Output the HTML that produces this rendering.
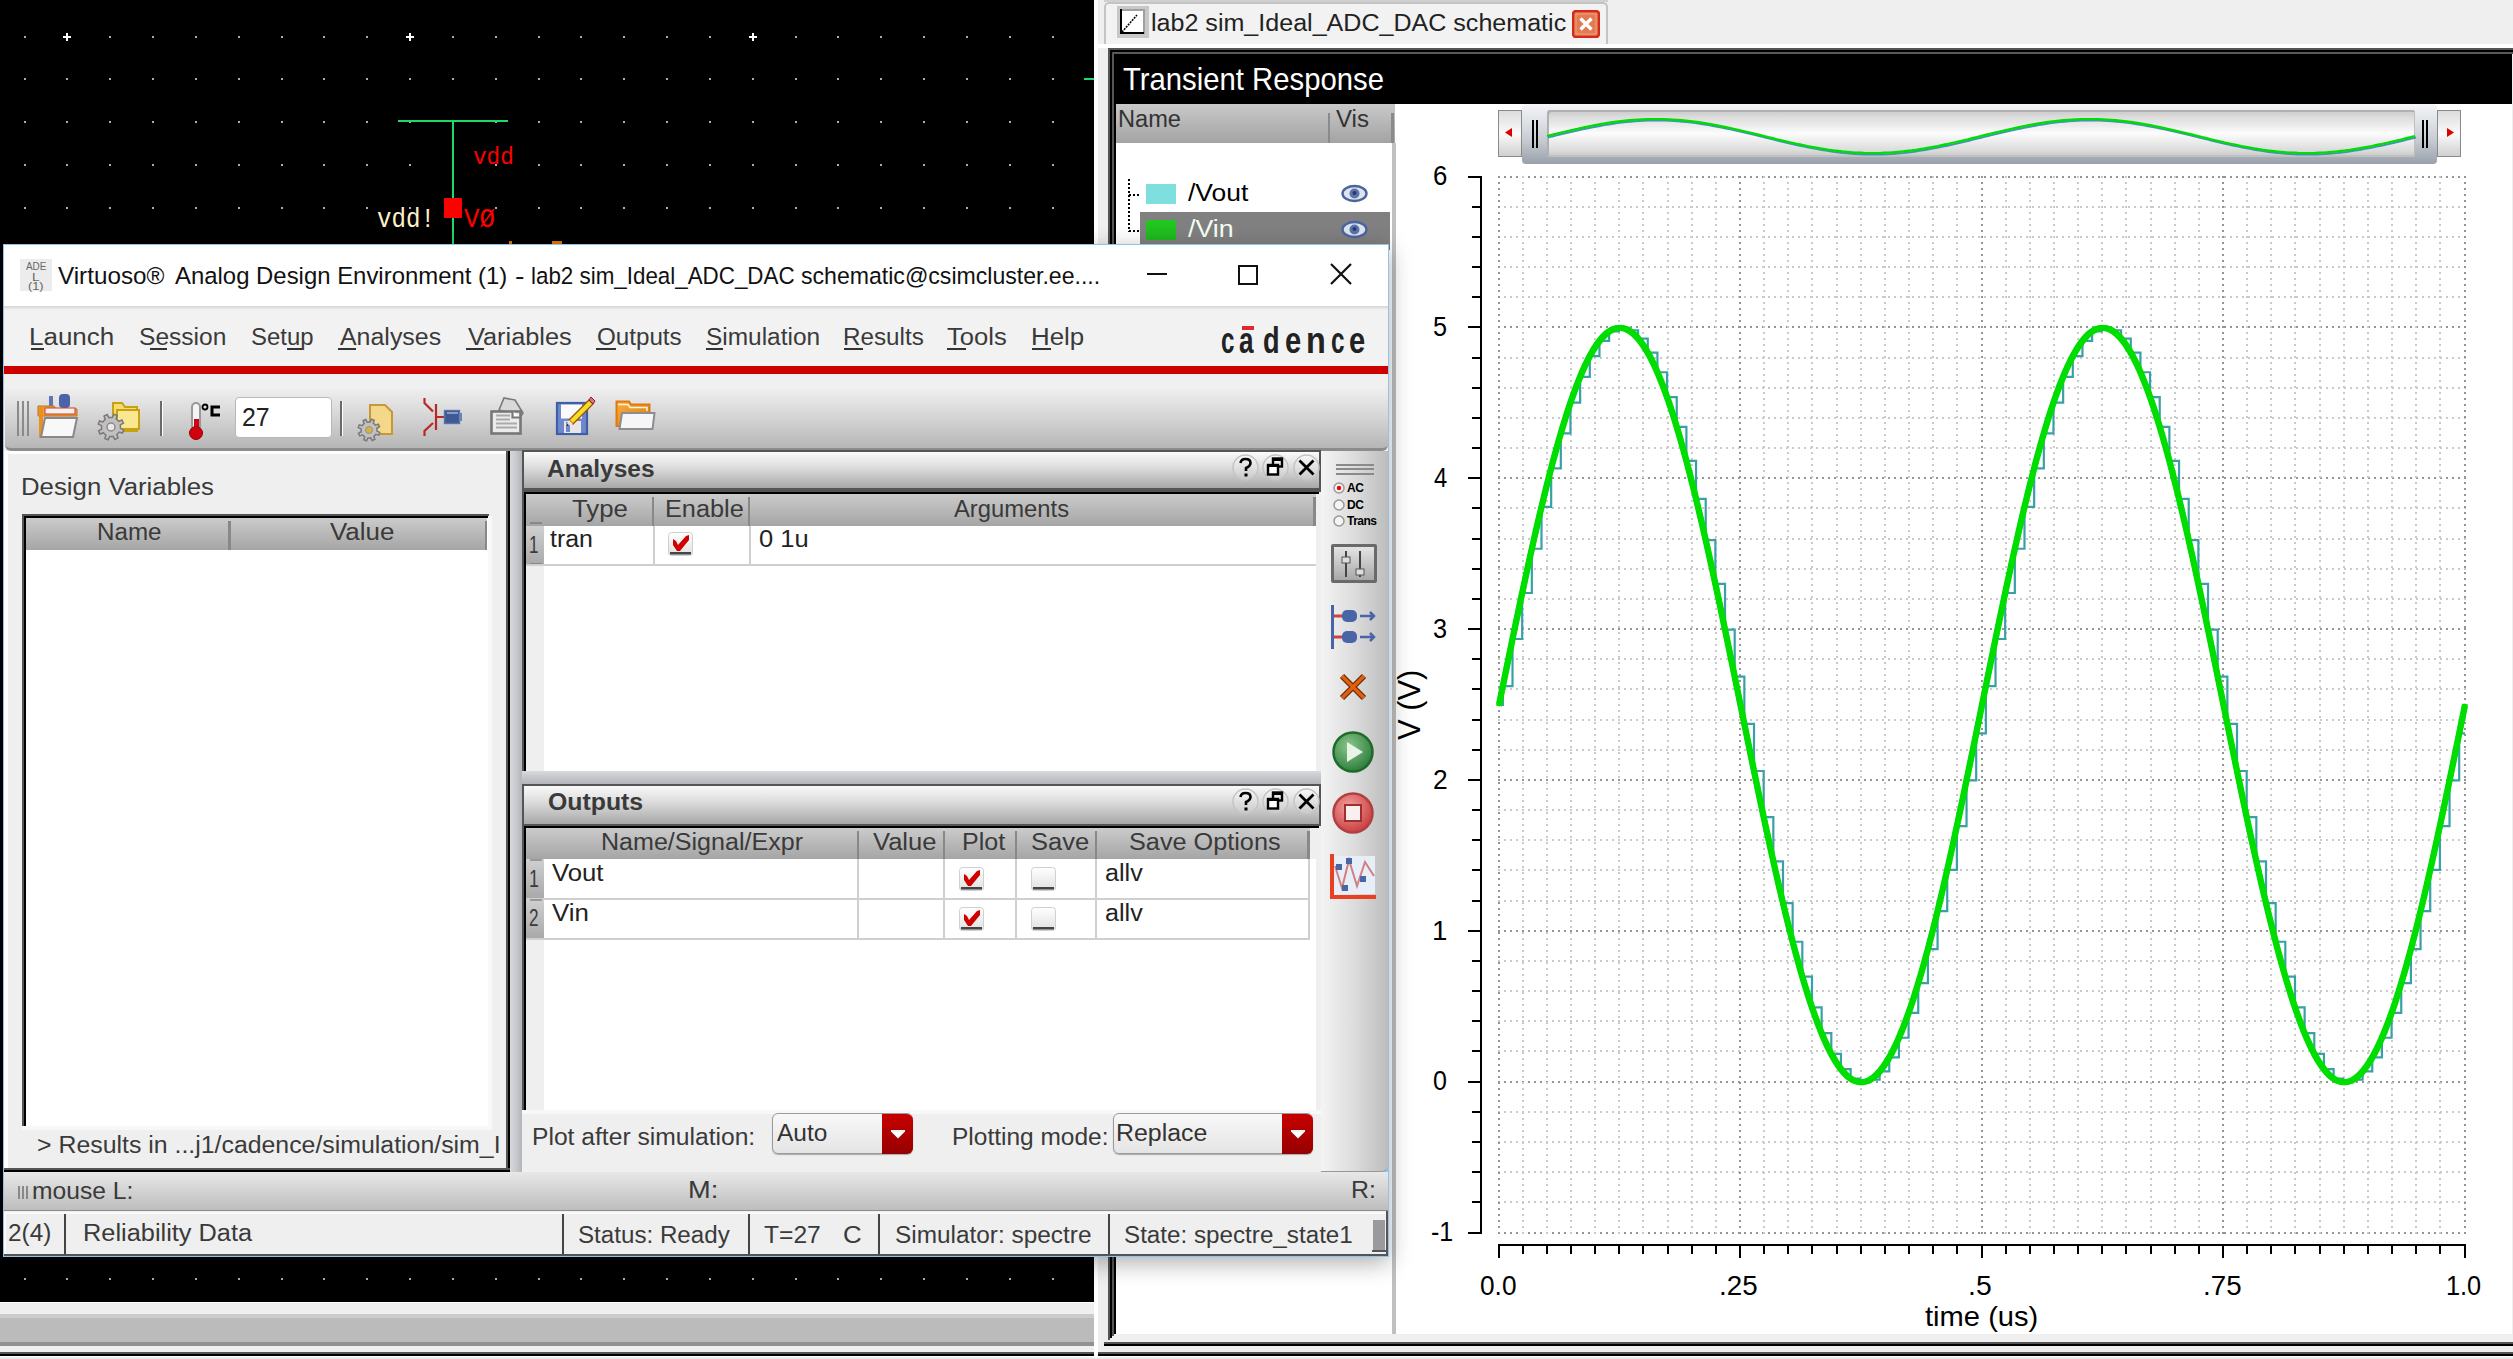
<!DOCTYPE html><html><head><meta charset="utf-8"><style>html,body{margin:0;padding:0;width:2513px;height:1359px;overflow:hidden;background:#efefef;}body{position:relative;font-family:"Liberation Sans",sans-serif;}</style></head><body>
<div style="position:absolute;left:0px;top:0px;width:1094px;height:1302px;background:#000;"></div>
<svg style="position:absolute;left:0;top:0" width="1094" height="1302"><g fill="#a9a9c9"><rect x="24" y="36" width="2" height="2"/><rect x="66" y="36" width="2" height="2"/><rect x="109" y="36" width="2" height="2"/><rect x="152" y="36" width="2" height="2"/><rect x="195" y="36" width="2" height="2"/><rect x="238" y="36" width="2" height="2"/><rect x="281" y="36" width="2" height="2"/><rect x="323" y="36" width="2" height="2"/><rect x="366" y="36" width="2" height="2"/><rect x="409" y="36" width="2" height="2"/><rect x="452" y="36" width="2" height="2"/><rect x="495" y="36" width="2" height="2"/><rect x="538" y="36" width="2" height="2"/><rect x="580" y="36" width="2" height="2"/><rect x="623" y="36" width="2" height="2"/><rect x="666" y="36" width="2" height="2"/><rect x="709" y="36" width="2" height="2"/><rect x="752" y="36" width="2" height="2"/><rect x="795" y="36" width="2" height="2"/><rect x="837" y="36" width="2" height="2"/><rect x="880" y="36" width="2" height="2"/><rect x="923" y="36" width="2" height="2"/><rect x="966" y="36" width="2" height="2"/><rect x="1009" y="36" width="2" height="2"/><rect x="1052" y="36" width="2" height="2"/><rect x="24" y="78" width="2" height="2"/><rect x="66" y="78" width="2" height="2"/><rect x="109" y="78" width="2" height="2"/><rect x="152" y="78" width="2" height="2"/><rect x="195" y="78" width="2" height="2"/><rect x="238" y="78" width="2" height="2"/><rect x="281" y="78" width="2" height="2"/><rect x="323" y="78" width="2" height="2"/><rect x="366" y="78" width="2" height="2"/><rect x="409" y="78" width="2" height="2"/><rect x="452" y="78" width="2" height="2"/><rect x="495" y="78" width="2" height="2"/><rect x="538" y="78" width="2" height="2"/><rect x="580" y="78" width="2" height="2"/><rect x="623" y="78" width="2" height="2"/><rect x="666" y="78" width="2" height="2"/><rect x="709" y="78" width="2" height="2"/><rect x="752" y="78" width="2" height="2"/><rect x="795" y="78" width="2" height="2"/><rect x="837" y="78" width="2" height="2"/><rect x="880" y="78" width="2" height="2"/><rect x="923" y="78" width="2" height="2"/><rect x="966" y="78" width="2" height="2"/><rect x="1009" y="78" width="2" height="2"/><rect x="1052" y="78" width="2" height="2"/><rect x="24" y="121" width="2" height="2"/><rect x="66" y="121" width="2" height="2"/><rect x="109" y="121" width="2" height="2"/><rect x="152" y="121" width="2" height="2"/><rect x="195" y="121" width="2" height="2"/><rect x="238" y="121" width="2" height="2"/><rect x="281" y="121" width="2" height="2"/><rect x="323" y="121" width="2" height="2"/><rect x="366" y="121" width="2" height="2"/><rect x="409" y="121" width="2" height="2"/><rect x="452" y="121" width="2" height="2"/><rect x="495" y="121" width="2" height="2"/><rect x="538" y="121" width="2" height="2"/><rect x="580" y="121" width="2" height="2"/><rect x="623" y="121" width="2" height="2"/><rect x="666" y="121" width="2" height="2"/><rect x="709" y="121" width="2" height="2"/><rect x="752" y="121" width="2" height="2"/><rect x="795" y="121" width="2" height="2"/><rect x="837" y="121" width="2" height="2"/><rect x="880" y="121" width="2" height="2"/><rect x="923" y="121" width="2" height="2"/><rect x="966" y="121" width="2" height="2"/><rect x="1009" y="121" width="2" height="2"/><rect x="1052" y="121" width="2" height="2"/><rect x="24" y="164" width="2" height="2"/><rect x="66" y="164" width="2" height="2"/><rect x="109" y="164" width="2" height="2"/><rect x="152" y="164" width="2" height="2"/><rect x="195" y="164" width="2" height="2"/><rect x="238" y="164" width="2" height="2"/><rect x="281" y="164" width="2" height="2"/><rect x="323" y="164" width="2" height="2"/><rect x="366" y="164" width="2" height="2"/><rect x="409" y="164" width="2" height="2"/><rect x="452" y="164" width="2" height="2"/><rect x="495" y="164" width="2" height="2"/><rect x="538" y="164" width="2" height="2"/><rect x="580" y="164" width="2" height="2"/><rect x="623" y="164" width="2" height="2"/><rect x="666" y="164" width="2" height="2"/><rect x="709" y="164" width="2" height="2"/><rect x="752" y="164" width="2" height="2"/><rect x="795" y="164" width="2" height="2"/><rect x="837" y="164" width="2" height="2"/><rect x="880" y="164" width="2" height="2"/><rect x="923" y="164" width="2" height="2"/><rect x="966" y="164" width="2" height="2"/><rect x="1009" y="164" width="2" height="2"/><rect x="1052" y="164" width="2" height="2"/><rect x="24" y="207" width="2" height="2"/><rect x="66" y="207" width="2" height="2"/><rect x="109" y="207" width="2" height="2"/><rect x="152" y="207" width="2" height="2"/><rect x="195" y="207" width="2" height="2"/><rect x="238" y="207" width="2" height="2"/><rect x="281" y="207" width="2" height="2"/><rect x="323" y="207" width="2" height="2"/><rect x="366" y="207" width="2" height="2"/><rect x="409" y="207" width="2" height="2"/><rect x="452" y="207" width="2" height="2"/><rect x="495" y="207" width="2" height="2"/><rect x="538" y="207" width="2" height="2"/><rect x="580" y="207" width="2" height="2"/><rect x="623" y="207" width="2" height="2"/><rect x="666" y="207" width="2" height="2"/><rect x="709" y="207" width="2" height="2"/><rect x="752" y="207" width="2" height="2"/><rect x="795" y="207" width="2" height="2"/><rect x="837" y="207" width="2" height="2"/><rect x="880" y="207" width="2" height="2"/><rect x="923" y="207" width="2" height="2"/><rect x="966" y="207" width="2" height="2"/><rect x="1009" y="207" width="2" height="2"/><rect x="1052" y="207" width="2" height="2"/><rect x="24" y="250" width="2" height="2"/><rect x="66" y="250" width="2" height="2"/><rect x="109" y="250" width="2" height="2"/><rect x="152" y="250" width="2" height="2"/><rect x="195" y="250" width="2" height="2"/><rect x="238" y="250" width="2" height="2"/><rect x="281" y="250" width="2" height="2"/><rect x="323" y="250" width="2" height="2"/><rect x="366" y="250" width="2" height="2"/><rect x="409" y="250" width="2" height="2"/><rect x="452" y="250" width="2" height="2"/><rect x="495" y="250" width="2" height="2"/><rect x="538" y="250" width="2" height="2"/><rect x="580" y="250" width="2" height="2"/><rect x="623" y="250" width="2" height="2"/><rect x="666" y="250" width="2" height="2"/><rect x="709" y="250" width="2" height="2"/><rect x="752" y="250" width="2" height="2"/><rect x="795" y="250" width="2" height="2"/><rect x="837" y="250" width="2" height="2"/><rect x="880" y="250" width="2" height="2"/><rect x="923" y="250" width="2" height="2"/><rect x="966" y="250" width="2" height="2"/><rect x="1009" y="250" width="2" height="2"/><rect x="1052" y="250" width="2" height="2"/><rect x="24" y="293" width="2" height="2"/><rect x="66" y="293" width="2" height="2"/><rect x="109" y="293" width="2" height="2"/><rect x="152" y="293" width="2" height="2"/><rect x="195" y="293" width="2" height="2"/><rect x="238" y="293" width="2" height="2"/><rect x="281" y="293" width="2" height="2"/><rect x="323" y="293" width="2" height="2"/><rect x="366" y="293" width="2" height="2"/><rect x="409" y="293" width="2" height="2"/><rect x="452" y="293" width="2" height="2"/><rect x="495" y="293" width="2" height="2"/><rect x="538" y="293" width="2" height="2"/><rect x="580" y="293" width="2" height="2"/><rect x="623" y="293" width="2" height="2"/><rect x="666" y="293" width="2" height="2"/><rect x="709" y="293" width="2" height="2"/><rect x="752" y="293" width="2" height="2"/><rect x="795" y="293" width="2" height="2"/><rect x="837" y="293" width="2" height="2"/><rect x="880" y="293" width="2" height="2"/><rect x="923" y="293" width="2" height="2"/><rect x="966" y="293" width="2" height="2"/><rect x="1009" y="293" width="2" height="2"/><rect x="1052" y="293" width="2" height="2"/><rect x="24" y="335" width="2" height="2"/><rect x="66" y="335" width="2" height="2"/><rect x="109" y="335" width="2" height="2"/><rect x="152" y="335" width="2" height="2"/><rect x="195" y="335" width="2" height="2"/><rect x="238" y="335" width="2" height="2"/><rect x="281" y="335" width="2" height="2"/><rect x="323" y="335" width="2" height="2"/><rect x="366" y="335" width="2" height="2"/><rect x="409" y="335" width="2" height="2"/><rect x="452" y="335" width="2" height="2"/><rect x="495" y="335" width="2" height="2"/><rect x="538" y="335" width="2" height="2"/><rect x="580" y="335" width="2" height="2"/><rect x="623" y="335" width="2" height="2"/><rect x="666" y="335" width="2" height="2"/><rect x="709" y="335" width="2" height="2"/><rect x="752" y="335" width="2" height="2"/><rect x="795" y="335" width="2" height="2"/><rect x="837" y="335" width="2" height="2"/><rect x="880" y="335" width="2" height="2"/><rect x="923" y="335" width="2" height="2"/><rect x="966" y="335" width="2" height="2"/><rect x="1009" y="335" width="2" height="2"/><rect x="1052" y="335" width="2" height="2"/><rect x="24" y="378" width="2" height="2"/><rect x="66" y="378" width="2" height="2"/><rect x="109" y="378" width="2" height="2"/><rect x="152" y="378" width="2" height="2"/><rect x="195" y="378" width="2" height="2"/><rect x="238" y="378" width="2" height="2"/><rect x="281" y="378" width="2" height="2"/><rect x="323" y="378" width="2" height="2"/><rect x="366" y="378" width="2" height="2"/><rect x="409" y="378" width="2" height="2"/><rect x="452" y="378" width="2" height="2"/><rect x="495" y="378" width="2" height="2"/><rect x="538" y="378" width="2" height="2"/><rect x="580" y="378" width="2" height="2"/><rect x="623" y="378" width="2" height="2"/><rect x="666" y="378" width="2" height="2"/><rect x="709" y="378" width="2" height="2"/><rect x="752" y="378" width="2" height="2"/><rect x="795" y="378" width="2" height="2"/><rect x="837" y="378" width="2" height="2"/><rect x="880" y="378" width="2" height="2"/><rect x="923" y="378" width="2" height="2"/><rect x="966" y="378" width="2" height="2"/><rect x="1009" y="378" width="2" height="2"/><rect x="1052" y="378" width="2" height="2"/><rect x="24" y="421" width="2" height="2"/><rect x="66" y="421" width="2" height="2"/><rect x="109" y="421" width="2" height="2"/><rect x="152" y="421" width="2" height="2"/><rect x="195" y="421" width="2" height="2"/><rect x="238" y="421" width="2" height="2"/><rect x="281" y="421" width="2" height="2"/><rect x="323" y="421" width="2" height="2"/><rect x="366" y="421" width="2" height="2"/><rect x="409" y="421" width="2" height="2"/><rect x="452" y="421" width="2" height="2"/><rect x="495" y="421" width="2" height="2"/><rect x="538" y="421" width="2" height="2"/><rect x="580" y="421" width="2" height="2"/><rect x="623" y="421" width="2" height="2"/><rect x="666" y="421" width="2" height="2"/><rect x="709" y="421" width="2" height="2"/><rect x="752" y="421" width="2" height="2"/><rect x="795" y="421" width="2" height="2"/><rect x="837" y="421" width="2" height="2"/><rect x="880" y="421" width="2" height="2"/><rect x="923" y="421" width="2" height="2"/><rect x="966" y="421" width="2" height="2"/><rect x="1009" y="421" width="2" height="2"/><rect x="1052" y="421" width="2" height="2"/><rect x="24" y="464" width="2" height="2"/><rect x="66" y="464" width="2" height="2"/><rect x="109" y="464" width="2" height="2"/><rect x="152" y="464" width="2" height="2"/><rect x="195" y="464" width="2" height="2"/><rect x="238" y="464" width="2" height="2"/><rect x="281" y="464" width="2" height="2"/><rect x="323" y="464" width="2" height="2"/><rect x="366" y="464" width="2" height="2"/><rect x="409" y="464" width="2" height="2"/><rect x="452" y="464" width="2" height="2"/><rect x="495" y="464" width="2" height="2"/><rect x="538" y="464" width="2" height="2"/><rect x="580" y="464" width="2" height="2"/><rect x="623" y="464" width="2" height="2"/><rect x="666" y="464" width="2" height="2"/><rect x="709" y="464" width="2" height="2"/><rect x="752" y="464" width="2" height="2"/><rect x="795" y="464" width="2" height="2"/><rect x="837" y="464" width="2" height="2"/><rect x="880" y="464" width="2" height="2"/><rect x="923" y="464" width="2" height="2"/><rect x="966" y="464" width="2" height="2"/><rect x="1009" y="464" width="2" height="2"/><rect x="1052" y="464" width="2" height="2"/><rect x="24" y="507" width="2" height="2"/><rect x="66" y="507" width="2" height="2"/><rect x="109" y="507" width="2" height="2"/><rect x="152" y="507" width="2" height="2"/><rect x="195" y="507" width="2" height="2"/><rect x="238" y="507" width="2" height="2"/><rect x="281" y="507" width="2" height="2"/><rect x="323" y="507" width="2" height="2"/><rect x="366" y="507" width="2" height="2"/><rect x="409" y="507" width="2" height="2"/><rect x="452" y="507" width="2" height="2"/><rect x="495" y="507" width="2" height="2"/><rect x="538" y="507" width="2" height="2"/><rect x="580" y="507" width="2" height="2"/><rect x="623" y="507" width="2" height="2"/><rect x="666" y="507" width="2" height="2"/><rect x="709" y="507" width="2" height="2"/><rect x="752" y="507" width="2" height="2"/><rect x="795" y="507" width="2" height="2"/><rect x="837" y="507" width="2" height="2"/><rect x="880" y="507" width="2" height="2"/><rect x="923" y="507" width="2" height="2"/><rect x="966" y="507" width="2" height="2"/><rect x="1009" y="507" width="2" height="2"/><rect x="1052" y="507" width="2" height="2"/><rect x="24" y="550" width="2" height="2"/><rect x="66" y="550" width="2" height="2"/><rect x="109" y="550" width="2" height="2"/><rect x="152" y="550" width="2" height="2"/><rect x="195" y="550" width="2" height="2"/><rect x="238" y="550" width="2" height="2"/><rect x="281" y="550" width="2" height="2"/><rect x="323" y="550" width="2" height="2"/><rect x="366" y="550" width="2" height="2"/><rect x="409" y="550" width="2" height="2"/><rect x="452" y="550" width="2" height="2"/><rect x="495" y="550" width="2" height="2"/><rect x="538" y="550" width="2" height="2"/><rect x="580" y="550" width="2" height="2"/><rect x="623" y="550" width="2" height="2"/><rect x="666" y="550" width="2" height="2"/><rect x="709" y="550" width="2" height="2"/><rect x="752" y="550" width="2" height="2"/><rect x="795" y="550" width="2" height="2"/><rect x="837" y="550" width="2" height="2"/><rect x="880" y="550" width="2" height="2"/><rect x="923" y="550" width="2" height="2"/><rect x="966" y="550" width="2" height="2"/><rect x="1009" y="550" width="2" height="2"/><rect x="1052" y="550" width="2" height="2"/><rect x="24" y="592" width="2" height="2"/><rect x="66" y="592" width="2" height="2"/><rect x="109" y="592" width="2" height="2"/><rect x="152" y="592" width="2" height="2"/><rect x="195" y="592" width="2" height="2"/><rect x="238" y="592" width="2" height="2"/><rect x="281" y="592" width="2" height="2"/><rect x="323" y="592" width="2" height="2"/><rect x="366" y="592" width="2" height="2"/><rect x="409" y="592" width="2" height="2"/><rect x="452" y="592" width="2" height="2"/><rect x="495" y="592" width="2" height="2"/><rect x="538" y="592" width="2" height="2"/><rect x="580" y="592" width="2" height="2"/><rect x="623" y="592" width="2" height="2"/><rect x="666" y="592" width="2" height="2"/><rect x="709" y="592" width="2" height="2"/><rect x="752" y="592" width="2" height="2"/><rect x="795" y="592" width="2" height="2"/><rect x="837" y="592" width="2" height="2"/><rect x="880" y="592" width="2" height="2"/><rect x="923" y="592" width="2" height="2"/><rect x="966" y="592" width="2" height="2"/><rect x="1009" y="592" width="2" height="2"/><rect x="1052" y="592" width="2" height="2"/><rect x="24" y="635" width="2" height="2"/><rect x="66" y="635" width="2" height="2"/><rect x="109" y="635" width="2" height="2"/><rect x="152" y="635" width="2" height="2"/><rect x="195" y="635" width="2" height="2"/><rect x="238" y="635" width="2" height="2"/><rect x="281" y="635" width="2" height="2"/><rect x="323" y="635" width="2" height="2"/><rect x="366" y="635" width="2" height="2"/><rect x="409" y="635" width="2" height="2"/><rect x="452" y="635" width="2" height="2"/><rect x="495" y="635" width="2" height="2"/><rect x="538" y="635" width="2" height="2"/><rect x="580" y="635" width="2" height="2"/><rect x="623" y="635" width="2" height="2"/><rect x="666" y="635" width="2" height="2"/><rect x="709" y="635" width="2" height="2"/><rect x="752" y="635" width="2" height="2"/><rect x="795" y="635" width="2" height="2"/><rect x="837" y="635" width="2" height="2"/><rect x="880" y="635" width="2" height="2"/><rect x="923" y="635" width="2" height="2"/><rect x="966" y="635" width="2" height="2"/><rect x="1009" y="635" width="2" height="2"/><rect x="1052" y="635" width="2" height="2"/><rect x="24" y="678" width="2" height="2"/><rect x="66" y="678" width="2" height="2"/><rect x="109" y="678" width="2" height="2"/><rect x="152" y="678" width="2" height="2"/><rect x="195" y="678" width="2" height="2"/><rect x="238" y="678" width="2" height="2"/><rect x="281" y="678" width="2" height="2"/><rect x="323" y="678" width="2" height="2"/><rect x="366" y="678" width="2" height="2"/><rect x="409" y="678" width="2" height="2"/><rect x="452" y="678" width="2" height="2"/><rect x="495" y="678" width="2" height="2"/><rect x="538" y="678" width="2" height="2"/><rect x="580" y="678" width="2" height="2"/><rect x="623" y="678" width="2" height="2"/><rect x="666" y="678" width="2" height="2"/><rect x="709" y="678" width="2" height="2"/><rect x="752" y="678" width="2" height="2"/><rect x="795" y="678" width="2" height="2"/><rect x="837" y="678" width="2" height="2"/><rect x="880" y="678" width="2" height="2"/><rect x="923" y="678" width="2" height="2"/><rect x="966" y="678" width="2" height="2"/><rect x="1009" y="678" width="2" height="2"/><rect x="1052" y="678" width="2" height="2"/><rect x="24" y="721" width="2" height="2"/><rect x="66" y="721" width="2" height="2"/><rect x="109" y="721" width="2" height="2"/><rect x="152" y="721" width="2" height="2"/><rect x="195" y="721" width="2" height="2"/><rect x="238" y="721" width="2" height="2"/><rect x="281" y="721" width="2" height="2"/><rect x="323" y="721" width="2" height="2"/><rect x="366" y="721" width="2" height="2"/><rect x="409" y="721" width="2" height="2"/><rect x="452" y="721" width="2" height="2"/><rect x="495" y="721" width="2" height="2"/><rect x="538" y="721" width="2" height="2"/><rect x="580" y="721" width="2" height="2"/><rect x="623" y="721" width="2" height="2"/><rect x="666" y="721" width="2" height="2"/><rect x="709" y="721" width="2" height="2"/><rect x="752" y="721" width="2" height="2"/><rect x="795" y="721" width="2" height="2"/><rect x="837" y="721" width="2" height="2"/><rect x="880" y="721" width="2" height="2"/><rect x="923" y="721" width="2" height="2"/><rect x="966" y="721" width="2" height="2"/><rect x="1009" y="721" width="2" height="2"/><rect x="1052" y="721" width="2" height="2"/><rect x="24" y="764" width="2" height="2"/><rect x="66" y="764" width="2" height="2"/><rect x="109" y="764" width="2" height="2"/><rect x="152" y="764" width="2" height="2"/><rect x="195" y="764" width="2" height="2"/><rect x="238" y="764" width="2" height="2"/><rect x="281" y="764" width="2" height="2"/><rect x="323" y="764" width="2" height="2"/><rect x="366" y="764" width="2" height="2"/><rect x="409" y="764" width="2" height="2"/><rect x="452" y="764" width="2" height="2"/><rect x="495" y="764" width="2" height="2"/><rect x="538" y="764" width="2" height="2"/><rect x="580" y="764" width="2" height="2"/><rect x="623" y="764" width="2" height="2"/><rect x="666" y="764" width="2" height="2"/><rect x="709" y="764" width="2" height="2"/><rect x="752" y="764" width="2" height="2"/><rect x="795" y="764" width="2" height="2"/><rect x="837" y="764" width="2" height="2"/><rect x="880" y="764" width="2" height="2"/><rect x="923" y="764" width="2" height="2"/><rect x="966" y="764" width="2" height="2"/><rect x="1009" y="764" width="2" height="2"/><rect x="1052" y="764" width="2" height="2"/><rect x="24" y="807" width="2" height="2"/><rect x="66" y="807" width="2" height="2"/><rect x="109" y="807" width="2" height="2"/><rect x="152" y="807" width="2" height="2"/><rect x="195" y="807" width="2" height="2"/><rect x="238" y="807" width="2" height="2"/><rect x="281" y="807" width="2" height="2"/><rect x="323" y="807" width="2" height="2"/><rect x="366" y="807" width="2" height="2"/><rect x="409" y="807" width="2" height="2"/><rect x="452" y="807" width="2" height="2"/><rect x="495" y="807" width="2" height="2"/><rect x="538" y="807" width="2" height="2"/><rect x="580" y="807" width="2" height="2"/><rect x="623" y="807" width="2" height="2"/><rect x="666" y="807" width="2" height="2"/><rect x="709" y="807" width="2" height="2"/><rect x="752" y="807" width="2" height="2"/><rect x="795" y="807" width="2" height="2"/><rect x="837" y="807" width="2" height="2"/><rect x="880" y="807" width="2" height="2"/><rect x="923" y="807" width="2" height="2"/><rect x="966" y="807" width="2" height="2"/><rect x="1009" y="807" width="2" height="2"/><rect x="1052" y="807" width="2" height="2"/><rect x="24" y="849" width="2" height="2"/><rect x="66" y="849" width="2" height="2"/><rect x="109" y="849" width="2" height="2"/><rect x="152" y="849" width="2" height="2"/><rect x="195" y="849" width="2" height="2"/><rect x="238" y="849" width="2" height="2"/><rect x="281" y="849" width="2" height="2"/><rect x="323" y="849" width="2" height="2"/><rect x="366" y="849" width="2" height="2"/><rect x="409" y="849" width="2" height="2"/><rect x="452" y="849" width="2" height="2"/><rect x="495" y="849" width="2" height="2"/><rect x="538" y="849" width="2" height="2"/><rect x="580" y="849" width="2" height="2"/><rect x="623" y="849" width="2" height="2"/><rect x="666" y="849" width="2" height="2"/><rect x="709" y="849" width="2" height="2"/><rect x="752" y="849" width="2" height="2"/><rect x="795" y="849" width="2" height="2"/><rect x="837" y="849" width="2" height="2"/><rect x="880" y="849" width="2" height="2"/><rect x="923" y="849" width="2" height="2"/><rect x="966" y="849" width="2" height="2"/><rect x="1009" y="849" width="2" height="2"/><rect x="1052" y="849" width="2" height="2"/><rect x="24" y="892" width="2" height="2"/><rect x="66" y="892" width="2" height="2"/><rect x="109" y="892" width="2" height="2"/><rect x="152" y="892" width="2" height="2"/><rect x="195" y="892" width="2" height="2"/><rect x="238" y="892" width="2" height="2"/><rect x="281" y="892" width="2" height="2"/><rect x="323" y="892" width="2" height="2"/><rect x="366" y="892" width="2" height="2"/><rect x="409" y="892" width="2" height="2"/><rect x="452" y="892" width="2" height="2"/><rect x="495" y="892" width="2" height="2"/><rect x="538" y="892" width="2" height="2"/><rect x="580" y="892" width="2" height="2"/><rect x="623" y="892" width="2" height="2"/><rect x="666" y="892" width="2" height="2"/><rect x="709" y="892" width="2" height="2"/><rect x="752" y="892" width="2" height="2"/><rect x="795" y="892" width="2" height="2"/><rect x="837" y="892" width="2" height="2"/><rect x="880" y="892" width="2" height="2"/><rect x="923" y="892" width="2" height="2"/><rect x="966" y="892" width="2" height="2"/><rect x="1009" y="892" width="2" height="2"/><rect x="1052" y="892" width="2" height="2"/><rect x="24" y="935" width="2" height="2"/><rect x="66" y="935" width="2" height="2"/><rect x="109" y="935" width="2" height="2"/><rect x="152" y="935" width="2" height="2"/><rect x="195" y="935" width="2" height="2"/><rect x="238" y="935" width="2" height="2"/><rect x="281" y="935" width="2" height="2"/><rect x="323" y="935" width="2" height="2"/><rect x="366" y="935" width="2" height="2"/><rect x="409" y="935" width="2" height="2"/><rect x="452" y="935" width="2" height="2"/><rect x="495" y="935" width="2" height="2"/><rect x="538" y="935" width="2" height="2"/><rect x="580" y="935" width="2" height="2"/><rect x="623" y="935" width="2" height="2"/><rect x="666" y="935" width="2" height="2"/><rect x="709" y="935" width="2" height="2"/><rect x="752" y="935" width="2" height="2"/><rect x="795" y="935" width="2" height="2"/><rect x="837" y="935" width="2" height="2"/><rect x="880" y="935" width="2" height="2"/><rect x="923" y="935" width="2" height="2"/><rect x="966" y="935" width="2" height="2"/><rect x="1009" y="935" width="2" height="2"/><rect x="1052" y="935" width="2" height="2"/><rect x="24" y="978" width="2" height="2"/><rect x="66" y="978" width="2" height="2"/><rect x="109" y="978" width="2" height="2"/><rect x="152" y="978" width="2" height="2"/><rect x="195" y="978" width="2" height="2"/><rect x="238" y="978" width="2" height="2"/><rect x="281" y="978" width="2" height="2"/><rect x="323" y="978" width="2" height="2"/><rect x="366" y="978" width="2" height="2"/><rect x="409" y="978" width="2" height="2"/><rect x="452" y="978" width="2" height="2"/><rect x="495" y="978" width="2" height="2"/><rect x="538" y="978" width="2" height="2"/><rect x="580" y="978" width="2" height="2"/><rect x="623" y="978" width="2" height="2"/><rect x="666" y="978" width="2" height="2"/><rect x="709" y="978" width="2" height="2"/><rect x="752" y="978" width="2" height="2"/><rect x="795" y="978" width="2" height="2"/><rect x="837" y="978" width="2" height="2"/><rect x="880" y="978" width="2" height="2"/><rect x="923" y="978" width="2" height="2"/><rect x="966" y="978" width="2" height="2"/><rect x="1009" y="978" width="2" height="2"/><rect x="1052" y="978" width="2" height="2"/><rect x="24" y="1021" width="2" height="2"/><rect x="66" y="1021" width="2" height="2"/><rect x="109" y="1021" width="2" height="2"/><rect x="152" y="1021" width="2" height="2"/><rect x="195" y="1021" width="2" height="2"/><rect x="238" y="1021" width="2" height="2"/><rect x="281" y="1021" width="2" height="2"/><rect x="323" y="1021" width="2" height="2"/><rect x="366" y="1021" width="2" height="2"/><rect x="409" y="1021" width="2" height="2"/><rect x="452" y="1021" width="2" height="2"/><rect x="495" y="1021" width="2" height="2"/><rect x="538" y="1021" width="2" height="2"/><rect x="580" y="1021" width="2" height="2"/><rect x="623" y="1021" width="2" height="2"/><rect x="666" y="1021" width="2" height="2"/><rect x="709" y="1021" width="2" height="2"/><rect x="752" y="1021" width="2" height="2"/><rect x="795" y="1021" width="2" height="2"/><rect x="837" y="1021" width="2" height="2"/><rect x="880" y="1021" width="2" height="2"/><rect x="923" y="1021" width="2" height="2"/><rect x="966" y="1021" width="2" height="2"/><rect x="1009" y="1021" width="2" height="2"/><rect x="1052" y="1021" width="2" height="2"/><rect x="24" y="1064" width="2" height="2"/><rect x="66" y="1064" width="2" height="2"/><rect x="109" y="1064" width="2" height="2"/><rect x="152" y="1064" width="2" height="2"/><rect x="195" y="1064" width="2" height="2"/><rect x="238" y="1064" width="2" height="2"/><rect x="281" y="1064" width="2" height="2"/><rect x="323" y="1064" width="2" height="2"/><rect x="366" y="1064" width="2" height="2"/><rect x="409" y="1064" width="2" height="2"/><rect x="452" y="1064" width="2" height="2"/><rect x="495" y="1064" width="2" height="2"/><rect x="538" y="1064" width="2" height="2"/><rect x="580" y="1064" width="2" height="2"/><rect x="623" y="1064" width="2" height="2"/><rect x="666" y="1064" width="2" height="2"/><rect x="709" y="1064" width="2" height="2"/><rect x="752" y="1064" width="2" height="2"/><rect x="795" y="1064" width="2" height="2"/><rect x="837" y="1064" width="2" height="2"/><rect x="880" y="1064" width="2" height="2"/><rect x="923" y="1064" width="2" height="2"/><rect x="966" y="1064" width="2" height="2"/><rect x="1009" y="1064" width="2" height="2"/><rect x="1052" y="1064" width="2" height="2"/><rect x="24" y="1106" width="2" height="2"/><rect x="66" y="1106" width="2" height="2"/><rect x="109" y="1106" width="2" height="2"/><rect x="152" y="1106" width="2" height="2"/><rect x="195" y="1106" width="2" height="2"/><rect x="238" y="1106" width="2" height="2"/><rect x="281" y="1106" width="2" height="2"/><rect x="323" y="1106" width="2" height="2"/><rect x="366" y="1106" width="2" height="2"/><rect x="409" y="1106" width="2" height="2"/><rect x="452" y="1106" width="2" height="2"/><rect x="495" y="1106" width="2" height="2"/><rect x="538" y="1106" width="2" height="2"/><rect x="580" y="1106" width="2" height="2"/><rect x="623" y="1106" width="2" height="2"/><rect x="666" y="1106" width="2" height="2"/><rect x="709" y="1106" width="2" height="2"/><rect x="752" y="1106" width="2" height="2"/><rect x="795" y="1106" width="2" height="2"/><rect x="837" y="1106" width="2" height="2"/><rect x="880" y="1106" width="2" height="2"/><rect x="923" y="1106" width="2" height="2"/><rect x="966" y="1106" width="2" height="2"/><rect x="1009" y="1106" width="2" height="2"/><rect x="1052" y="1106" width="2" height="2"/><rect x="24" y="1149" width="2" height="2"/><rect x="66" y="1149" width="2" height="2"/><rect x="109" y="1149" width="2" height="2"/><rect x="152" y="1149" width="2" height="2"/><rect x="195" y="1149" width="2" height="2"/><rect x="238" y="1149" width="2" height="2"/><rect x="281" y="1149" width="2" height="2"/><rect x="323" y="1149" width="2" height="2"/><rect x="366" y="1149" width="2" height="2"/><rect x="409" y="1149" width="2" height="2"/><rect x="452" y="1149" width="2" height="2"/><rect x="495" y="1149" width="2" height="2"/><rect x="538" y="1149" width="2" height="2"/><rect x="580" y="1149" width="2" height="2"/><rect x="623" y="1149" width="2" height="2"/><rect x="666" y="1149" width="2" height="2"/><rect x="709" y="1149" width="2" height="2"/><rect x="752" y="1149" width="2" height="2"/><rect x="795" y="1149" width="2" height="2"/><rect x="837" y="1149" width="2" height="2"/><rect x="880" y="1149" width="2" height="2"/><rect x="923" y="1149" width="2" height="2"/><rect x="966" y="1149" width="2" height="2"/><rect x="1009" y="1149" width="2" height="2"/><rect x="1052" y="1149" width="2" height="2"/><rect x="24" y="1192" width="2" height="2"/><rect x="66" y="1192" width="2" height="2"/><rect x="109" y="1192" width="2" height="2"/><rect x="152" y="1192" width="2" height="2"/><rect x="195" y="1192" width="2" height="2"/><rect x="238" y="1192" width="2" height="2"/><rect x="281" y="1192" width="2" height="2"/><rect x="323" y="1192" width="2" height="2"/><rect x="366" y="1192" width="2" height="2"/><rect x="409" y="1192" width="2" height="2"/><rect x="452" y="1192" width="2" height="2"/><rect x="495" y="1192" width="2" height="2"/><rect x="538" y="1192" width="2" height="2"/><rect x="580" y="1192" width="2" height="2"/><rect x="623" y="1192" width="2" height="2"/><rect x="666" y="1192" width="2" height="2"/><rect x="709" y="1192" width="2" height="2"/><rect x="752" y="1192" width="2" height="2"/><rect x="795" y="1192" width="2" height="2"/><rect x="837" y="1192" width="2" height="2"/><rect x="880" y="1192" width="2" height="2"/><rect x="923" y="1192" width="2" height="2"/><rect x="966" y="1192" width="2" height="2"/><rect x="1009" y="1192" width="2" height="2"/><rect x="1052" y="1192" width="2" height="2"/><rect x="24" y="1235" width="2" height="2"/><rect x="66" y="1235" width="2" height="2"/><rect x="109" y="1235" width="2" height="2"/><rect x="152" y="1235" width="2" height="2"/><rect x="195" y="1235" width="2" height="2"/><rect x="238" y="1235" width="2" height="2"/><rect x="281" y="1235" width="2" height="2"/><rect x="323" y="1235" width="2" height="2"/><rect x="366" y="1235" width="2" height="2"/><rect x="409" y="1235" width="2" height="2"/><rect x="452" y="1235" width="2" height="2"/><rect x="495" y="1235" width="2" height="2"/><rect x="538" y="1235" width="2" height="2"/><rect x="580" y="1235" width="2" height="2"/><rect x="623" y="1235" width="2" height="2"/><rect x="666" y="1235" width="2" height="2"/><rect x="709" y="1235" width="2" height="2"/><rect x="752" y="1235" width="2" height="2"/><rect x="795" y="1235" width="2" height="2"/><rect x="837" y="1235" width="2" height="2"/><rect x="880" y="1235" width="2" height="2"/><rect x="923" y="1235" width="2" height="2"/><rect x="966" y="1235" width="2" height="2"/><rect x="1009" y="1235" width="2" height="2"/><rect x="1052" y="1235" width="2" height="2"/><rect x="24" y="1278" width="2" height="2"/><rect x="66" y="1278" width="2" height="2"/><rect x="109" y="1278" width="2" height="2"/><rect x="152" y="1278" width="2" height="2"/><rect x="195" y="1278" width="2" height="2"/><rect x="238" y="1278" width="2" height="2"/><rect x="281" y="1278" width="2" height="2"/><rect x="323" y="1278" width="2" height="2"/><rect x="366" y="1278" width="2" height="2"/><rect x="409" y="1278" width="2" height="2"/><rect x="452" y="1278" width="2" height="2"/><rect x="495" y="1278" width="2" height="2"/><rect x="538" y="1278" width="2" height="2"/><rect x="580" y="1278" width="2" height="2"/><rect x="623" y="1278" width="2" height="2"/><rect x="666" y="1278" width="2" height="2"/><rect x="709" y="1278" width="2" height="2"/><rect x="752" y="1278" width="2" height="2"/><rect x="795" y="1278" width="2" height="2"/><rect x="837" y="1278" width="2" height="2"/><rect x="880" y="1278" width="2" height="2"/><rect x="923" y="1278" width="2" height="2"/><rect x="966" y="1278" width="2" height="2"/><rect x="1009" y="1278" width="2" height="2"/><rect x="1052" y="1278" width="2" height="2"/></g><g fill="#fff"><rect x="63" y="36" width="8" height="2"/><rect x="66" y="33" width="2" height="8"/><rect x="406" y="36" width="8" height="2"/><rect x="409" y="33" width="2" height="8"/><rect x="749" y="36" width="8" height="2"/><rect x="752" y="33" width="2" height="8"/></g><g fill="#1bd96a"><rect x="398" y="120" width="110" height="2"/><rect x="452" y="121" width="2" height="130"/><rect x="1084" y="78" width="10" height="2"/></g><rect x="444" y="198" width="18" height="20" fill="#ff0000"/><rect x="509" y="241" width="3" height="3" fill="#e07800"/><rect x="552" y="241" width="10" height="3" fill="#e07800"/></svg>
<div style="position:absolute;left:473.21px;top:146.03px;font:400 23.5px/1 'Liberation Mono',monospace;color:#ff0000;white-space:pre;transform-origin:0 0;transform:scaleX(0.9654);">vdd</div>
<div style="position:absolute;left:377.16px;top:207.05px;font:400 27px/1 'Liberation Mono',monospace;color:#fff0c8;white-space:pre;transform-origin:0 0;transform:scaleX(0.8931);">vdd!</div>
<div style="position:absolute;left:463.87px;top:207.05px;font:400 27px/1 'Liberation Mono',monospace;color:#ff0000;white-space:pre;transform-origin:0 0;transform:scaleX(0.9537);">VØ</div>
<div style="position:absolute;left:1094px;top:0px;width:4px;height:1357px;background:#ffffff;"></div>
<div style="position:absolute;left:0px;top:1302px;width:1094px;height:1px;background:#fff;"></div>
<div style="position:absolute;left:0px;top:1303px;width:1094px;height:11px;background:#efefef;"></div>
<div style="position:absolute;left:0px;top:1314px;width:1094px;height:4px;background:#cccccc;"></div>
<div style="position:absolute;left:0px;top:1318px;width:1094px;height:24px;background:#bbbbbb;"></div>
<div style="position:absolute;left:0px;top:1342px;width:1094px;height:4px;background:#919191;"></div>
<div style="position:absolute;left:0px;top:1346px;width:1094px;height:6px;background:#efefef;"></div>
<div style="position:absolute;left:0px;top:1352px;width:1094px;height:2px;background:#555;"></div>
<div style="position:absolute;left:0px;top:1354px;width:1094px;height:2px;background:#000;"></div>
<div style="position:absolute;left:0px;top:1356px;width:1094px;height:1px;background:#fff;"></div>
<div style="position:absolute;left:0px;top:1357px;width:1094px;height:2px;background:#eaeaea;"></div>
<div style="position:absolute;left:1098px;top:0px;width:1415px;height:1359px;background:#efefef;"></div>
<div style="position:absolute;left:1104px;top:2px;width:500px;height:42px;background:#f2f2f2;border:2px solid #c4c4c4;border-bottom:none;border-radius:5px 5px 0 0"></div>
<div style="position:absolute;left:1104px;top:0px;width:504px;height:2px;background:#d0d0d0;"></div>
<div style="position:absolute;left:1098px;top:44px;width:1415px;height:4px;background:#ffffff;"></div>
<svg style="position:absolute;left:1117px;top:6px" width="32" height="32"><rect x="0" y="0" width="32" height="32" fill="#c8c8c8"/><rect x="4" y="4" width="23" height="23" fill="#fff" stroke="#a0a0a0" stroke-width="2"/><path d="M4 3 V27 H27" stroke="#000" stroke-width="2" fill="none"/><path d="M5 26 L20 9" stroke="#000" stroke-width="1.6" stroke-dasharray="2 1"/></svg>
<div style="position:absolute;left:1151.37px;top:12.03px;font:400 23.5px/1 'Liberation Sans',sans-serif;color:#222;white-space:pre;transform-origin:0 0;transform:scaleX(1.0667);">lab2 sim_Ideal_ADC_DAC schematic</div>
<svg style="position:absolute;left:1572px;top:10px" width="28" height="28"><rect x="1" y="1" width="26" height="26" rx="3" fill="#e27a52" stroke="#d42818" stroke-width="2.4"/><rect x="4" y="4" width="20" height="20" fill="none" stroke="#eca27e" stroke-width="1"/><path d="M8.5 8.5 L19.5 19.5 M19.5 8.5 L8.5 19.5" stroke="#fff" stroke-width="3.4"/></svg>
<div style="position:absolute;left:1108px;top:48px;width:1405px;height:2px;background:#555;"></div>
<div style="position:absolute;left:1110px;top:50px;width:1403px;height:2px;background:#000;"></div>
<div style="position:absolute;left:1112px;top:52px;width:1401px;height:2px;background:#5a5a5a;"></div>
<div style="position:absolute;left:1108px;top:48px;width:2px;height:1292px;background:#555;"></div>
<div style="position:absolute;left:1110px;top:50px;width:2px;height:1288px;background:#000;"></div>
<div style="position:absolute;left:1112px;top:52px;width:2px;height:1284px;background:#555;"></div>
<div style="position:absolute;left:1114px;top:54px;width:2px;height:1280px;background:#000;"></div>
<div style="position:absolute;left:1104px;top:1342px;width:1409px;height:2px;background:#555;"></div>
<div style="position:absolute;left:1104px;top:1344px;width:1409px;height:2px;background:#000;"></div>
<div style="position:absolute;left:1098px;top:1352px;width:1415px;height:2px;background:#555;"></div>
<div style="position:absolute;left:1098px;top:1354px;width:1415px;height:2px;background:#000;"></div>
<div style="position:absolute;left:1098px;top:1356px;width:1415px;height:1px;background:#fff;"></div>
<div style="position:absolute;left:1098px;top:1357px;width:1415px;height:2px;background:#eaeaea;"></div>
<div style="position:absolute;left:1116px;top:54px;width:1396px;height:50px;background:#000;"></div>
<div style="position:absolute;left:1123.41px;top:62.80px;font:400 32px/1 'Liberation Sans',sans-serif;color:#fff;white-space:pre;transform-origin:0 0;transform:scaleX(0.9151);">Transient Response</div>
<div style="position:absolute;left:1116px;top:104px;width:1396px;height:1230px;background:#fff;"></div>
<div style="position:absolute;left:1116px;top:104px;width:279px;height:39px;background:linear-gradient(#c9c9c9,#a3a3a3);"></div>
<div style="position:absolute;left:1328px;top:113px;width:2px;height:30px;background:#8a8a8a;"></div>
<div style="position:absolute;left:1391px;top:113px;width:3px;height:30px;background:#8a8a8a;"></div>
<div style="position:absolute;left:1118.11px;top:107.53px;font:400 23.5px/1 'Liberation Sans',sans-serif;color:#333;white-space:pre;transform-origin:0 0;transform:scaleX(1.0052);">Name</div>
<div style="position:absolute;left:1335.88px;top:107.53px;font:400 23.5px/1 'Liberation Sans',sans-serif;color:#333;white-space:pre;transform-origin:0 0;transform:scaleX(1.0238);">Vis</div>
<div style="position:absolute;left:1392px;top:143px;width:4px;height:1191px;background:#c0c0c0;"></div>
<svg style="position:absolute;left:1126px;top:176px" width="16" height="60"><path d="M3 3 V56 M3 19 H13 M3 55 H13" stroke="#000" stroke-width="2" stroke-dasharray="2 2"/></svg>
<div style="position:absolute;left:1146px;top:184px;width:30px;height:20px;background:#7fdede;"></div>
<div style="position:absolute;left:1188.00px;top:181.53px;font:400 23.5px/1 'Liberation Sans',sans-serif;color:#000;white-space:pre;transform-origin:0 0;transform:scaleX(1.1248);">/Vout</div>
<div style="position:absolute;left:1140px;top:212px;width:250px;height:38px;background:#808080;"></div>
<div style="position:absolute;left:1146px;top:220px;width:30px;height:20px;background:linear-gradient(#22c822,#1eb81e);"></div>
<div style="position:absolute;left:1188.00px;top:217.53px;font:400 23.5px/1 'Liberation Sans',sans-serif;color:#f4fff4;white-space:pre;transform-origin:0 0;transform:scaleX(1.1417);">/Vin</div>
<svg style="position:absolute;left:1341px;top:184px" width="28" height="20"><ellipse cx="13.5" cy="9.5" rx="12" ry="7.5" fill="#dde4f0" stroke="#4a64a0" stroke-width="2.4"/><circle cx="13.5" cy="9.5" r="5" fill="#5a74a8"/><circle cx="13.5" cy="9" r="2" fill="#2a3a70"/></svg>
<svg style="position:absolute;left:1341px;top:220px" width="28" height="20"><ellipse cx="13.5" cy="9.5" rx="12" ry="7.5" fill="#dde4f0" stroke="#4a64a0" stroke-width="2.4"/><circle cx="13.5" cy="9.5" r="5" fill="#5a74a8"/><circle cx="13.5" cy="9" r="2" fill="#2a3a70"/></svg>
<div style="position:absolute;left:1498px;top:110px;width:22px;height:45px;border:1px solid #8a8a8a;background:linear-gradient(#dcdcdc,#fafafa 50%,#d0d0d0)"></div>
<div style="position:absolute;left:2437px;top:110px;width:22px;height:45px;border:1px solid #8a8a8a;background:linear-gradient(#dcdcdc,#fafafa 50%,#d0d0d0)"></div>
<svg style="position:absolute;left:1498px;top:110px" width="964" height="48"><path d="M7 22.5 L14 18 L14 27 Z" fill="#dd0000"/><path d="M956 22.5 L949 18 L949 27 Z" fill="#dd0000"/></svg>
<div style="position:absolute;left:1522px;top:104px;width:915px;height:60px;border-radius:4px;background:linear-gradient(#f4f6f8,#c8ccd2 60%,#98a0aa)"></div>
<div style="position:absolute;left:1547px;top:110px;width:868px;height:47px;border-radius:3px;background:linear-gradient(#c8c8c8,#dcdcdc 15%,#fcfcfc 50%,#dcdcdc 85%,#c8c8c8);box-shadow:inset 2px 2px 0 #b0b0b0, inset -1px -2px 0 #c0c0c0"></div>
<div style="position:absolute;left:1532px;top:120px;width:2px;height:28px;background:#000;"></div>
<div style="position:absolute;left:1536px;top:120px;width:2px;height:28px;background:#000;"></div>
<div style="position:absolute;left:2422px;top:120px;width:2px;height:28px;background:#000;"></div>
<div style="position:absolute;left:2426px;top:120px;width:2px;height:28px;background:#000;"></div>
<svg style="position:absolute;left:0;top:0" width="2513" height="200"><polyline points="1548.0,137.5 1552.3,136.4 1556.7,135.4 1561.0,134.3 1565.4,133.3 1569.7,132.2 1574.0,131.2 1578.4,130.3 1582.7,129.3 1587.1,128.4 1591.4,127.5 1595.7,126.7 1600.1,125.9 1604.4,125.1 1608.8,124.4 1613.1,123.7 1617.4,123.1 1621.8,122.6 1626.1,122.1 1630.5,121.7 1634.8,121.3 1639.1,121.0 1643.5,120.8 1647.8,120.6 1652.2,120.5 1656.5,120.5 1660.8,120.5 1665.2,120.6 1669.5,120.8 1673.9,121.0 1678.2,121.3 1682.5,121.7 1686.9,122.1 1691.2,122.6 1695.6,123.1 1699.9,123.7 1704.2,124.4 1708.6,125.1 1712.9,125.9 1717.3,126.7 1721.6,127.5 1725.9,128.4 1730.3,129.3 1734.6,130.3 1739.0,131.2 1743.3,132.2 1747.6,133.3 1752.0,134.3 1756.3,135.4 1760.7,136.4 1765.0,137.5 1769.3,138.6 1773.7,139.6 1778.0,140.7 1782.4,141.7 1786.7,142.8 1791.0,143.8 1795.4,144.7 1799.7,145.7 1804.1,146.6 1808.4,147.5 1812.7,148.3 1817.1,149.1 1821.4,149.9 1825.8,150.6 1830.1,151.3 1834.4,151.9 1838.8,152.4 1843.1,152.9 1847.5,153.3 1851.8,153.7 1856.1,154.0 1860.5,154.2 1864.8,154.4 1869.2,154.5 1873.5,154.5 1877.8,154.5 1882.2,154.4 1886.5,154.2 1890.9,154.0 1895.2,153.7 1899.5,153.3 1903.9,152.9 1908.2,152.4 1912.6,151.9 1916.9,151.3 1921.2,150.6 1925.6,149.9 1929.9,149.1 1934.3,148.3 1938.6,147.5 1942.9,146.6 1947.3,145.7 1951.6,144.7 1956.0,143.8 1960.3,142.8 1964.6,141.7 1969.0,140.7 1973.3,139.6 1977.7,138.6 1982.0,137.5 1986.3,136.4 1990.7,135.4 1995.0,134.3 1999.4,133.3 2003.7,132.2 2008.0,131.2 2012.4,130.3 2016.7,129.3 2021.1,128.4 2025.4,127.5 2029.7,126.7 2034.1,125.9 2038.4,125.1 2042.8,124.4 2047.1,123.7 2051.4,123.1 2055.8,122.6 2060.1,122.1 2064.5,121.7 2068.8,121.3 2073.1,121.0 2077.5,120.8 2081.8,120.6 2086.2,120.5 2090.5,120.5 2094.8,120.5 2099.2,120.6 2103.5,120.8 2107.9,121.0 2112.2,121.3 2116.5,121.7 2120.9,122.1 2125.2,122.6 2129.6,123.1 2133.9,123.7 2138.2,124.4 2142.6,125.1 2146.9,125.9 2151.3,126.7 2155.6,127.5 2159.9,128.4 2164.3,129.3 2168.6,130.3 2173.0,131.2 2177.3,132.2 2181.6,133.3 2186.0,134.3 2190.3,135.4 2194.7,136.4 2199.0,137.5 2203.3,138.6 2207.7,139.6 2212.0,140.7 2216.4,141.7 2220.7,142.8 2225.0,143.8 2229.4,144.7 2233.7,145.7 2238.1,146.6 2242.4,147.5 2246.7,148.3 2251.1,149.1 2255.4,149.9 2259.8,150.6 2264.1,151.3 2268.4,151.9 2272.8,152.4 2277.1,152.9 2281.5,153.3 2285.8,153.7 2290.1,154.0 2294.5,154.2 2298.8,154.4 2303.2,154.5 2307.5,154.5 2311.8,154.5 2316.2,154.4 2320.5,154.2 2324.9,154.0 2329.2,153.7 2333.5,153.3 2337.9,152.9 2342.2,152.4 2346.6,151.9 2350.9,151.3 2355.2,150.6 2359.6,149.9 2363.9,149.1 2368.3,148.3 2372.6,147.5 2376.9,146.6 2381.3,145.7 2385.6,144.7 2390.0,143.8 2394.3,142.8 2398.6,141.7 2403.0,140.7 2407.3,139.6 2411.7,138.6 2416.0,137.5" fill="none" stroke="#3a9aa8" stroke-width="2"/><polyline points="1547.0,136.0 1551.3,134.9 1555.7,133.9 1560.0,132.8 1564.4,131.8 1568.7,130.7 1573.0,129.7 1577.4,128.8 1581.7,127.8 1586.1,126.9 1590.4,126.0 1594.7,125.2 1599.1,124.4 1603.4,123.6 1607.8,122.9 1612.1,122.2 1616.4,121.6 1620.8,121.1 1625.1,120.6 1629.5,120.2 1633.8,119.8 1638.1,119.5 1642.5,119.3 1646.8,119.1 1651.2,119.0 1655.5,119.0 1659.8,119.0 1664.2,119.1 1668.5,119.3 1672.9,119.5 1677.2,119.8 1681.5,120.2 1685.9,120.6 1690.2,121.1 1694.6,121.6 1698.9,122.2 1703.2,122.9 1707.6,123.6 1711.9,124.4 1716.3,125.2 1720.6,126.0 1724.9,126.9 1729.3,127.8 1733.6,128.8 1738.0,129.7 1742.3,130.7 1746.6,131.8 1751.0,132.8 1755.3,133.9 1759.7,134.9 1764.0,136.0 1768.3,137.1 1772.7,138.1 1777.0,139.2 1781.4,140.2 1785.7,141.3 1790.0,142.3 1794.4,143.2 1798.7,144.2 1803.1,145.1 1807.4,146.0 1811.7,146.8 1816.1,147.6 1820.4,148.4 1824.8,149.1 1829.1,149.8 1833.4,150.4 1837.8,150.9 1842.1,151.4 1846.5,151.8 1850.8,152.2 1855.1,152.5 1859.5,152.7 1863.8,152.9 1868.2,153.0 1872.5,153.0 1876.8,153.0 1881.2,152.9 1885.5,152.7 1889.9,152.5 1894.2,152.2 1898.5,151.8 1902.9,151.4 1907.2,150.9 1911.6,150.4 1915.9,149.8 1920.2,149.1 1924.6,148.4 1928.9,147.6 1933.3,146.8 1937.6,146.0 1941.9,145.1 1946.3,144.2 1950.6,143.2 1955.0,142.3 1959.3,141.3 1963.6,140.2 1968.0,139.2 1972.3,138.1 1976.7,137.1 1981.0,136.0 1985.3,134.9 1989.7,133.9 1994.0,132.8 1998.4,131.8 2002.7,130.7 2007.0,129.7 2011.4,128.8 2015.7,127.8 2020.1,126.9 2024.4,126.0 2028.7,125.2 2033.1,124.4 2037.4,123.6 2041.8,122.9 2046.1,122.2 2050.4,121.6 2054.8,121.1 2059.1,120.6 2063.5,120.2 2067.8,119.8 2072.1,119.5 2076.5,119.3 2080.8,119.1 2085.2,119.0 2089.5,119.0 2093.8,119.0 2098.2,119.1 2102.5,119.3 2106.9,119.5 2111.2,119.8 2115.5,120.2 2119.9,120.6 2124.2,121.1 2128.6,121.6 2132.9,122.2 2137.2,122.9 2141.6,123.6 2145.9,124.4 2150.3,125.2 2154.6,126.0 2158.9,126.9 2163.3,127.8 2167.6,128.8 2172.0,129.7 2176.3,130.7 2180.6,131.8 2185.0,132.8 2189.3,133.9 2193.7,134.9 2198.0,136.0 2202.3,137.1 2206.7,138.1 2211.0,139.2 2215.4,140.2 2219.7,141.3 2224.0,142.3 2228.4,143.2 2232.7,144.2 2237.1,145.1 2241.4,146.0 2245.7,146.8 2250.1,147.6 2254.4,148.4 2258.8,149.1 2263.1,149.8 2267.4,150.4 2271.8,150.9 2276.1,151.4 2280.5,151.8 2284.8,152.2 2289.1,152.5 2293.5,152.7 2297.8,152.9 2302.2,153.0 2306.5,153.0 2310.8,153.0 2315.2,152.9 2319.5,152.7 2323.9,152.5 2328.2,152.2 2332.5,151.8 2336.9,151.4 2341.2,150.9 2345.6,150.4 2349.9,149.8 2354.2,149.1 2358.6,148.4 2362.9,147.6 2367.3,146.8 2371.6,146.0 2375.9,145.1 2380.3,144.2 2384.6,143.2 2389.0,142.3 2393.3,141.3 2397.6,140.2 2402.0,139.2 2406.3,138.1 2410.7,137.1 2415.0,136.0" fill="none" stroke="#00dd00" stroke-width="2.2"/></svg>
<svg style="position:absolute;left:0;top:0" width="2513" height="1359"><line x1="1498" y1="177" x2="2466" y2="177" stroke="#959595" stroke-width="2" stroke-dasharray="2 4"/><line x1="1498" y1="207" x2="2466" y2="207" stroke="#cacaca" stroke-width="2" stroke-dasharray="2 4"/><line x1="1498" y1="237" x2="2466" y2="237" stroke="#cacaca" stroke-width="2" stroke-dasharray="2 4"/><line x1="1498" y1="267" x2="2466" y2="267" stroke="#cacaca" stroke-width="2" stroke-dasharray="2 4"/><line x1="1498" y1="297" x2="2466" y2="297" stroke="#cacaca" stroke-width="2" stroke-dasharray="2 4"/><line x1="1498" y1="327" x2="2466" y2="327" stroke="#959595" stroke-width="2" stroke-dasharray="2 4"/><line x1="1498" y1="358" x2="2466" y2="358" stroke="#cacaca" stroke-width="2" stroke-dasharray="2 4"/><line x1="1498" y1="388" x2="2466" y2="388" stroke="#cacaca" stroke-width="2" stroke-dasharray="2 4"/><line x1="1498" y1="418" x2="2466" y2="418" stroke="#cacaca" stroke-width="2" stroke-dasharray="2 4"/><line x1="1498" y1="448" x2="2466" y2="448" stroke="#cacaca" stroke-width="2" stroke-dasharray="2 4"/><line x1="1498" y1="478" x2="2466" y2="478" stroke="#959595" stroke-width="2" stroke-dasharray="2 4"/><line x1="1498" y1="508" x2="2466" y2="508" stroke="#cacaca" stroke-width="2" stroke-dasharray="2 4"/><line x1="1498" y1="539" x2="2466" y2="539" stroke="#cacaca" stroke-width="2" stroke-dasharray="2 4"/><line x1="1498" y1="569" x2="2466" y2="569" stroke="#cacaca" stroke-width="2" stroke-dasharray="2 4"/><line x1="1498" y1="599" x2="2466" y2="599" stroke="#cacaca" stroke-width="2" stroke-dasharray="2 4"/><line x1="1498" y1="629" x2="2466" y2="629" stroke="#959595" stroke-width="2" stroke-dasharray="2 4"/><line x1="1498" y1="659" x2="2466" y2="659" stroke="#cacaca" stroke-width="2" stroke-dasharray="2 4"/><line x1="1498" y1="689" x2="2466" y2="689" stroke="#cacaca" stroke-width="2" stroke-dasharray="2 4"/><line x1="1498" y1="720" x2="2466" y2="720" stroke="#cacaca" stroke-width="2" stroke-dasharray="2 4"/><line x1="1498" y1="750" x2="2466" y2="750" stroke="#cacaca" stroke-width="2" stroke-dasharray="2 4"/><line x1="1498" y1="780" x2="2466" y2="780" stroke="#959595" stroke-width="2" stroke-dasharray="2 4"/><line x1="1498" y1="810" x2="2466" y2="810" stroke="#cacaca" stroke-width="2" stroke-dasharray="2 4"/><line x1="1498" y1="840" x2="2466" y2="840" stroke="#cacaca" stroke-width="2" stroke-dasharray="2 4"/><line x1="1498" y1="870" x2="2466" y2="870" stroke="#cacaca" stroke-width="2" stroke-dasharray="2 4"/><line x1="1498" y1="901" x2="2466" y2="901" stroke="#cacaca" stroke-width="2" stroke-dasharray="2 4"/><line x1="1498" y1="931" x2="2466" y2="931" stroke="#959595" stroke-width="2" stroke-dasharray="2 4"/><line x1="1498" y1="961" x2="2466" y2="961" stroke="#cacaca" stroke-width="2" stroke-dasharray="2 4"/><line x1="1498" y1="991" x2="2466" y2="991" stroke="#cacaca" stroke-width="2" stroke-dasharray="2 4"/><line x1="1498" y1="1021" x2="2466" y2="1021" stroke="#cacaca" stroke-width="2" stroke-dasharray="2 4"/><line x1="1498" y1="1051" x2="2466" y2="1051" stroke="#cacaca" stroke-width="2" stroke-dasharray="2 4"/><line x1="1498" y1="1082" x2="2466" y2="1082" stroke="#959595" stroke-width="2" stroke-dasharray="2 4"/><line x1="1498" y1="1112" x2="2466" y2="1112" stroke="#cacaca" stroke-width="2" stroke-dasharray="2 4"/><line x1="1498" y1="1142" x2="2466" y2="1142" stroke="#cacaca" stroke-width="2" stroke-dasharray="2 4"/><line x1="1498" y1="1172" x2="2466" y2="1172" stroke="#cacaca" stroke-width="2" stroke-dasharray="2 4"/><line x1="1498" y1="1202" x2="2466" y2="1202" stroke="#cacaca" stroke-width="2" stroke-dasharray="2 4"/><line x1="1498" y1="1233" x2="2466" y2="1233" stroke="#959595" stroke-width="2" stroke-dasharray="2 4"/><line x1="1499" y1="176" x2="1499" y2="1234.02" stroke="#959595" stroke-width="2" stroke-dasharray="2 4"/><line x1="1523" y1="176" x2="1523" y2="1234.02" stroke="#cacaca" stroke-width="2" stroke-dasharray="2 4"/><line x1="1547" y1="176" x2="1547" y2="1234.02" stroke="#cacaca" stroke-width="2" stroke-dasharray="2 4"/><line x1="1571" y1="176" x2="1571" y2="1234.02" stroke="#cacaca" stroke-width="2" stroke-dasharray="2 4"/><line x1="1595" y1="176" x2="1595" y2="1234.02" stroke="#cacaca" stroke-width="2" stroke-dasharray="2 4"/><line x1="1619" y1="176" x2="1619" y2="1234.02" stroke="#cacaca" stroke-width="2" stroke-dasharray="2 4"/><line x1="1643" y1="176" x2="1643" y2="1234.02" stroke="#cacaca" stroke-width="2" stroke-dasharray="2 4"/><line x1="1668" y1="176" x2="1668" y2="1234.02" stroke="#cacaca" stroke-width="2" stroke-dasharray="2 4"/><line x1="1692" y1="176" x2="1692" y2="1234.02" stroke="#cacaca" stroke-width="2" stroke-dasharray="2 4"/><line x1="1716" y1="176" x2="1716" y2="1234.02" stroke="#cacaca" stroke-width="2" stroke-dasharray="2 4"/><line x1="1740" y1="176" x2="1740" y2="1234.02" stroke="#959595" stroke-width="2" stroke-dasharray="2 4"/><line x1="1764" y1="176" x2="1764" y2="1234.02" stroke="#cacaca" stroke-width="2" stroke-dasharray="2 4"/><line x1="1788" y1="176" x2="1788" y2="1234.02" stroke="#cacaca" stroke-width="2" stroke-dasharray="2 4"/><line x1="1812" y1="176" x2="1812" y2="1234.02" stroke="#cacaca" stroke-width="2" stroke-dasharray="2 4"/><line x1="1837" y1="176" x2="1837" y2="1234.02" stroke="#cacaca" stroke-width="2" stroke-dasharray="2 4"/><line x1="1861" y1="176" x2="1861" y2="1234.02" stroke="#cacaca" stroke-width="2" stroke-dasharray="2 4"/><line x1="1885" y1="176" x2="1885" y2="1234.02" stroke="#cacaca" stroke-width="2" stroke-dasharray="2 4"/><line x1="1909" y1="176" x2="1909" y2="1234.02" stroke="#cacaca" stroke-width="2" stroke-dasharray="2 4"/><line x1="1933" y1="176" x2="1933" y2="1234.02" stroke="#cacaca" stroke-width="2" stroke-dasharray="2 4"/><line x1="1957" y1="176" x2="1957" y2="1234.02" stroke="#cacaca" stroke-width="2" stroke-dasharray="2 4"/><line x1="1982" y1="176" x2="1982" y2="1234.02" stroke="#959595" stroke-width="2" stroke-dasharray="2 4"/><line x1="2006" y1="176" x2="2006" y2="1234.02" stroke="#cacaca" stroke-width="2" stroke-dasharray="2 4"/><line x1="2030" y1="176" x2="2030" y2="1234.02" stroke="#cacaca" stroke-width="2" stroke-dasharray="2 4"/><line x1="2054" y1="176" x2="2054" y2="1234.02" stroke="#cacaca" stroke-width="2" stroke-dasharray="2 4"/><line x1="2078" y1="176" x2="2078" y2="1234.02" stroke="#cacaca" stroke-width="2" stroke-dasharray="2 4"/><line x1="2102" y1="176" x2="2102" y2="1234.02" stroke="#cacaca" stroke-width="2" stroke-dasharray="2 4"/><line x1="2126" y1="176" x2="2126" y2="1234.02" stroke="#cacaca" stroke-width="2" stroke-dasharray="2 4"/><line x1="2151" y1="176" x2="2151" y2="1234.02" stroke="#cacaca" stroke-width="2" stroke-dasharray="2 4"/><line x1="2175" y1="176" x2="2175" y2="1234.02" stroke="#cacaca" stroke-width="2" stroke-dasharray="2 4"/><line x1="2199" y1="176" x2="2199" y2="1234.02" stroke="#cacaca" stroke-width="2" stroke-dasharray="2 4"/><line x1="2223" y1="176" x2="2223" y2="1234.02" stroke="#959595" stroke-width="2" stroke-dasharray="2 4"/><line x1="2247" y1="176" x2="2247" y2="1234.02" stroke="#cacaca" stroke-width="2" stroke-dasharray="2 4"/><line x1="2271" y1="176" x2="2271" y2="1234.02" stroke="#cacaca" stroke-width="2" stroke-dasharray="2 4"/><line x1="2295" y1="176" x2="2295" y2="1234.02" stroke="#cacaca" stroke-width="2" stroke-dasharray="2 4"/><line x1="2320" y1="176" x2="2320" y2="1234.02" stroke="#cacaca" stroke-width="2" stroke-dasharray="2 4"/><line x1="2344" y1="176" x2="2344" y2="1234.02" stroke="#cacaca" stroke-width="2" stroke-dasharray="2 4"/><line x1="2368" y1="176" x2="2368" y2="1234.02" stroke="#cacaca" stroke-width="2" stroke-dasharray="2 4"/><line x1="2392" y1="176" x2="2392" y2="1234.02" stroke="#cacaca" stroke-width="2" stroke-dasharray="2 4"/><line x1="2416" y1="176" x2="2416" y2="1234.02" stroke="#cacaca" stroke-width="2" stroke-dasharray="2 4"/><line x1="2440" y1="176" x2="2440" y2="1234.02" stroke="#cacaca" stroke-width="2" stroke-dasharray="2 4"/><line x1="2465" y1="176" x2="2465" y2="1234.02" stroke="#959595" stroke-width="2" stroke-dasharray="2 4"/><rect x="1480" y="176" width="2" height="1058" fill="#000"/><rect x="1468" y="176" width="14" height="2" fill="#000"/><rect x="1472" y="206" width="10" height="2" fill="#000"/><rect x="1472" y="236" width="10" height="2" fill="#000"/><rect x="1472" y="266" width="10" height="2" fill="#000"/><rect x="1472" y="296" width="10" height="2" fill="#000"/><rect x="1468" y="326" width="14" height="2" fill="#000"/><rect x="1472" y="357" width="10" height="2" fill="#000"/><rect x="1472" y="387" width="10" height="2" fill="#000"/><rect x="1472" y="417" width="10" height="2" fill="#000"/><rect x="1472" y="447" width="10" height="2" fill="#000"/><rect x="1468" y="477" width="14" height="2" fill="#000"/><rect x="1472" y="507" width="10" height="2" fill="#000"/><rect x="1472" y="538" width="10" height="2" fill="#000"/><rect x="1472" y="568" width="10" height="2" fill="#000"/><rect x="1472" y="598" width="10" height="2" fill="#000"/><rect x="1468" y="628" width="14" height="2" fill="#000"/><rect x="1472" y="658" width="10" height="2" fill="#000"/><rect x="1472" y="688" width="10" height="2" fill="#000"/><rect x="1472" y="719" width="10" height="2" fill="#000"/><rect x="1472" y="749" width="10" height="2" fill="#000"/><rect x="1468" y="779" width="14" height="2" fill="#000"/><rect x="1472" y="809" width="10" height="2" fill="#000"/><rect x="1472" y="839" width="10" height="2" fill="#000"/><rect x="1472" y="869" width="10" height="2" fill="#000"/><rect x="1472" y="900" width="10" height="2" fill="#000"/><rect x="1468" y="930" width="14" height="2" fill="#000"/><rect x="1472" y="960" width="10" height="2" fill="#000"/><rect x="1472" y="990" width="10" height="2" fill="#000"/><rect x="1472" y="1020" width="10" height="2" fill="#000"/><rect x="1472" y="1050" width="10" height="2" fill="#000"/><rect x="1468" y="1081" width="14" height="2" fill="#000"/><rect x="1472" y="1111" width="10" height="2" fill="#000"/><rect x="1472" y="1141" width="10" height="2" fill="#000"/><rect x="1472" y="1171" width="10" height="2" fill="#000"/><rect x="1472" y="1201" width="10" height="2" fill="#000"/><rect x="1468" y="1232" width="14" height="2" fill="#000"/><rect x="1498" y="1244" width="968" height="2" fill="#000"/><rect x="1498" y="1244" width="2" height="14" fill="#000"/><rect x="1522" y="1244" width="2" height="10" fill="#000"/><rect x="1546" y="1244" width="2" height="10" fill="#000"/><rect x="1570" y="1244" width="2" height="10" fill="#000"/><rect x="1594" y="1244" width="2" height="10" fill="#000"/><rect x="1618" y="1244" width="2" height="10" fill="#000"/><rect x="1642" y="1244" width="2" height="10" fill="#000"/><rect x="1667" y="1244" width="2" height="10" fill="#000"/><rect x="1691" y="1244" width="2" height="10" fill="#000"/><rect x="1715" y="1244" width="2" height="10" fill="#000"/><rect x="1739" y="1244" width="2" height="14" fill="#000"/><rect x="1763" y="1244" width="2" height="10" fill="#000"/><rect x="1787" y="1244" width="2" height="10" fill="#000"/><rect x="1811" y="1244" width="2" height="10" fill="#000"/><rect x="1836" y="1244" width="2" height="10" fill="#000"/><rect x="1860" y="1244" width="2" height="10" fill="#000"/><rect x="1884" y="1244" width="2" height="10" fill="#000"/><rect x="1908" y="1244" width="2" height="10" fill="#000"/><rect x="1932" y="1244" width="2" height="10" fill="#000"/><rect x="1956" y="1244" width="2" height="10" fill="#000"/><rect x="1981" y="1244" width="2" height="14" fill="#000"/><rect x="2005" y="1244" width="2" height="10" fill="#000"/><rect x="2029" y="1244" width="2" height="10" fill="#000"/><rect x="2053" y="1244" width="2" height="10" fill="#000"/><rect x="2077" y="1244" width="2" height="10" fill="#000"/><rect x="2101" y="1244" width="2" height="10" fill="#000"/><rect x="2125" y="1244" width="2" height="10" fill="#000"/><rect x="2150" y="1244" width="2" height="10" fill="#000"/><rect x="2174" y="1244" width="2" height="10" fill="#000"/><rect x="2198" y="1244" width="2" height="10" fill="#000"/><rect x="2222" y="1244" width="2" height="14" fill="#000"/><rect x="2246" y="1244" width="2" height="10" fill="#000"/><rect x="2270" y="1244" width="2" height="10" fill="#000"/><rect x="2294" y="1244" width="2" height="10" fill="#000"/><rect x="2319" y="1244" width="2" height="10" fill="#000"/><rect x="2343" y="1244" width="2" height="10" fill="#000"/><rect x="2367" y="1244" width="2" height="10" fill="#000"/><rect x="2391" y="1244" width="2" height="10" fill="#000"/><rect x="2415" y="1244" width="2" height="10" fill="#000"/><rect x="2439" y="1244" width="2" height="10" fill="#000"/><rect x="2464" y="1244" width="2" height="14" fill="#000"/><polyline points="1499.00,705.01 1502.86,705.01 1502.86,686.06 1512.52,686.06 1512.52,639.00 1522.18,639.00 1522.18,592.98 1531.84,592.98 1531.84,548.73 1541.50,548.73 1541.50,506.94 1551.16,506.94 1551.16,468.28 1560.82,468.28 1560.82,433.35 1570.48,433.35 1570.48,402.70 1580.14,402.70 1580.14,376.82 1589.80,376.82 1589.80,356.12 1599.46,356.12 1599.46,340.92 1609.12,340.92 1609.12,331.46 1618.78,331.46 1618.78,327.89 1628.44,327.89 1628.44,330.27 1638.10,330.27 1638.10,338.56 1647.76,338.56 1647.76,352.63 1657.42,352.63 1657.42,372.25 1667.08,372.25 1667.08,397.13 1676.74,397.13 1676.74,426.86 1686.40,426.86 1686.40,460.97 1696.06,460.97 1696.06,498.94 1705.72,498.94 1705.72,540.15 1715.38,540.15 1715.38,583.97 1725.04,583.97 1725.04,629.69 1734.70,629.69 1734.70,676.60 1744.36,676.60 1744.36,723.96 1754.02,723.96 1754.02,771.02 1763.68,771.02 1763.68,817.04 1773.34,817.04 1773.34,861.29 1783.00,861.29 1783.00,903.08 1792.66,903.08 1792.66,941.74 1802.32,941.74 1802.32,976.67 1811.98,976.67 1811.98,1007.32 1821.64,1007.32 1821.64,1033.20 1831.30,1033.20 1831.30,1053.90 1840.96,1053.90 1840.96,1069.10 1850.62,1069.10 1850.62,1078.56 1860.28,1078.56 1860.28,1082.13 1869.94,1082.13 1869.94,1079.75 1879.60,1079.75 1879.60,1071.46 1889.26,1071.46 1889.26,1057.39 1898.92,1057.39 1898.92,1037.77 1908.58,1037.77 1908.58,1012.89 1918.24,1012.89 1918.24,983.16 1927.90,983.16 1927.90,949.05 1937.56,949.05 1937.56,911.08 1947.22,911.08 1947.22,869.87 1956.88,869.87 1956.88,826.05 1966.54,826.05 1966.54,780.33 1976.20,780.33 1976.20,733.42 1985.86,733.42 1985.86,686.06 1995.52,686.06 1995.52,639.00 2005.18,639.00 2005.18,592.98 2014.84,592.98 2014.84,548.73 2024.50,548.73 2024.50,506.94 2034.16,506.94 2034.16,468.28 2043.82,468.28 2043.82,433.35 2053.48,433.35 2053.48,402.70 2063.14,402.70 2063.14,376.82 2072.80,376.82 2072.80,356.12 2082.46,356.12 2082.46,340.92 2092.12,340.92 2092.12,331.46 2101.78,331.46 2101.78,327.89 2111.44,327.89 2111.44,330.27 2121.10,330.27 2121.10,338.56 2130.76,338.56 2130.76,352.63 2140.42,352.63 2140.42,372.25 2150.08,372.25 2150.08,397.13 2159.74,397.13 2159.74,426.86 2169.40,426.86 2169.40,460.97 2179.06,460.97 2179.06,498.94 2188.72,498.94 2188.72,540.15 2198.38,540.15 2198.38,583.97 2208.04,583.97 2208.04,629.69 2217.70,629.69 2217.70,676.60 2227.36,676.60 2227.36,723.96 2237.02,723.96 2237.02,771.02 2246.68,771.02 2246.68,817.04 2256.34,817.04 2256.34,861.29 2266.00,861.29 2266.00,903.08 2275.66,903.08 2275.66,941.74 2285.32,941.74 2285.32,976.67 2294.98,976.67 2294.98,1007.32 2304.64,1007.32 2304.64,1033.20 2314.30,1033.20 2314.30,1053.90 2323.96,1053.90 2323.96,1069.10 2333.62,1069.10 2333.62,1078.56 2343.28,1078.56 2343.28,1082.13 2352.94,1082.13 2352.94,1079.75 2362.60,1079.75 2362.60,1071.46 2372.26,1071.46 2372.26,1057.39 2381.92,1057.39 2381.92,1037.77 2391.58,1037.77 2391.58,1012.89 2401.24,1012.89 2401.24,983.16 2410.90,983.16 2410.90,949.05 2420.56,949.05 2420.56,911.08 2430.22,911.08 2430.22,869.87 2439.88,869.87 2439.88,826.05 2449.54,826.05 2449.54,780.33 2459.20,780.33 2459.20,733.42 2465.00,733.42" fill="none" stroke="#3aa0a8" stroke-width="2.2"/><polyline transform="translate(-1,-1)" points="1499.00,705.01 1499.81,701.06 1500.61,697.11 1501.41,693.16 1502.22,689.22 1503.03,685.27 1503.83,681.33 1504.63,677.39 1505.44,673.45 1506.24,669.52 1507.05,665.59 1507.86,661.66 1508.66,657.74 1509.46,653.82 1510.27,649.91 1511.08,646.01 1511.88,642.11 1512.68,638.22 1513.49,634.34 1514.30,630.46 1515.10,626.60 1515.90,622.74 1516.71,618.89 1517.52,615.05 1518.32,611.22 1519.12,607.40 1519.93,603.59 1520.73,599.79 1521.54,596.00 1522.35,592.23 1523.15,588.46 1523.95,584.71 1524.76,580.98 1525.57,577.25 1526.37,573.55 1527.17,569.85 1527.98,566.17 1528.79,562.51 1529.59,558.86 1530.39,555.23 1531.20,551.61 1532.01,548.01 1532.81,544.43 1533.62,540.86 1534.42,537.32 1535.22,533.79 1536.03,530.28 1536.84,526.79 1537.64,523.32 1538.44,519.87 1539.25,516.44 1540.06,513.03 1540.86,509.64 1541.66,506.27 1542.47,502.92 1543.28,499.60 1544.08,496.30 1544.88,493.02 1545.69,489.77 1546.49,486.53 1547.30,483.33 1548.11,480.14 1548.91,476.99 1549.71,473.85 1550.52,470.74 1551.33,467.66 1552.13,464.61 1552.93,461.58 1553.74,458.57 1554.55,455.60 1555.35,452.65 1556.15,449.73 1556.96,446.83 1557.77,443.97 1558.57,441.13 1559.38,438.32 1560.18,435.55 1560.98,432.80 1561.79,430.08 1562.60,427.39 1563.40,424.73 1564.20,422.11 1565.01,419.51 1565.82,416.94 1566.62,414.41 1567.42,411.91 1568.23,409.44 1569.04,407.00 1569.84,404.60 1570.64,402.23 1571.45,399.89 1572.26,397.58 1573.06,395.31 1573.87,393.08 1574.67,390.87 1575.47,388.71 1576.28,386.57 1577.09,384.47 1577.89,382.41 1578.69,380.38 1579.50,378.39 1580.31,376.43 1581.11,374.51 1581.91,372.63 1582.72,370.78 1583.53,368.97 1584.33,367.19 1585.13,365.45 1585.94,363.75 1586.74,362.09 1587.55,360.47 1588.36,358.88 1589.16,357.33 1589.96,355.82 1590.77,354.34 1591.58,352.91 1592.38,351.51 1593.18,350.16 1593.99,348.84 1594.80,347.56 1595.60,346.32 1596.40,345.12 1597.21,343.96 1598.02,342.84 1598.82,341.75 1599.62,340.71 1600.43,339.71 1601.23,338.75 1602.04,337.82 1602.85,336.94 1603.65,336.10 1604.45,335.30 1605.26,334.54 1606.07,333.82 1606.87,333.14 1607.67,332.50 1608.48,331.91 1609.29,331.35 1610.09,330.83 1610.89,330.36 1611.70,329.93 1612.51,329.53 1613.31,329.18 1614.12,328.87 1614.92,328.60 1615.72,328.38 1616.53,328.19 1617.34,328.05 1618.14,327.94 1618.94,327.88 1619.75,327.86 1620.56,327.88 1621.36,327.94 1622.16,328.05 1622.97,328.19 1623.78,328.38 1624.58,328.60 1625.38,328.87 1626.19,329.18 1626.99,329.53 1627.80,329.93 1628.61,330.36 1629.41,330.83 1630.21,331.35 1631.02,331.91 1631.83,332.50 1632.63,333.14 1633.43,333.82 1634.24,334.54 1635.05,335.30 1635.85,336.10 1636.65,336.94 1637.46,337.82 1638.26,338.75 1639.07,339.71 1639.88,340.71 1640.68,341.75 1641.48,342.84 1642.29,343.96 1643.10,345.12 1643.90,346.32 1644.70,347.56 1645.51,348.84 1646.32,350.16 1647.12,351.51 1647.92,352.91 1648.73,354.34 1649.54,355.82 1650.34,357.33 1651.14,358.88 1651.95,360.47 1652.76,362.09 1653.56,363.75 1654.37,365.45 1655.17,367.19 1655.97,368.97 1656.78,370.78 1657.59,372.63 1658.39,374.51 1659.19,376.43 1660.00,378.39 1660.81,380.38 1661.61,382.41 1662.41,384.47 1663.22,386.57 1664.03,388.71 1664.83,390.87 1665.63,393.08 1666.44,395.31 1667.24,397.58 1668.05,399.89 1668.86,402.23 1669.66,404.60 1670.46,407.00 1671.27,409.44 1672.08,411.91 1672.88,414.41 1673.68,416.94 1674.49,419.51 1675.30,422.11 1676.10,424.73 1676.90,427.39 1677.71,430.08 1678.51,432.80 1679.32,435.55 1680.12,438.32 1680.93,441.13 1681.74,443.97 1682.54,446.83 1683.35,449.73 1684.15,452.65 1684.95,455.60 1685.76,458.57 1686.57,461.58 1687.37,464.61 1688.17,467.66 1688.98,470.74 1689.79,473.85 1690.59,476.99 1691.39,480.14 1692.20,483.33 1693.01,486.53 1693.81,489.77 1694.62,493.02 1695.42,496.30 1696.22,499.60 1697.03,502.92 1697.84,506.27 1698.64,509.64 1699.44,513.03 1700.25,516.44 1701.06,519.87 1701.86,523.32 1702.66,526.79 1703.47,530.28 1704.28,533.79 1705.08,537.32 1705.88,540.86 1706.69,544.43 1707.49,548.01 1708.30,551.61 1709.11,555.23 1709.91,558.86 1710.71,562.51 1711.52,566.17 1712.33,569.85 1713.13,573.55 1713.93,577.25 1714.74,580.98 1715.55,584.71 1716.35,588.46 1717.15,592.23 1717.96,596.00 1718.77,599.79 1719.57,603.59 1720.38,607.40 1721.18,611.22 1721.99,615.05 1722.79,618.89 1723.60,622.74 1724.40,626.60 1725.20,630.46 1726.01,634.34 1726.82,638.22 1727.62,642.11 1728.42,646.01 1729.23,649.91 1730.04,653.82 1730.84,657.74 1731.64,661.66 1732.45,665.59 1733.26,669.52 1734.06,673.45 1734.87,677.39 1735.67,681.33 1736.47,685.27 1737.28,689.22 1738.09,693.16 1738.89,697.11 1739.69,701.06 1740.50,705.01 1741.31,708.96 1742.11,712.91 1742.91,716.86 1743.72,720.80 1744.53,724.75 1745.33,728.69 1746.13,732.63 1746.94,736.57 1747.74,740.50 1748.55,744.43 1749.36,748.36 1750.16,752.28 1750.96,756.20 1751.77,760.11 1752.58,764.01 1753.38,767.91 1754.18,771.80 1754.99,775.68 1755.80,779.56 1756.60,783.42 1757.40,787.28 1758.21,791.13 1759.01,794.97 1759.82,798.80 1760.62,802.62 1761.43,806.43 1762.24,810.23 1763.04,814.02 1763.85,817.79 1764.65,821.56 1765.45,825.31 1766.26,829.04 1767.07,832.77 1767.87,836.47 1768.67,840.17 1769.48,843.85 1770.28,847.51 1771.09,851.16 1771.89,854.79 1772.70,858.41 1773.51,862.01 1774.31,865.59 1775.12,869.16 1775.92,872.70 1776.72,876.23 1777.53,879.74 1778.34,883.23 1779.14,886.70 1779.94,890.15 1780.75,893.59 1781.56,896.99 1782.36,900.38 1783.16,903.75 1783.97,907.10 1784.78,910.42 1785.58,913.72 1786.38,917.00 1787.19,920.25 1787.99,923.49 1788.80,926.69 1789.61,929.88 1790.41,933.03 1791.21,936.17 1792.02,939.28 1792.83,942.36 1793.63,945.41 1794.43,948.44 1795.24,951.45 1796.05,954.42 1796.85,957.37 1797.65,960.29 1798.46,963.19 1799.27,966.05 1800.07,968.89 1800.88,971.70 1801.68,974.47 1802.48,977.22 1803.29,979.94 1804.10,982.63 1804.90,985.29 1805.70,987.91 1806.51,990.51 1807.32,993.08 1808.12,995.61 1808.92,998.11 1809.73,1000.58 1810.54,1003.02 1811.34,1005.42 1812.14,1007.79 1812.95,1010.13 1813.76,1012.44 1814.56,1014.71 1815.37,1016.94 1816.17,1019.15 1816.97,1021.31 1817.78,1023.45 1818.59,1025.55 1819.39,1027.61 1820.19,1029.64 1821.00,1031.63 1821.81,1033.59 1822.61,1035.51 1823.41,1037.39 1824.22,1039.24 1825.03,1041.05 1825.83,1042.83 1826.63,1044.57 1827.44,1046.27 1828.24,1047.93 1829.05,1049.55 1829.86,1051.14 1830.66,1052.69 1831.47,1054.20 1832.27,1055.68 1833.08,1057.11 1833.88,1058.51 1834.68,1059.86 1835.49,1061.18 1836.30,1062.46 1837.10,1063.70 1837.90,1064.90 1838.71,1066.06 1839.51,1067.18 1840.32,1068.27 1841.12,1069.31 1841.93,1070.31 1842.74,1071.27 1843.54,1072.20 1844.35,1073.08 1845.15,1073.92 1845.95,1074.72 1846.76,1075.48 1847.57,1076.20 1848.37,1076.88 1849.17,1077.52 1849.98,1078.11 1850.79,1078.67 1851.59,1079.19 1852.39,1079.66 1853.20,1080.09 1854.01,1080.49 1854.81,1080.84 1855.62,1081.15 1856.42,1081.42 1857.22,1081.64 1858.03,1081.83 1858.84,1081.97 1859.64,1082.08 1860.44,1082.14 1861.25,1082.16 1862.06,1082.14 1862.86,1082.08 1863.66,1081.97 1864.47,1081.83 1865.28,1081.64 1866.08,1081.42 1866.88,1081.15 1867.69,1080.84 1868.49,1080.49 1869.30,1080.09 1870.11,1079.66 1870.91,1079.19 1871.71,1078.67 1872.52,1078.11 1873.33,1077.52 1874.13,1076.88 1874.93,1076.20 1875.74,1075.48 1876.55,1074.72 1877.35,1073.92 1878.15,1073.08 1878.96,1072.20 1879.76,1071.27 1880.57,1070.31 1881.38,1069.31 1882.18,1068.27 1882.99,1067.18 1883.79,1066.06 1884.60,1064.90 1885.40,1063.70 1886.20,1062.46 1887.01,1061.18 1887.82,1059.86 1888.62,1058.51 1889.42,1057.11 1890.23,1055.68 1891.03,1054.20 1891.84,1052.69 1892.64,1051.14 1893.45,1049.55 1894.26,1047.93 1895.06,1046.27 1895.87,1044.57 1896.67,1042.83 1897.47,1041.05 1898.28,1039.24 1899.09,1037.39 1899.89,1035.51 1900.69,1033.59 1901.50,1031.63 1902.31,1029.64 1903.11,1027.61 1903.91,1025.55 1904.72,1023.45 1905.53,1021.31 1906.33,1019.15 1907.13,1016.94 1907.94,1014.71 1908.74,1012.44 1909.55,1010.13 1910.36,1007.79 1911.16,1005.42 1911.96,1003.02 1912.77,1000.58 1913.58,998.11 1914.38,995.61 1915.18,993.08 1915.99,990.51 1916.80,987.91 1917.60,985.29 1918.40,982.63 1919.21,979.94 1920.02,977.22 1920.82,974.47 1921.62,971.70 1922.43,968.89 1923.23,966.05 1924.04,963.19 1924.85,960.29 1925.65,957.37 1926.45,954.42 1927.26,951.45 1928.07,948.44 1928.87,945.41 1929.67,942.36 1930.48,939.28 1931.29,936.17 1932.09,933.03 1932.89,929.88 1933.70,926.69 1934.51,923.49 1935.31,920.25 1936.12,917.00 1936.92,913.72 1937.72,910.42 1938.53,907.10 1939.34,903.75 1940.14,900.38 1940.94,896.99 1941.75,893.59 1942.56,890.15 1943.36,886.70 1944.16,883.23 1944.97,879.74 1945.78,876.23 1946.58,872.70 1947.38,869.16 1948.19,865.59 1948.99,862.01 1949.80,858.41 1950.61,854.79 1951.41,851.16 1952.22,847.51 1953.02,843.85 1953.83,840.17 1954.63,836.47 1955.43,832.77 1956.24,829.04 1957.05,825.31 1957.85,821.56 1958.65,817.79 1959.46,814.02 1960.26,810.23 1961.07,806.43 1961.88,802.62 1962.68,798.80 1963.49,794.97 1964.29,791.13 1965.10,787.28 1965.90,783.42 1966.70,779.56 1967.51,775.68 1968.32,771.80 1969.12,767.91 1969.92,764.01 1970.73,760.11 1971.54,756.20 1972.34,752.28 1973.14,748.36 1973.95,744.43 1974.76,740.50 1975.56,736.57 1976.37,732.63 1977.17,728.69 1977.97,724.75 1978.78,720.80 1979.59,716.86 1980.39,712.91 1981.19,708.96 1982.00,705.01 1982.81,701.06 1983.61,697.11 1984.41,693.16 1985.22,689.22 1986.03,685.27 1986.83,681.33 1987.63,677.39 1988.44,673.45 1989.24,669.52 1990.05,665.59 1990.86,661.66 1991.66,657.74 1992.47,653.82 1993.27,649.91 1994.07,646.01 1994.88,642.11 1995.68,638.22 1996.49,634.34 1997.30,630.46 1998.10,626.60 1998.90,622.74 1999.71,618.89 2000.51,615.05 2001.32,611.22 2002.12,607.40 2002.93,603.59 2003.73,599.79 2004.54,596.00 2005.35,592.23 2006.15,588.46 2006.95,584.71 2007.76,580.98 2008.57,577.25 2009.37,573.55 2010.17,569.85 2010.98,566.17 2011.79,562.51 2012.59,558.86 2013.39,555.23 2014.20,551.61 2015.01,548.01 2015.81,544.43 2016.62,540.86 2017.42,537.32 2018.22,533.79 2019.03,530.28 2019.84,526.79 2020.64,523.32 2021.45,519.87 2022.25,516.44 2023.05,513.03 2023.86,509.64 2024.66,506.27 2025.47,502.92 2026.28,499.60 2027.08,496.30 2027.88,493.02 2028.69,489.77 2029.49,486.53 2030.30,483.33 2031.11,480.14 2031.91,476.99 2032.72,473.85 2033.52,470.74 2034.33,467.66 2035.13,464.61 2035.93,461.58 2036.74,458.57 2037.55,455.60 2038.35,452.65 2039.16,449.73 2039.96,446.83 2040.76,443.97 2041.57,441.13 2042.38,438.32 2043.18,435.55 2043.99,432.80 2044.79,430.08 2045.59,427.39 2046.40,424.73 2047.20,422.11 2048.01,419.51 2048.82,416.94 2049.62,414.41 2050.43,411.91 2051.23,409.44 2052.03,407.00 2052.84,404.60 2053.64,402.23 2054.45,399.89 2055.26,397.58 2056.06,395.31 2056.86,393.08 2057.67,390.87 2058.47,388.71 2059.28,386.57 2060.09,384.47 2060.89,382.41 2061.70,380.38 2062.50,378.39 2063.30,376.43 2064.11,374.51 2064.91,372.63 2065.72,370.78 2066.53,368.97 2067.33,367.19 2068.14,365.45 2068.94,363.75 2069.74,362.09 2070.55,360.47 2071.36,358.88 2072.16,357.33 2072.97,355.82 2073.77,354.34 2074.57,352.91 2075.38,351.51 2076.18,350.16 2076.99,348.84 2077.80,347.56 2078.60,346.32 2079.40,345.12 2080.21,343.96 2081.01,342.84 2081.82,341.75 2082.62,340.71 2083.43,339.71 2084.24,338.75 2085.04,337.82 2085.85,336.94 2086.65,336.10 2087.45,335.30 2088.26,334.54 2089.07,333.82 2089.87,333.14 2090.68,332.50 2091.48,331.91 2092.28,331.35 2093.09,330.83 2093.89,330.36 2094.70,329.93 2095.51,329.53 2096.31,329.18 2097.11,328.87 2097.92,328.60 2098.72,328.38 2099.53,328.19 2100.34,328.05 2101.14,327.94 2101.94,327.88 2102.75,327.86 2103.56,327.88 2104.36,327.94 2105.16,328.05 2105.97,328.19 2106.78,328.38 2107.58,328.60 2108.39,328.87 2109.19,329.18 2109.99,329.53 2110.80,329.93 2111.61,330.36 2112.41,330.83 2113.22,331.35 2114.02,331.91 2114.82,332.50 2115.63,333.14 2116.43,333.82 2117.24,334.54 2118.05,335.30 2118.85,336.10 2119.65,336.94 2120.46,337.82 2121.26,338.75 2122.07,339.71 2122.88,340.71 2123.68,341.75 2124.49,342.84 2125.29,343.96 2126.10,345.12 2126.90,346.32 2127.70,347.56 2128.51,348.84 2129.32,350.16 2130.12,351.51 2130.93,352.91 2131.73,354.34 2132.53,355.82 2133.34,357.33 2134.14,358.88 2134.95,360.47 2135.76,362.09 2136.56,363.75 2137.36,365.45 2138.17,367.19 2138.97,368.97 2139.78,370.78 2140.59,372.63 2141.39,374.51 2142.20,376.43 2143.00,378.39 2143.80,380.38 2144.61,382.41 2145.41,384.47 2146.22,386.57 2147.03,388.71 2147.83,390.87 2148.64,393.08 2149.44,395.31 2150.24,397.58 2151.05,399.89 2151.86,402.23 2152.66,404.60 2153.47,407.00 2154.27,409.44 2155.07,411.91 2155.88,414.41 2156.68,416.94 2157.49,419.51 2158.30,422.11 2159.10,424.73 2159.91,427.39 2160.71,430.08 2161.51,432.80 2162.32,435.55 2163.12,438.32 2163.93,441.13 2164.74,443.97 2165.54,446.83 2166.34,449.73 2167.15,452.65 2167.95,455.60 2168.76,458.57 2169.57,461.58 2170.37,464.61 2171.18,467.66 2171.98,470.74 2172.78,473.85 2173.59,476.99 2174.39,480.14 2175.20,483.33 2176.01,486.53 2176.81,489.77 2177.61,493.02 2178.42,496.30 2179.22,499.60 2180.03,502.92 2180.84,506.27 2181.64,509.64 2182.45,513.03 2183.25,516.44 2184.05,519.87 2184.86,523.32 2185.66,526.79 2186.47,530.28 2187.28,533.79 2188.08,537.32 2188.89,540.86 2189.69,544.43 2190.49,548.01 2191.30,551.61 2192.11,555.23 2192.91,558.86 2193.72,562.51 2194.52,566.17 2195.32,569.85 2196.13,573.55 2196.93,577.25 2197.74,580.98 2198.55,584.71 2199.35,588.46 2200.15,592.23 2200.96,596.00 2201.76,599.79 2202.57,603.59 2203.38,607.40 2204.18,611.22 2204.99,615.05 2205.79,618.89 2206.60,622.74 2207.40,626.60 2208.20,630.46 2209.01,634.34 2209.82,638.22 2210.62,642.11 2211.43,646.01 2212.23,649.91 2213.03,653.82 2213.84,657.74 2214.64,661.66 2215.45,665.59 2216.26,669.52 2217.06,673.45 2217.86,677.39 2218.67,681.33 2219.47,685.27 2220.28,689.22 2221.09,693.16 2221.89,697.11 2222.69,701.06 2223.50,705.01 2224.31,708.96 2225.11,712.91 2225.91,716.86 2226.72,720.80 2227.53,724.75 2228.33,728.69 2229.14,732.63 2229.94,736.57 2230.74,740.50 2231.55,744.43 2232.36,748.36 2233.16,752.28 2233.97,756.20 2234.77,760.11 2235.57,764.01 2236.38,767.91 2237.18,771.80 2237.99,775.68 2238.80,779.56 2239.60,783.42 2240.40,787.28 2241.21,791.13 2242.01,794.97 2242.82,798.80 2243.62,802.62 2244.43,806.43 2245.24,810.23 2246.04,814.02 2246.85,817.79 2247.65,821.56 2248.45,825.31 2249.26,829.04 2250.07,832.77 2250.87,836.47 2251.68,840.17 2252.48,843.85 2253.28,847.51 2254.09,851.16 2254.89,854.79 2255.70,858.41 2256.51,862.01 2257.31,865.59 2258.11,869.16 2258.92,872.70 2259.72,876.23 2260.53,879.74 2261.34,883.23 2262.14,886.70 2262.95,890.15 2263.75,893.58 2264.55,896.99 2265.36,900.38 2266.16,903.75 2266.97,907.10 2267.78,910.42 2268.58,913.72 2269.39,917.00 2270.19,920.25 2270.99,923.49 2271.80,926.69 2272.61,929.88 2273.41,933.03 2274.22,936.17 2275.02,939.28 2275.82,942.36 2276.63,945.41 2277.43,948.44 2278.24,951.45 2279.05,954.42 2279.85,957.37 2280.66,960.29 2281.46,963.19 2282.26,966.05 2283.07,968.89 2283.88,971.70 2284.68,974.47 2285.49,977.22 2286.29,979.94 2287.09,982.63 2287.90,985.29 2288.70,987.91 2289.51,990.51 2290.32,993.08 2291.12,995.61 2291.93,998.11 2292.73,1000.58 2293.53,1003.02 2294.34,1005.42 2295.14,1007.79 2295.95,1010.13 2296.76,1012.44 2297.56,1014.71 2298.36,1016.94 2299.17,1019.15 2299.97,1021.31 2300.78,1023.45 2301.59,1025.55 2302.39,1027.61 2303.20,1029.64 2304.00,1031.63 2304.80,1033.59 2305.61,1035.51 2306.41,1037.39 2307.22,1039.24 2308.03,1041.05 2308.83,1042.83 2309.64,1044.57 2310.44,1046.27 2311.24,1047.93 2312.05,1049.55 2312.86,1051.14 2313.66,1052.69 2314.47,1054.20 2315.27,1055.68 2316.07,1057.11 2316.88,1058.51 2317.68,1059.86 2318.49,1061.18 2319.30,1062.46 2320.10,1063.70 2320.90,1064.90 2321.71,1066.06 2322.51,1067.18 2323.32,1068.27 2324.12,1069.31 2324.93,1070.31 2325.74,1071.27 2326.54,1072.20 2327.35,1073.08 2328.15,1073.92 2328.95,1074.72 2329.76,1075.48 2330.57,1076.20 2331.37,1076.88 2332.18,1077.52 2332.98,1078.11 2333.78,1078.67 2334.59,1079.19 2335.39,1079.66 2336.20,1080.09 2337.01,1080.49 2337.81,1080.84 2338.61,1081.15 2339.42,1081.42 2340.22,1081.64 2341.03,1081.83 2341.84,1081.97 2342.64,1082.08 2343.44,1082.14 2344.25,1082.16 2345.06,1082.14 2345.86,1082.08 2346.66,1081.97 2347.47,1081.83 2348.28,1081.64 2349.08,1081.42 2349.89,1081.15 2350.69,1080.84 2351.49,1080.49 2352.30,1080.09 2353.11,1079.66 2353.91,1079.19 2354.72,1078.67 2355.52,1078.11 2356.32,1077.52 2357.13,1076.88 2357.93,1076.20 2358.74,1075.48 2359.55,1074.72 2360.35,1073.92 2361.15,1073.08 2361.96,1072.20 2362.76,1071.27 2363.57,1070.31 2364.38,1069.31 2365.18,1068.27 2365.99,1067.18 2366.79,1066.06 2367.60,1064.90 2368.40,1063.70 2369.20,1062.46 2370.01,1061.18 2370.82,1059.86 2371.62,1058.51 2372.43,1057.11 2373.23,1055.68 2374.03,1054.20 2374.84,1052.69 2375.64,1051.14 2376.45,1049.55 2377.26,1047.93 2378.06,1046.27 2378.86,1044.57 2379.67,1042.83 2380.47,1041.05 2381.28,1039.24 2382.09,1037.39 2382.89,1035.51 2383.70,1033.59 2384.50,1031.63 2385.30,1029.64 2386.11,1027.61 2386.91,1025.55 2387.72,1023.45 2388.53,1021.31 2389.33,1019.15 2390.14,1016.94 2390.94,1014.71 2391.74,1012.44 2392.55,1010.13 2393.36,1007.79 2394.16,1005.42 2394.97,1003.02 2395.77,1000.58 2396.57,998.11 2397.38,995.61 2398.18,993.08 2398.99,990.51 2399.80,987.91 2400.60,985.29 2401.41,982.63 2402.21,979.94 2403.01,977.22 2403.82,974.47 2404.62,971.70 2405.43,968.89 2406.24,966.05 2407.04,963.19 2407.84,960.29 2408.65,957.37 2409.45,954.42 2410.26,951.45 2411.07,948.44 2411.87,945.41 2412.68,942.36 2413.48,939.28 2414.28,936.17 2415.09,933.03 2415.89,929.88 2416.70,926.69 2417.51,923.49 2418.31,920.25 2419.11,917.00 2419.92,913.72 2420.72,910.42 2421.53,907.10 2422.34,903.75 2423.14,900.38 2423.95,896.99 2424.75,893.59 2425.55,890.15 2426.36,886.70 2427.16,883.23 2427.97,879.74 2428.78,876.23 2429.58,872.70 2430.39,869.16 2431.19,865.59 2431.99,862.01 2432.80,858.41 2433.61,854.79 2434.41,851.16 2435.22,847.51 2436.02,843.85 2436.82,840.17 2437.63,836.47 2438.43,832.77 2439.24,829.04 2440.05,825.31 2440.85,821.56 2441.65,817.79 2442.46,814.02 2443.26,810.23 2444.07,806.43 2444.88,802.62 2445.68,798.80 2446.49,794.97 2447.29,791.13 2448.10,787.28 2448.90,783.42 2449.70,779.56 2450.51,775.68 2451.32,771.80 2452.12,767.91 2452.93,764.01 2453.73,760.11 2454.53,756.20 2455.34,752.28 2456.14,748.36 2456.95,744.43 2457.76,740.50 2458.56,736.57 2459.36,732.63 2460.17,728.69 2460.97,724.75 2461.78,720.80 2462.59,716.86 2463.39,712.91 2464.19,708.96 2465.00,705.01" fill="none" stroke="#00dd00" stroke-width="4" stroke-linejoin="round"/><polyline transform="translate(1,1)" points="1499.00,705.01 1499.81,701.06 1500.61,697.11 1501.41,693.16 1502.22,689.22 1503.03,685.27 1503.83,681.33 1504.63,677.39 1505.44,673.45 1506.24,669.52 1507.05,665.59 1507.86,661.66 1508.66,657.74 1509.46,653.82 1510.27,649.91 1511.08,646.01 1511.88,642.11 1512.68,638.22 1513.49,634.34 1514.30,630.46 1515.10,626.60 1515.90,622.74 1516.71,618.89 1517.52,615.05 1518.32,611.22 1519.12,607.40 1519.93,603.59 1520.73,599.79 1521.54,596.00 1522.35,592.23 1523.15,588.46 1523.95,584.71 1524.76,580.98 1525.57,577.25 1526.37,573.55 1527.17,569.85 1527.98,566.17 1528.79,562.51 1529.59,558.86 1530.39,555.23 1531.20,551.61 1532.01,548.01 1532.81,544.43 1533.62,540.86 1534.42,537.32 1535.22,533.79 1536.03,530.28 1536.84,526.79 1537.64,523.32 1538.44,519.87 1539.25,516.44 1540.06,513.03 1540.86,509.64 1541.66,506.27 1542.47,502.92 1543.28,499.60 1544.08,496.30 1544.88,493.02 1545.69,489.77 1546.49,486.53 1547.30,483.33 1548.11,480.14 1548.91,476.99 1549.71,473.85 1550.52,470.74 1551.33,467.66 1552.13,464.61 1552.93,461.58 1553.74,458.57 1554.55,455.60 1555.35,452.65 1556.15,449.73 1556.96,446.83 1557.77,443.97 1558.57,441.13 1559.38,438.32 1560.18,435.55 1560.98,432.80 1561.79,430.08 1562.60,427.39 1563.40,424.73 1564.20,422.11 1565.01,419.51 1565.82,416.94 1566.62,414.41 1567.42,411.91 1568.23,409.44 1569.04,407.00 1569.84,404.60 1570.64,402.23 1571.45,399.89 1572.26,397.58 1573.06,395.31 1573.87,393.08 1574.67,390.87 1575.47,388.71 1576.28,386.57 1577.09,384.47 1577.89,382.41 1578.69,380.38 1579.50,378.39 1580.31,376.43 1581.11,374.51 1581.91,372.63 1582.72,370.78 1583.53,368.97 1584.33,367.19 1585.13,365.45 1585.94,363.75 1586.74,362.09 1587.55,360.47 1588.36,358.88 1589.16,357.33 1589.96,355.82 1590.77,354.34 1591.58,352.91 1592.38,351.51 1593.18,350.16 1593.99,348.84 1594.80,347.56 1595.60,346.32 1596.40,345.12 1597.21,343.96 1598.02,342.84 1598.82,341.75 1599.62,340.71 1600.43,339.71 1601.23,338.75 1602.04,337.82 1602.85,336.94 1603.65,336.10 1604.45,335.30 1605.26,334.54 1606.07,333.82 1606.87,333.14 1607.67,332.50 1608.48,331.91 1609.29,331.35 1610.09,330.83 1610.89,330.36 1611.70,329.93 1612.51,329.53 1613.31,329.18 1614.12,328.87 1614.92,328.60 1615.72,328.38 1616.53,328.19 1617.34,328.05 1618.14,327.94 1618.94,327.88 1619.75,327.86 1620.56,327.88 1621.36,327.94 1622.16,328.05 1622.97,328.19 1623.78,328.38 1624.58,328.60 1625.38,328.87 1626.19,329.18 1626.99,329.53 1627.80,329.93 1628.61,330.36 1629.41,330.83 1630.21,331.35 1631.02,331.91 1631.83,332.50 1632.63,333.14 1633.43,333.82 1634.24,334.54 1635.05,335.30 1635.85,336.10 1636.65,336.94 1637.46,337.82 1638.26,338.75 1639.07,339.71 1639.88,340.71 1640.68,341.75 1641.48,342.84 1642.29,343.96 1643.10,345.12 1643.90,346.32 1644.70,347.56 1645.51,348.84 1646.32,350.16 1647.12,351.51 1647.92,352.91 1648.73,354.34 1649.54,355.82 1650.34,357.33 1651.14,358.88 1651.95,360.47 1652.76,362.09 1653.56,363.75 1654.37,365.45 1655.17,367.19 1655.97,368.97 1656.78,370.78 1657.59,372.63 1658.39,374.51 1659.19,376.43 1660.00,378.39 1660.81,380.38 1661.61,382.41 1662.41,384.47 1663.22,386.57 1664.03,388.71 1664.83,390.87 1665.63,393.08 1666.44,395.31 1667.24,397.58 1668.05,399.89 1668.86,402.23 1669.66,404.60 1670.46,407.00 1671.27,409.44 1672.08,411.91 1672.88,414.41 1673.68,416.94 1674.49,419.51 1675.30,422.11 1676.10,424.73 1676.90,427.39 1677.71,430.08 1678.51,432.80 1679.32,435.55 1680.12,438.32 1680.93,441.13 1681.74,443.97 1682.54,446.83 1683.35,449.73 1684.15,452.65 1684.95,455.60 1685.76,458.57 1686.57,461.58 1687.37,464.61 1688.17,467.66 1688.98,470.74 1689.79,473.85 1690.59,476.99 1691.39,480.14 1692.20,483.33 1693.01,486.53 1693.81,489.77 1694.62,493.02 1695.42,496.30 1696.22,499.60 1697.03,502.92 1697.84,506.27 1698.64,509.64 1699.44,513.03 1700.25,516.44 1701.06,519.87 1701.86,523.32 1702.66,526.79 1703.47,530.28 1704.28,533.79 1705.08,537.32 1705.88,540.86 1706.69,544.43 1707.49,548.01 1708.30,551.61 1709.11,555.23 1709.91,558.86 1710.71,562.51 1711.52,566.17 1712.33,569.85 1713.13,573.55 1713.93,577.25 1714.74,580.98 1715.55,584.71 1716.35,588.46 1717.15,592.23 1717.96,596.00 1718.77,599.79 1719.57,603.59 1720.38,607.40 1721.18,611.22 1721.99,615.05 1722.79,618.89 1723.60,622.74 1724.40,626.60 1725.20,630.46 1726.01,634.34 1726.82,638.22 1727.62,642.11 1728.42,646.01 1729.23,649.91 1730.04,653.82 1730.84,657.74 1731.64,661.66 1732.45,665.59 1733.26,669.52 1734.06,673.45 1734.87,677.39 1735.67,681.33 1736.47,685.27 1737.28,689.22 1738.09,693.16 1738.89,697.11 1739.69,701.06 1740.50,705.01 1741.31,708.96 1742.11,712.91 1742.91,716.86 1743.72,720.80 1744.53,724.75 1745.33,728.69 1746.13,732.63 1746.94,736.57 1747.74,740.50 1748.55,744.43 1749.36,748.36 1750.16,752.28 1750.96,756.20 1751.77,760.11 1752.58,764.01 1753.38,767.91 1754.18,771.80 1754.99,775.68 1755.80,779.56 1756.60,783.42 1757.40,787.28 1758.21,791.13 1759.01,794.97 1759.82,798.80 1760.62,802.62 1761.43,806.43 1762.24,810.23 1763.04,814.02 1763.85,817.79 1764.65,821.56 1765.45,825.31 1766.26,829.04 1767.07,832.77 1767.87,836.47 1768.67,840.17 1769.48,843.85 1770.28,847.51 1771.09,851.16 1771.89,854.79 1772.70,858.41 1773.51,862.01 1774.31,865.59 1775.12,869.16 1775.92,872.70 1776.72,876.23 1777.53,879.74 1778.34,883.23 1779.14,886.70 1779.94,890.15 1780.75,893.59 1781.56,896.99 1782.36,900.38 1783.16,903.75 1783.97,907.10 1784.78,910.42 1785.58,913.72 1786.38,917.00 1787.19,920.25 1787.99,923.49 1788.80,926.69 1789.61,929.88 1790.41,933.03 1791.21,936.17 1792.02,939.28 1792.83,942.36 1793.63,945.41 1794.43,948.44 1795.24,951.45 1796.05,954.42 1796.85,957.37 1797.65,960.29 1798.46,963.19 1799.27,966.05 1800.07,968.89 1800.88,971.70 1801.68,974.47 1802.48,977.22 1803.29,979.94 1804.10,982.63 1804.90,985.29 1805.70,987.91 1806.51,990.51 1807.32,993.08 1808.12,995.61 1808.92,998.11 1809.73,1000.58 1810.54,1003.02 1811.34,1005.42 1812.14,1007.79 1812.95,1010.13 1813.76,1012.44 1814.56,1014.71 1815.37,1016.94 1816.17,1019.15 1816.97,1021.31 1817.78,1023.45 1818.59,1025.55 1819.39,1027.61 1820.19,1029.64 1821.00,1031.63 1821.81,1033.59 1822.61,1035.51 1823.41,1037.39 1824.22,1039.24 1825.03,1041.05 1825.83,1042.83 1826.63,1044.57 1827.44,1046.27 1828.24,1047.93 1829.05,1049.55 1829.86,1051.14 1830.66,1052.69 1831.47,1054.20 1832.27,1055.68 1833.08,1057.11 1833.88,1058.51 1834.68,1059.86 1835.49,1061.18 1836.30,1062.46 1837.10,1063.70 1837.90,1064.90 1838.71,1066.06 1839.51,1067.18 1840.32,1068.27 1841.12,1069.31 1841.93,1070.31 1842.74,1071.27 1843.54,1072.20 1844.35,1073.08 1845.15,1073.92 1845.95,1074.72 1846.76,1075.48 1847.57,1076.20 1848.37,1076.88 1849.17,1077.52 1849.98,1078.11 1850.79,1078.67 1851.59,1079.19 1852.39,1079.66 1853.20,1080.09 1854.01,1080.49 1854.81,1080.84 1855.62,1081.15 1856.42,1081.42 1857.22,1081.64 1858.03,1081.83 1858.84,1081.97 1859.64,1082.08 1860.44,1082.14 1861.25,1082.16 1862.06,1082.14 1862.86,1082.08 1863.66,1081.97 1864.47,1081.83 1865.28,1081.64 1866.08,1081.42 1866.88,1081.15 1867.69,1080.84 1868.49,1080.49 1869.30,1080.09 1870.11,1079.66 1870.91,1079.19 1871.71,1078.67 1872.52,1078.11 1873.33,1077.52 1874.13,1076.88 1874.93,1076.20 1875.74,1075.48 1876.55,1074.72 1877.35,1073.92 1878.15,1073.08 1878.96,1072.20 1879.76,1071.27 1880.57,1070.31 1881.38,1069.31 1882.18,1068.27 1882.99,1067.18 1883.79,1066.06 1884.60,1064.90 1885.40,1063.70 1886.20,1062.46 1887.01,1061.18 1887.82,1059.86 1888.62,1058.51 1889.42,1057.11 1890.23,1055.68 1891.03,1054.20 1891.84,1052.69 1892.64,1051.14 1893.45,1049.55 1894.26,1047.93 1895.06,1046.27 1895.87,1044.57 1896.67,1042.83 1897.47,1041.05 1898.28,1039.24 1899.09,1037.39 1899.89,1035.51 1900.69,1033.59 1901.50,1031.63 1902.31,1029.64 1903.11,1027.61 1903.91,1025.55 1904.72,1023.45 1905.53,1021.31 1906.33,1019.15 1907.13,1016.94 1907.94,1014.71 1908.74,1012.44 1909.55,1010.13 1910.36,1007.79 1911.16,1005.42 1911.96,1003.02 1912.77,1000.58 1913.58,998.11 1914.38,995.61 1915.18,993.08 1915.99,990.51 1916.80,987.91 1917.60,985.29 1918.40,982.63 1919.21,979.94 1920.02,977.22 1920.82,974.47 1921.62,971.70 1922.43,968.89 1923.23,966.05 1924.04,963.19 1924.85,960.29 1925.65,957.37 1926.45,954.42 1927.26,951.45 1928.07,948.44 1928.87,945.41 1929.67,942.36 1930.48,939.28 1931.29,936.17 1932.09,933.03 1932.89,929.88 1933.70,926.69 1934.51,923.49 1935.31,920.25 1936.12,917.00 1936.92,913.72 1937.72,910.42 1938.53,907.10 1939.34,903.75 1940.14,900.38 1940.94,896.99 1941.75,893.59 1942.56,890.15 1943.36,886.70 1944.16,883.23 1944.97,879.74 1945.78,876.23 1946.58,872.70 1947.38,869.16 1948.19,865.59 1948.99,862.01 1949.80,858.41 1950.61,854.79 1951.41,851.16 1952.22,847.51 1953.02,843.85 1953.83,840.17 1954.63,836.47 1955.43,832.77 1956.24,829.04 1957.05,825.31 1957.85,821.56 1958.65,817.79 1959.46,814.02 1960.26,810.23 1961.07,806.43 1961.88,802.62 1962.68,798.80 1963.49,794.97 1964.29,791.13 1965.10,787.28 1965.90,783.42 1966.70,779.56 1967.51,775.68 1968.32,771.80 1969.12,767.91 1969.92,764.01 1970.73,760.11 1971.54,756.20 1972.34,752.28 1973.14,748.36 1973.95,744.43 1974.76,740.50 1975.56,736.57 1976.37,732.63 1977.17,728.69 1977.97,724.75 1978.78,720.80 1979.59,716.86 1980.39,712.91 1981.19,708.96 1982.00,705.01 1982.81,701.06 1983.61,697.11 1984.41,693.16 1985.22,689.22 1986.03,685.27 1986.83,681.33 1987.63,677.39 1988.44,673.45 1989.24,669.52 1990.05,665.59 1990.86,661.66 1991.66,657.74 1992.47,653.82 1993.27,649.91 1994.07,646.01 1994.88,642.11 1995.68,638.22 1996.49,634.34 1997.30,630.46 1998.10,626.60 1998.90,622.74 1999.71,618.89 2000.51,615.05 2001.32,611.22 2002.12,607.40 2002.93,603.59 2003.73,599.79 2004.54,596.00 2005.35,592.23 2006.15,588.46 2006.95,584.71 2007.76,580.98 2008.57,577.25 2009.37,573.55 2010.17,569.85 2010.98,566.17 2011.79,562.51 2012.59,558.86 2013.39,555.23 2014.20,551.61 2015.01,548.01 2015.81,544.43 2016.62,540.86 2017.42,537.32 2018.22,533.79 2019.03,530.28 2019.84,526.79 2020.64,523.32 2021.45,519.87 2022.25,516.44 2023.05,513.03 2023.86,509.64 2024.66,506.27 2025.47,502.92 2026.28,499.60 2027.08,496.30 2027.88,493.02 2028.69,489.77 2029.49,486.53 2030.30,483.33 2031.11,480.14 2031.91,476.99 2032.72,473.85 2033.52,470.74 2034.33,467.66 2035.13,464.61 2035.93,461.58 2036.74,458.57 2037.55,455.60 2038.35,452.65 2039.16,449.73 2039.96,446.83 2040.76,443.97 2041.57,441.13 2042.38,438.32 2043.18,435.55 2043.99,432.80 2044.79,430.08 2045.59,427.39 2046.40,424.73 2047.20,422.11 2048.01,419.51 2048.82,416.94 2049.62,414.41 2050.43,411.91 2051.23,409.44 2052.03,407.00 2052.84,404.60 2053.64,402.23 2054.45,399.89 2055.26,397.58 2056.06,395.31 2056.86,393.08 2057.67,390.87 2058.47,388.71 2059.28,386.57 2060.09,384.47 2060.89,382.41 2061.70,380.38 2062.50,378.39 2063.30,376.43 2064.11,374.51 2064.91,372.63 2065.72,370.78 2066.53,368.97 2067.33,367.19 2068.14,365.45 2068.94,363.75 2069.74,362.09 2070.55,360.47 2071.36,358.88 2072.16,357.33 2072.97,355.82 2073.77,354.34 2074.57,352.91 2075.38,351.51 2076.18,350.16 2076.99,348.84 2077.80,347.56 2078.60,346.32 2079.40,345.12 2080.21,343.96 2081.01,342.84 2081.82,341.75 2082.62,340.71 2083.43,339.71 2084.24,338.75 2085.04,337.82 2085.85,336.94 2086.65,336.10 2087.45,335.30 2088.26,334.54 2089.07,333.82 2089.87,333.14 2090.68,332.50 2091.48,331.91 2092.28,331.35 2093.09,330.83 2093.89,330.36 2094.70,329.93 2095.51,329.53 2096.31,329.18 2097.11,328.87 2097.92,328.60 2098.72,328.38 2099.53,328.19 2100.34,328.05 2101.14,327.94 2101.94,327.88 2102.75,327.86 2103.56,327.88 2104.36,327.94 2105.16,328.05 2105.97,328.19 2106.78,328.38 2107.58,328.60 2108.39,328.87 2109.19,329.18 2109.99,329.53 2110.80,329.93 2111.61,330.36 2112.41,330.83 2113.22,331.35 2114.02,331.91 2114.82,332.50 2115.63,333.14 2116.43,333.82 2117.24,334.54 2118.05,335.30 2118.85,336.10 2119.65,336.94 2120.46,337.82 2121.26,338.75 2122.07,339.71 2122.88,340.71 2123.68,341.75 2124.49,342.84 2125.29,343.96 2126.10,345.12 2126.90,346.32 2127.70,347.56 2128.51,348.84 2129.32,350.16 2130.12,351.51 2130.93,352.91 2131.73,354.34 2132.53,355.82 2133.34,357.33 2134.14,358.88 2134.95,360.47 2135.76,362.09 2136.56,363.75 2137.36,365.45 2138.17,367.19 2138.97,368.97 2139.78,370.78 2140.59,372.63 2141.39,374.51 2142.20,376.43 2143.00,378.39 2143.80,380.38 2144.61,382.41 2145.41,384.47 2146.22,386.57 2147.03,388.71 2147.83,390.87 2148.64,393.08 2149.44,395.31 2150.24,397.58 2151.05,399.89 2151.86,402.23 2152.66,404.60 2153.47,407.00 2154.27,409.44 2155.07,411.91 2155.88,414.41 2156.68,416.94 2157.49,419.51 2158.30,422.11 2159.10,424.73 2159.91,427.39 2160.71,430.08 2161.51,432.80 2162.32,435.55 2163.12,438.32 2163.93,441.13 2164.74,443.97 2165.54,446.83 2166.34,449.73 2167.15,452.65 2167.95,455.60 2168.76,458.57 2169.57,461.58 2170.37,464.61 2171.18,467.66 2171.98,470.74 2172.78,473.85 2173.59,476.99 2174.39,480.14 2175.20,483.33 2176.01,486.53 2176.81,489.77 2177.61,493.02 2178.42,496.30 2179.22,499.60 2180.03,502.92 2180.84,506.27 2181.64,509.64 2182.45,513.03 2183.25,516.44 2184.05,519.87 2184.86,523.32 2185.66,526.79 2186.47,530.28 2187.28,533.79 2188.08,537.32 2188.89,540.86 2189.69,544.43 2190.49,548.01 2191.30,551.61 2192.11,555.23 2192.91,558.86 2193.72,562.51 2194.52,566.17 2195.32,569.85 2196.13,573.55 2196.93,577.25 2197.74,580.98 2198.55,584.71 2199.35,588.46 2200.15,592.23 2200.96,596.00 2201.76,599.79 2202.57,603.59 2203.38,607.40 2204.18,611.22 2204.99,615.05 2205.79,618.89 2206.60,622.74 2207.40,626.60 2208.20,630.46 2209.01,634.34 2209.82,638.22 2210.62,642.11 2211.43,646.01 2212.23,649.91 2213.03,653.82 2213.84,657.74 2214.64,661.66 2215.45,665.59 2216.26,669.52 2217.06,673.45 2217.86,677.39 2218.67,681.33 2219.47,685.27 2220.28,689.22 2221.09,693.16 2221.89,697.11 2222.69,701.06 2223.50,705.01 2224.31,708.96 2225.11,712.91 2225.91,716.86 2226.72,720.80 2227.53,724.75 2228.33,728.69 2229.14,732.63 2229.94,736.57 2230.74,740.50 2231.55,744.43 2232.36,748.36 2233.16,752.28 2233.97,756.20 2234.77,760.11 2235.57,764.01 2236.38,767.91 2237.18,771.80 2237.99,775.68 2238.80,779.56 2239.60,783.42 2240.40,787.28 2241.21,791.13 2242.01,794.97 2242.82,798.80 2243.62,802.62 2244.43,806.43 2245.24,810.23 2246.04,814.02 2246.85,817.79 2247.65,821.56 2248.45,825.31 2249.26,829.04 2250.07,832.77 2250.87,836.47 2251.68,840.17 2252.48,843.85 2253.28,847.51 2254.09,851.16 2254.89,854.79 2255.70,858.41 2256.51,862.01 2257.31,865.59 2258.11,869.16 2258.92,872.70 2259.72,876.23 2260.53,879.74 2261.34,883.23 2262.14,886.70 2262.95,890.15 2263.75,893.58 2264.55,896.99 2265.36,900.38 2266.16,903.75 2266.97,907.10 2267.78,910.42 2268.58,913.72 2269.39,917.00 2270.19,920.25 2270.99,923.49 2271.80,926.69 2272.61,929.88 2273.41,933.03 2274.22,936.17 2275.02,939.28 2275.82,942.36 2276.63,945.41 2277.43,948.44 2278.24,951.45 2279.05,954.42 2279.85,957.37 2280.66,960.29 2281.46,963.19 2282.26,966.05 2283.07,968.89 2283.88,971.70 2284.68,974.47 2285.49,977.22 2286.29,979.94 2287.09,982.63 2287.90,985.29 2288.70,987.91 2289.51,990.51 2290.32,993.08 2291.12,995.61 2291.93,998.11 2292.73,1000.58 2293.53,1003.02 2294.34,1005.42 2295.14,1007.79 2295.95,1010.13 2296.76,1012.44 2297.56,1014.71 2298.36,1016.94 2299.17,1019.15 2299.97,1021.31 2300.78,1023.45 2301.59,1025.55 2302.39,1027.61 2303.20,1029.64 2304.00,1031.63 2304.80,1033.59 2305.61,1035.51 2306.41,1037.39 2307.22,1039.24 2308.03,1041.05 2308.83,1042.83 2309.64,1044.57 2310.44,1046.27 2311.24,1047.93 2312.05,1049.55 2312.86,1051.14 2313.66,1052.69 2314.47,1054.20 2315.27,1055.68 2316.07,1057.11 2316.88,1058.51 2317.68,1059.86 2318.49,1061.18 2319.30,1062.46 2320.10,1063.70 2320.90,1064.90 2321.71,1066.06 2322.51,1067.18 2323.32,1068.27 2324.12,1069.31 2324.93,1070.31 2325.74,1071.27 2326.54,1072.20 2327.35,1073.08 2328.15,1073.92 2328.95,1074.72 2329.76,1075.48 2330.57,1076.20 2331.37,1076.88 2332.18,1077.52 2332.98,1078.11 2333.78,1078.67 2334.59,1079.19 2335.39,1079.66 2336.20,1080.09 2337.01,1080.49 2337.81,1080.84 2338.61,1081.15 2339.42,1081.42 2340.22,1081.64 2341.03,1081.83 2341.84,1081.97 2342.64,1082.08 2343.44,1082.14 2344.25,1082.16 2345.06,1082.14 2345.86,1082.08 2346.66,1081.97 2347.47,1081.83 2348.28,1081.64 2349.08,1081.42 2349.89,1081.15 2350.69,1080.84 2351.49,1080.49 2352.30,1080.09 2353.11,1079.66 2353.91,1079.19 2354.72,1078.67 2355.52,1078.11 2356.32,1077.52 2357.13,1076.88 2357.93,1076.20 2358.74,1075.48 2359.55,1074.72 2360.35,1073.92 2361.15,1073.08 2361.96,1072.20 2362.76,1071.27 2363.57,1070.31 2364.38,1069.31 2365.18,1068.27 2365.99,1067.18 2366.79,1066.06 2367.60,1064.90 2368.40,1063.70 2369.20,1062.46 2370.01,1061.18 2370.82,1059.86 2371.62,1058.51 2372.43,1057.11 2373.23,1055.68 2374.03,1054.20 2374.84,1052.69 2375.64,1051.14 2376.45,1049.55 2377.26,1047.93 2378.06,1046.27 2378.86,1044.57 2379.67,1042.83 2380.47,1041.05 2381.28,1039.24 2382.09,1037.39 2382.89,1035.51 2383.70,1033.59 2384.50,1031.63 2385.30,1029.64 2386.11,1027.61 2386.91,1025.55 2387.72,1023.45 2388.53,1021.31 2389.33,1019.15 2390.14,1016.94 2390.94,1014.71 2391.74,1012.44 2392.55,1010.13 2393.36,1007.79 2394.16,1005.42 2394.97,1003.02 2395.77,1000.58 2396.57,998.11 2397.38,995.61 2398.18,993.08 2398.99,990.51 2399.80,987.91 2400.60,985.29 2401.41,982.63 2402.21,979.94 2403.01,977.22 2403.82,974.47 2404.62,971.70 2405.43,968.89 2406.24,966.05 2407.04,963.19 2407.84,960.29 2408.65,957.37 2409.45,954.42 2410.26,951.45 2411.07,948.44 2411.87,945.41 2412.68,942.36 2413.48,939.28 2414.28,936.17 2415.09,933.03 2415.89,929.88 2416.70,926.69 2417.51,923.49 2418.31,920.25 2419.11,917.00 2419.92,913.72 2420.72,910.42 2421.53,907.10 2422.34,903.75 2423.14,900.38 2423.95,896.99 2424.75,893.59 2425.55,890.15 2426.36,886.70 2427.16,883.23 2427.97,879.74 2428.78,876.23 2429.58,872.70 2430.39,869.16 2431.19,865.59 2431.99,862.01 2432.80,858.41 2433.61,854.79 2434.41,851.16 2435.22,847.51 2436.02,843.85 2436.82,840.17 2437.63,836.47 2438.43,832.77 2439.24,829.04 2440.05,825.31 2440.85,821.56 2441.65,817.79 2442.46,814.02 2443.26,810.23 2444.07,806.43 2444.88,802.62 2445.68,798.80 2446.49,794.97 2447.29,791.13 2448.10,787.28 2448.90,783.42 2449.70,779.56 2450.51,775.68 2451.32,771.80 2452.12,767.91 2452.93,764.01 2453.73,760.11 2454.53,756.20 2455.34,752.28 2456.14,748.36 2456.95,744.43 2457.76,740.50 2458.56,736.57 2459.36,732.63 2460.17,728.69 2460.97,724.75 2461.78,720.80 2462.59,716.86 2463.39,712.91 2464.19,708.96 2465.00,705.01" fill="none" stroke="#00dd00" stroke-width="4" stroke-linejoin="round"/><polyline transform="translate(-1,1)" points="1499.00,705.01 1499.81,701.06 1500.61,697.11 1501.41,693.16 1502.22,689.22 1503.03,685.27 1503.83,681.33 1504.63,677.39 1505.44,673.45 1506.24,669.52 1507.05,665.59 1507.86,661.66 1508.66,657.74 1509.46,653.82 1510.27,649.91 1511.08,646.01 1511.88,642.11 1512.68,638.22 1513.49,634.34 1514.30,630.46 1515.10,626.60 1515.90,622.74 1516.71,618.89 1517.52,615.05 1518.32,611.22 1519.12,607.40 1519.93,603.59 1520.73,599.79 1521.54,596.00 1522.35,592.23 1523.15,588.46 1523.95,584.71 1524.76,580.98 1525.57,577.25 1526.37,573.55 1527.17,569.85 1527.98,566.17 1528.79,562.51 1529.59,558.86 1530.39,555.23 1531.20,551.61 1532.01,548.01 1532.81,544.43 1533.62,540.86 1534.42,537.32 1535.22,533.79 1536.03,530.28 1536.84,526.79 1537.64,523.32 1538.44,519.87 1539.25,516.44 1540.06,513.03 1540.86,509.64 1541.66,506.27 1542.47,502.92 1543.28,499.60 1544.08,496.30 1544.88,493.02 1545.69,489.77 1546.49,486.53 1547.30,483.33 1548.11,480.14 1548.91,476.99 1549.71,473.85 1550.52,470.74 1551.33,467.66 1552.13,464.61 1552.93,461.58 1553.74,458.57 1554.55,455.60 1555.35,452.65 1556.15,449.73 1556.96,446.83 1557.77,443.97 1558.57,441.13 1559.38,438.32 1560.18,435.55 1560.98,432.80 1561.79,430.08 1562.60,427.39 1563.40,424.73 1564.20,422.11 1565.01,419.51 1565.82,416.94 1566.62,414.41 1567.42,411.91 1568.23,409.44 1569.04,407.00 1569.84,404.60 1570.64,402.23 1571.45,399.89 1572.26,397.58 1573.06,395.31 1573.87,393.08 1574.67,390.87 1575.47,388.71 1576.28,386.57 1577.09,384.47 1577.89,382.41 1578.69,380.38 1579.50,378.39 1580.31,376.43 1581.11,374.51 1581.91,372.63 1582.72,370.78 1583.53,368.97 1584.33,367.19 1585.13,365.45 1585.94,363.75 1586.74,362.09 1587.55,360.47 1588.36,358.88 1589.16,357.33 1589.96,355.82 1590.77,354.34 1591.58,352.91 1592.38,351.51 1593.18,350.16 1593.99,348.84 1594.80,347.56 1595.60,346.32 1596.40,345.12 1597.21,343.96 1598.02,342.84 1598.82,341.75 1599.62,340.71 1600.43,339.71 1601.23,338.75 1602.04,337.82 1602.85,336.94 1603.65,336.10 1604.45,335.30 1605.26,334.54 1606.07,333.82 1606.87,333.14 1607.67,332.50 1608.48,331.91 1609.29,331.35 1610.09,330.83 1610.89,330.36 1611.70,329.93 1612.51,329.53 1613.31,329.18 1614.12,328.87 1614.92,328.60 1615.72,328.38 1616.53,328.19 1617.34,328.05 1618.14,327.94 1618.94,327.88 1619.75,327.86 1620.56,327.88 1621.36,327.94 1622.16,328.05 1622.97,328.19 1623.78,328.38 1624.58,328.60 1625.38,328.87 1626.19,329.18 1626.99,329.53 1627.80,329.93 1628.61,330.36 1629.41,330.83 1630.21,331.35 1631.02,331.91 1631.83,332.50 1632.63,333.14 1633.43,333.82 1634.24,334.54 1635.05,335.30 1635.85,336.10 1636.65,336.94 1637.46,337.82 1638.26,338.75 1639.07,339.71 1639.88,340.71 1640.68,341.75 1641.48,342.84 1642.29,343.96 1643.10,345.12 1643.90,346.32 1644.70,347.56 1645.51,348.84 1646.32,350.16 1647.12,351.51 1647.92,352.91 1648.73,354.34 1649.54,355.82 1650.34,357.33 1651.14,358.88 1651.95,360.47 1652.76,362.09 1653.56,363.75 1654.37,365.45 1655.17,367.19 1655.97,368.97 1656.78,370.78 1657.59,372.63 1658.39,374.51 1659.19,376.43 1660.00,378.39 1660.81,380.38 1661.61,382.41 1662.41,384.47 1663.22,386.57 1664.03,388.71 1664.83,390.87 1665.63,393.08 1666.44,395.31 1667.24,397.58 1668.05,399.89 1668.86,402.23 1669.66,404.60 1670.46,407.00 1671.27,409.44 1672.08,411.91 1672.88,414.41 1673.68,416.94 1674.49,419.51 1675.30,422.11 1676.10,424.73 1676.90,427.39 1677.71,430.08 1678.51,432.80 1679.32,435.55 1680.12,438.32 1680.93,441.13 1681.74,443.97 1682.54,446.83 1683.35,449.73 1684.15,452.65 1684.95,455.60 1685.76,458.57 1686.57,461.58 1687.37,464.61 1688.17,467.66 1688.98,470.74 1689.79,473.85 1690.59,476.99 1691.39,480.14 1692.20,483.33 1693.01,486.53 1693.81,489.77 1694.62,493.02 1695.42,496.30 1696.22,499.60 1697.03,502.92 1697.84,506.27 1698.64,509.64 1699.44,513.03 1700.25,516.44 1701.06,519.87 1701.86,523.32 1702.66,526.79 1703.47,530.28 1704.28,533.79 1705.08,537.32 1705.88,540.86 1706.69,544.43 1707.49,548.01 1708.30,551.61 1709.11,555.23 1709.91,558.86 1710.71,562.51 1711.52,566.17 1712.33,569.85 1713.13,573.55 1713.93,577.25 1714.74,580.98 1715.55,584.71 1716.35,588.46 1717.15,592.23 1717.96,596.00 1718.77,599.79 1719.57,603.59 1720.38,607.40 1721.18,611.22 1721.99,615.05 1722.79,618.89 1723.60,622.74 1724.40,626.60 1725.20,630.46 1726.01,634.34 1726.82,638.22 1727.62,642.11 1728.42,646.01 1729.23,649.91 1730.04,653.82 1730.84,657.74 1731.64,661.66 1732.45,665.59 1733.26,669.52 1734.06,673.45 1734.87,677.39 1735.67,681.33 1736.47,685.27 1737.28,689.22 1738.09,693.16 1738.89,697.11 1739.69,701.06 1740.50,705.01 1741.31,708.96 1742.11,712.91 1742.91,716.86 1743.72,720.80 1744.53,724.75 1745.33,728.69 1746.13,732.63 1746.94,736.57 1747.74,740.50 1748.55,744.43 1749.36,748.36 1750.16,752.28 1750.96,756.20 1751.77,760.11 1752.58,764.01 1753.38,767.91 1754.18,771.80 1754.99,775.68 1755.80,779.56 1756.60,783.42 1757.40,787.28 1758.21,791.13 1759.01,794.97 1759.82,798.80 1760.62,802.62 1761.43,806.43 1762.24,810.23 1763.04,814.02 1763.85,817.79 1764.65,821.56 1765.45,825.31 1766.26,829.04 1767.07,832.77 1767.87,836.47 1768.67,840.17 1769.48,843.85 1770.28,847.51 1771.09,851.16 1771.89,854.79 1772.70,858.41 1773.51,862.01 1774.31,865.59 1775.12,869.16 1775.92,872.70 1776.72,876.23 1777.53,879.74 1778.34,883.23 1779.14,886.70 1779.94,890.15 1780.75,893.59 1781.56,896.99 1782.36,900.38 1783.16,903.75 1783.97,907.10 1784.78,910.42 1785.58,913.72 1786.38,917.00 1787.19,920.25 1787.99,923.49 1788.80,926.69 1789.61,929.88 1790.41,933.03 1791.21,936.17 1792.02,939.28 1792.83,942.36 1793.63,945.41 1794.43,948.44 1795.24,951.45 1796.05,954.42 1796.85,957.37 1797.65,960.29 1798.46,963.19 1799.27,966.05 1800.07,968.89 1800.88,971.70 1801.68,974.47 1802.48,977.22 1803.29,979.94 1804.10,982.63 1804.90,985.29 1805.70,987.91 1806.51,990.51 1807.32,993.08 1808.12,995.61 1808.92,998.11 1809.73,1000.58 1810.54,1003.02 1811.34,1005.42 1812.14,1007.79 1812.95,1010.13 1813.76,1012.44 1814.56,1014.71 1815.37,1016.94 1816.17,1019.15 1816.97,1021.31 1817.78,1023.45 1818.59,1025.55 1819.39,1027.61 1820.19,1029.64 1821.00,1031.63 1821.81,1033.59 1822.61,1035.51 1823.41,1037.39 1824.22,1039.24 1825.03,1041.05 1825.83,1042.83 1826.63,1044.57 1827.44,1046.27 1828.24,1047.93 1829.05,1049.55 1829.86,1051.14 1830.66,1052.69 1831.47,1054.20 1832.27,1055.68 1833.08,1057.11 1833.88,1058.51 1834.68,1059.86 1835.49,1061.18 1836.30,1062.46 1837.10,1063.70 1837.90,1064.90 1838.71,1066.06 1839.51,1067.18 1840.32,1068.27 1841.12,1069.31 1841.93,1070.31 1842.74,1071.27 1843.54,1072.20 1844.35,1073.08 1845.15,1073.92 1845.95,1074.72 1846.76,1075.48 1847.57,1076.20 1848.37,1076.88 1849.17,1077.52 1849.98,1078.11 1850.79,1078.67 1851.59,1079.19 1852.39,1079.66 1853.20,1080.09 1854.01,1080.49 1854.81,1080.84 1855.62,1081.15 1856.42,1081.42 1857.22,1081.64 1858.03,1081.83 1858.84,1081.97 1859.64,1082.08 1860.44,1082.14 1861.25,1082.16 1862.06,1082.14 1862.86,1082.08 1863.66,1081.97 1864.47,1081.83 1865.28,1081.64 1866.08,1081.42 1866.88,1081.15 1867.69,1080.84 1868.49,1080.49 1869.30,1080.09 1870.11,1079.66 1870.91,1079.19 1871.71,1078.67 1872.52,1078.11 1873.33,1077.52 1874.13,1076.88 1874.93,1076.20 1875.74,1075.48 1876.55,1074.72 1877.35,1073.92 1878.15,1073.08 1878.96,1072.20 1879.76,1071.27 1880.57,1070.31 1881.38,1069.31 1882.18,1068.27 1882.99,1067.18 1883.79,1066.06 1884.60,1064.90 1885.40,1063.70 1886.20,1062.46 1887.01,1061.18 1887.82,1059.86 1888.62,1058.51 1889.42,1057.11 1890.23,1055.68 1891.03,1054.20 1891.84,1052.69 1892.64,1051.14 1893.45,1049.55 1894.26,1047.93 1895.06,1046.27 1895.87,1044.57 1896.67,1042.83 1897.47,1041.05 1898.28,1039.24 1899.09,1037.39 1899.89,1035.51 1900.69,1033.59 1901.50,1031.63 1902.31,1029.64 1903.11,1027.61 1903.91,1025.55 1904.72,1023.45 1905.53,1021.31 1906.33,1019.15 1907.13,1016.94 1907.94,1014.71 1908.74,1012.44 1909.55,1010.13 1910.36,1007.79 1911.16,1005.42 1911.96,1003.02 1912.77,1000.58 1913.58,998.11 1914.38,995.61 1915.18,993.08 1915.99,990.51 1916.80,987.91 1917.60,985.29 1918.40,982.63 1919.21,979.94 1920.02,977.22 1920.82,974.47 1921.62,971.70 1922.43,968.89 1923.23,966.05 1924.04,963.19 1924.85,960.29 1925.65,957.37 1926.45,954.42 1927.26,951.45 1928.07,948.44 1928.87,945.41 1929.67,942.36 1930.48,939.28 1931.29,936.17 1932.09,933.03 1932.89,929.88 1933.70,926.69 1934.51,923.49 1935.31,920.25 1936.12,917.00 1936.92,913.72 1937.72,910.42 1938.53,907.10 1939.34,903.75 1940.14,900.38 1940.94,896.99 1941.75,893.59 1942.56,890.15 1943.36,886.70 1944.16,883.23 1944.97,879.74 1945.78,876.23 1946.58,872.70 1947.38,869.16 1948.19,865.59 1948.99,862.01 1949.80,858.41 1950.61,854.79 1951.41,851.16 1952.22,847.51 1953.02,843.85 1953.83,840.17 1954.63,836.47 1955.43,832.77 1956.24,829.04 1957.05,825.31 1957.85,821.56 1958.65,817.79 1959.46,814.02 1960.26,810.23 1961.07,806.43 1961.88,802.62 1962.68,798.80 1963.49,794.97 1964.29,791.13 1965.10,787.28 1965.90,783.42 1966.70,779.56 1967.51,775.68 1968.32,771.80 1969.12,767.91 1969.92,764.01 1970.73,760.11 1971.54,756.20 1972.34,752.28 1973.14,748.36 1973.95,744.43 1974.76,740.50 1975.56,736.57 1976.37,732.63 1977.17,728.69 1977.97,724.75 1978.78,720.80 1979.59,716.86 1980.39,712.91 1981.19,708.96 1982.00,705.01 1982.81,701.06 1983.61,697.11 1984.41,693.16 1985.22,689.22 1986.03,685.27 1986.83,681.33 1987.63,677.39 1988.44,673.45 1989.24,669.52 1990.05,665.59 1990.86,661.66 1991.66,657.74 1992.47,653.82 1993.27,649.91 1994.07,646.01 1994.88,642.11 1995.68,638.22 1996.49,634.34 1997.30,630.46 1998.10,626.60 1998.90,622.74 1999.71,618.89 2000.51,615.05 2001.32,611.22 2002.12,607.40 2002.93,603.59 2003.73,599.79 2004.54,596.00 2005.35,592.23 2006.15,588.46 2006.95,584.71 2007.76,580.98 2008.57,577.25 2009.37,573.55 2010.17,569.85 2010.98,566.17 2011.79,562.51 2012.59,558.86 2013.39,555.23 2014.20,551.61 2015.01,548.01 2015.81,544.43 2016.62,540.86 2017.42,537.32 2018.22,533.79 2019.03,530.28 2019.84,526.79 2020.64,523.32 2021.45,519.87 2022.25,516.44 2023.05,513.03 2023.86,509.64 2024.66,506.27 2025.47,502.92 2026.28,499.60 2027.08,496.30 2027.88,493.02 2028.69,489.77 2029.49,486.53 2030.30,483.33 2031.11,480.14 2031.91,476.99 2032.72,473.85 2033.52,470.74 2034.33,467.66 2035.13,464.61 2035.93,461.58 2036.74,458.57 2037.55,455.60 2038.35,452.65 2039.16,449.73 2039.96,446.83 2040.76,443.97 2041.57,441.13 2042.38,438.32 2043.18,435.55 2043.99,432.80 2044.79,430.08 2045.59,427.39 2046.40,424.73 2047.20,422.11 2048.01,419.51 2048.82,416.94 2049.62,414.41 2050.43,411.91 2051.23,409.44 2052.03,407.00 2052.84,404.60 2053.64,402.23 2054.45,399.89 2055.26,397.58 2056.06,395.31 2056.86,393.08 2057.67,390.87 2058.47,388.71 2059.28,386.57 2060.09,384.47 2060.89,382.41 2061.70,380.38 2062.50,378.39 2063.30,376.43 2064.11,374.51 2064.91,372.63 2065.72,370.78 2066.53,368.97 2067.33,367.19 2068.14,365.45 2068.94,363.75 2069.74,362.09 2070.55,360.47 2071.36,358.88 2072.16,357.33 2072.97,355.82 2073.77,354.34 2074.57,352.91 2075.38,351.51 2076.18,350.16 2076.99,348.84 2077.80,347.56 2078.60,346.32 2079.40,345.12 2080.21,343.96 2081.01,342.84 2081.82,341.75 2082.62,340.71 2083.43,339.71 2084.24,338.75 2085.04,337.82 2085.85,336.94 2086.65,336.10 2087.45,335.30 2088.26,334.54 2089.07,333.82 2089.87,333.14 2090.68,332.50 2091.48,331.91 2092.28,331.35 2093.09,330.83 2093.89,330.36 2094.70,329.93 2095.51,329.53 2096.31,329.18 2097.11,328.87 2097.92,328.60 2098.72,328.38 2099.53,328.19 2100.34,328.05 2101.14,327.94 2101.94,327.88 2102.75,327.86 2103.56,327.88 2104.36,327.94 2105.16,328.05 2105.97,328.19 2106.78,328.38 2107.58,328.60 2108.39,328.87 2109.19,329.18 2109.99,329.53 2110.80,329.93 2111.61,330.36 2112.41,330.83 2113.22,331.35 2114.02,331.91 2114.82,332.50 2115.63,333.14 2116.43,333.82 2117.24,334.54 2118.05,335.30 2118.85,336.10 2119.65,336.94 2120.46,337.82 2121.26,338.75 2122.07,339.71 2122.88,340.71 2123.68,341.75 2124.49,342.84 2125.29,343.96 2126.10,345.12 2126.90,346.32 2127.70,347.56 2128.51,348.84 2129.32,350.16 2130.12,351.51 2130.93,352.91 2131.73,354.34 2132.53,355.82 2133.34,357.33 2134.14,358.88 2134.95,360.47 2135.76,362.09 2136.56,363.75 2137.36,365.45 2138.17,367.19 2138.97,368.97 2139.78,370.78 2140.59,372.63 2141.39,374.51 2142.20,376.43 2143.00,378.39 2143.80,380.38 2144.61,382.41 2145.41,384.47 2146.22,386.57 2147.03,388.71 2147.83,390.87 2148.64,393.08 2149.44,395.31 2150.24,397.58 2151.05,399.89 2151.86,402.23 2152.66,404.60 2153.47,407.00 2154.27,409.44 2155.07,411.91 2155.88,414.41 2156.68,416.94 2157.49,419.51 2158.30,422.11 2159.10,424.73 2159.91,427.39 2160.71,430.08 2161.51,432.80 2162.32,435.55 2163.12,438.32 2163.93,441.13 2164.74,443.97 2165.54,446.83 2166.34,449.73 2167.15,452.65 2167.95,455.60 2168.76,458.57 2169.57,461.58 2170.37,464.61 2171.18,467.66 2171.98,470.74 2172.78,473.85 2173.59,476.99 2174.39,480.14 2175.20,483.33 2176.01,486.53 2176.81,489.77 2177.61,493.02 2178.42,496.30 2179.22,499.60 2180.03,502.92 2180.84,506.27 2181.64,509.64 2182.45,513.03 2183.25,516.44 2184.05,519.87 2184.86,523.32 2185.66,526.79 2186.47,530.28 2187.28,533.79 2188.08,537.32 2188.89,540.86 2189.69,544.43 2190.49,548.01 2191.30,551.61 2192.11,555.23 2192.91,558.86 2193.72,562.51 2194.52,566.17 2195.32,569.85 2196.13,573.55 2196.93,577.25 2197.74,580.98 2198.55,584.71 2199.35,588.46 2200.15,592.23 2200.96,596.00 2201.76,599.79 2202.57,603.59 2203.38,607.40 2204.18,611.22 2204.99,615.05 2205.79,618.89 2206.60,622.74 2207.40,626.60 2208.20,630.46 2209.01,634.34 2209.82,638.22 2210.62,642.11 2211.43,646.01 2212.23,649.91 2213.03,653.82 2213.84,657.74 2214.64,661.66 2215.45,665.59 2216.26,669.52 2217.06,673.45 2217.86,677.39 2218.67,681.33 2219.47,685.27 2220.28,689.22 2221.09,693.16 2221.89,697.11 2222.69,701.06 2223.50,705.01 2224.31,708.96 2225.11,712.91 2225.91,716.86 2226.72,720.80 2227.53,724.75 2228.33,728.69 2229.14,732.63 2229.94,736.57 2230.74,740.50 2231.55,744.43 2232.36,748.36 2233.16,752.28 2233.97,756.20 2234.77,760.11 2235.57,764.01 2236.38,767.91 2237.18,771.80 2237.99,775.68 2238.80,779.56 2239.60,783.42 2240.40,787.28 2241.21,791.13 2242.01,794.97 2242.82,798.80 2243.62,802.62 2244.43,806.43 2245.24,810.23 2246.04,814.02 2246.85,817.79 2247.65,821.56 2248.45,825.31 2249.26,829.04 2250.07,832.77 2250.87,836.47 2251.68,840.17 2252.48,843.85 2253.28,847.51 2254.09,851.16 2254.89,854.79 2255.70,858.41 2256.51,862.01 2257.31,865.59 2258.11,869.16 2258.92,872.70 2259.72,876.23 2260.53,879.74 2261.34,883.23 2262.14,886.70 2262.95,890.15 2263.75,893.58 2264.55,896.99 2265.36,900.38 2266.16,903.75 2266.97,907.10 2267.78,910.42 2268.58,913.72 2269.39,917.00 2270.19,920.25 2270.99,923.49 2271.80,926.69 2272.61,929.88 2273.41,933.03 2274.22,936.17 2275.02,939.28 2275.82,942.36 2276.63,945.41 2277.43,948.44 2278.24,951.45 2279.05,954.42 2279.85,957.37 2280.66,960.29 2281.46,963.19 2282.26,966.05 2283.07,968.89 2283.88,971.70 2284.68,974.47 2285.49,977.22 2286.29,979.94 2287.09,982.63 2287.90,985.29 2288.70,987.91 2289.51,990.51 2290.32,993.08 2291.12,995.61 2291.93,998.11 2292.73,1000.58 2293.53,1003.02 2294.34,1005.42 2295.14,1007.79 2295.95,1010.13 2296.76,1012.44 2297.56,1014.71 2298.36,1016.94 2299.17,1019.15 2299.97,1021.31 2300.78,1023.45 2301.59,1025.55 2302.39,1027.61 2303.20,1029.64 2304.00,1031.63 2304.80,1033.59 2305.61,1035.51 2306.41,1037.39 2307.22,1039.24 2308.03,1041.05 2308.83,1042.83 2309.64,1044.57 2310.44,1046.27 2311.24,1047.93 2312.05,1049.55 2312.86,1051.14 2313.66,1052.69 2314.47,1054.20 2315.27,1055.68 2316.07,1057.11 2316.88,1058.51 2317.68,1059.86 2318.49,1061.18 2319.30,1062.46 2320.10,1063.70 2320.90,1064.90 2321.71,1066.06 2322.51,1067.18 2323.32,1068.27 2324.12,1069.31 2324.93,1070.31 2325.74,1071.27 2326.54,1072.20 2327.35,1073.08 2328.15,1073.92 2328.95,1074.72 2329.76,1075.48 2330.57,1076.20 2331.37,1076.88 2332.18,1077.52 2332.98,1078.11 2333.78,1078.67 2334.59,1079.19 2335.39,1079.66 2336.20,1080.09 2337.01,1080.49 2337.81,1080.84 2338.61,1081.15 2339.42,1081.42 2340.22,1081.64 2341.03,1081.83 2341.84,1081.97 2342.64,1082.08 2343.44,1082.14 2344.25,1082.16 2345.06,1082.14 2345.86,1082.08 2346.66,1081.97 2347.47,1081.83 2348.28,1081.64 2349.08,1081.42 2349.89,1081.15 2350.69,1080.84 2351.49,1080.49 2352.30,1080.09 2353.11,1079.66 2353.91,1079.19 2354.72,1078.67 2355.52,1078.11 2356.32,1077.52 2357.13,1076.88 2357.93,1076.20 2358.74,1075.48 2359.55,1074.72 2360.35,1073.92 2361.15,1073.08 2361.96,1072.20 2362.76,1071.27 2363.57,1070.31 2364.38,1069.31 2365.18,1068.27 2365.99,1067.18 2366.79,1066.06 2367.60,1064.90 2368.40,1063.70 2369.20,1062.46 2370.01,1061.18 2370.82,1059.86 2371.62,1058.51 2372.43,1057.11 2373.23,1055.68 2374.03,1054.20 2374.84,1052.69 2375.64,1051.14 2376.45,1049.55 2377.26,1047.93 2378.06,1046.27 2378.86,1044.57 2379.67,1042.83 2380.47,1041.05 2381.28,1039.24 2382.09,1037.39 2382.89,1035.51 2383.70,1033.59 2384.50,1031.63 2385.30,1029.64 2386.11,1027.61 2386.91,1025.55 2387.72,1023.45 2388.53,1021.31 2389.33,1019.15 2390.14,1016.94 2390.94,1014.71 2391.74,1012.44 2392.55,1010.13 2393.36,1007.79 2394.16,1005.42 2394.97,1003.02 2395.77,1000.58 2396.57,998.11 2397.38,995.61 2398.18,993.08 2398.99,990.51 2399.80,987.91 2400.60,985.29 2401.41,982.63 2402.21,979.94 2403.01,977.22 2403.82,974.47 2404.62,971.70 2405.43,968.89 2406.24,966.05 2407.04,963.19 2407.84,960.29 2408.65,957.37 2409.45,954.42 2410.26,951.45 2411.07,948.44 2411.87,945.41 2412.68,942.36 2413.48,939.28 2414.28,936.17 2415.09,933.03 2415.89,929.88 2416.70,926.69 2417.51,923.49 2418.31,920.25 2419.11,917.00 2419.92,913.72 2420.72,910.42 2421.53,907.10 2422.34,903.75 2423.14,900.38 2423.95,896.99 2424.75,893.59 2425.55,890.15 2426.36,886.70 2427.16,883.23 2427.97,879.74 2428.78,876.23 2429.58,872.70 2430.39,869.16 2431.19,865.59 2431.99,862.01 2432.80,858.41 2433.61,854.79 2434.41,851.16 2435.22,847.51 2436.02,843.85 2436.82,840.17 2437.63,836.47 2438.43,832.77 2439.24,829.04 2440.05,825.31 2440.85,821.56 2441.65,817.79 2442.46,814.02 2443.26,810.23 2444.07,806.43 2444.88,802.62 2445.68,798.80 2446.49,794.97 2447.29,791.13 2448.10,787.28 2448.90,783.42 2449.70,779.56 2450.51,775.68 2451.32,771.80 2452.12,767.91 2452.93,764.01 2453.73,760.11 2454.53,756.20 2455.34,752.28 2456.14,748.36 2456.95,744.43 2457.76,740.50 2458.56,736.57 2459.36,732.63 2460.17,728.69 2460.97,724.75 2461.78,720.80 2462.59,716.86 2463.39,712.91 2464.19,708.96 2465.00,705.01" fill="none" stroke="#00dd00" stroke-width="4" stroke-linejoin="round"/><polyline transform="translate(1,-1)" points="1499.00,705.01 1499.81,701.06 1500.61,697.11 1501.41,693.16 1502.22,689.22 1503.03,685.27 1503.83,681.33 1504.63,677.39 1505.44,673.45 1506.24,669.52 1507.05,665.59 1507.86,661.66 1508.66,657.74 1509.46,653.82 1510.27,649.91 1511.08,646.01 1511.88,642.11 1512.68,638.22 1513.49,634.34 1514.30,630.46 1515.10,626.60 1515.90,622.74 1516.71,618.89 1517.52,615.05 1518.32,611.22 1519.12,607.40 1519.93,603.59 1520.73,599.79 1521.54,596.00 1522.35,592.23 1523.15,588.46 1523.95,584.71 1524.76,580.98 1525.57,577.25 1526.37,573.55 1527.17,569.85 1527.98,566.17 1528.79,562.51 1529.59,558.86 1530.39,555.23 1531.20,551.61 1532.01,548.01 1532.81,544.43 1533.62,540.86 1534.42,537.32 1535.22,533.79 1536.03,530.28 1536.84,526.79 1537.64,523.32 1538.44,519.87 1539.25,516.44 1540.06,513.03 1540.86,509.64 1541.66,506.27 1542.47,502.92 1543.28,499.60 1544.08,496.30 1544.88,493.02 1545.69,489.77 1546.49,486.53 1547.30,483.33 1548.11,480.14 1548.91,476.99 1549.71,473.85 1550.52,470.74 1551.33,467.66 1552.13,464.61 1552.93,461.58 1553.74,458.57 1554.55,455.60 1555.35,452.65 1556.15,449.73 1556.96,446.83 1557.77,443.97 1558.57,441.13 1559.38,438.32 1560.18,435.55 1560.98,432.80 1561.79,430.08 1562.60,427.39 1563.40,424.73 1564.20,422.11 1565.01,419.51 1565.82,416.94 1566.62,414.41 1567.42,411.91 1568.23,409.44 1569.04,407.00 1569.84,404.60 1570.64,402.23 1571.45,399.89 1572.26,397.58 1573.06,395.31 1573.87,393.08 1574.67,390.87 1575.47,388.71 1576.28,386.57 1577.09,384.47 1577.89,382.41 1578.69,380.38 1579.50,378.39 1580.31,376.43 1581.11,374.51 1581.91,372.63 1582.72,370.78 1583.53,368.97 1584.33,367.19 1585.13,365.45 1585.94,363.75 1586.74,362.09 1587.55,360.47 1588.36,358.88 1589.16,357.33 1589.96,355.82 1590.77,354.34 1591.58,352.91 1592.38,351.51 1593.18,350.16 1593.99,348.84 1594.80,347.56 1595.60,346.32 1596.40,345.12 1597.21,343.96 1598.02,342.84 1598.82,341.75 1599.62,340.71 1600.43,339.71 1601.23,338.75 1602.04,337.82 1602.85,336.94 1603.65,336.10 1604.45,335.30 1605.26,334.54 1606.07,333.82 1606.87,333.14 1607.67,332.50 1608.48,331.91 1609.29,331.35 1610.09,330.83 1610.89,330.36 1611.70,329.93 1612.51,329.53 1613.31,329.18 1614.12,328.87 1614.92,328.60 1615.72,328.38 1616.53,328.19 1617.34,328.05 1618.14,327.94 1618.94,327.88 1619.75,327.86 1620.56,327.88 1621.36,327.94 1622.16,328.05 1622.97,328.19 1623.78,328.38 1624.58,328.60 1625.38,328.87 1626.19,329.18 1626.99,329.53 1627.80,329.93 1628.61,330.36 1629.41,330.83 1630.21,331.35 1631.02,331.91 1631.83,332.50 1632.63,333.14 1633.43,333.82 1634.24,334.54 1635.05,335.30 1635.85,336.10 1636.65,336.94 1637.46,337.82 1638.26,338.75 1639.07,339.71 1639.88,340.71 1640.68,341.75 1641.48,342.84 1642.29,343.96 1643.10,345.12 1643.90,346.32 1644.70,347.56 1645.51,348.84 1646.32,350.16 1647.12,351.51 1647.92,352.91 1648.73,354.34 1649.54,355.82 1650.34,357.33 1651.14,358.88 1651.95,360.47 1652.76,362.09 1653.56,363.75 1654.37,365.45 1655.17,367.19 1655.97,368.97 1656.78,370.78 1657.59,372.63 1658.39,374.51 1659.19,376.43 1660.00,378.39 1660.81,380.38 1661.61,382.41 1662.41,384.47 1663.22,386.57 1664.03,388.71 1664.83,390.87 1665.63,393.08 1666.44,395.31 1667.24,397.58 1668.05,399.89 1668.86,402.23 1669.66,404.60 1670.46,407.00 1671.27,409.44 1672.08,411.91 1672.88,414.41 1673.68,416.94 1674.49,419.51 1675.30,422.11 1676.10,424.73 1676.90,427.39 1677.71,430.08 1678.51,432.80 1679.32,435.55 1680.12,438.32 1680.93,441.13 1681.74,443.97 1682.54,446.83 1683.35,449.73 1684.15,452.65 1684.95,455.60 1685.76,458.57 1686.57,461.58 1687.37,464.61 1688.17,467.66 1688.98,470.74 1689.79,473.85 1690.59,476.99 1691.39,480.14 1692.20,483.33 1693.01,486.53 1693.81,489.77 1694.62,493.02 1695.42,496.30 1696.22,499.60 1697.03,502.92 1697.84,506.27 1698.64,509.64 1699.44,513.03 1700.25,516.44 1701.06,519.87 1701.86,523.32 1702.66,526.79 1703.47,530.28 1704.28,533.79 1705.08,537.32 1705.88,540.86 1706.69,544.43 1707.49,548.01 1708.30,551.61 1709.11,555.23 1709.91,558.86 1710.71,562.51 1711.52,566.17 1712.33,569.85 1713.13,573.55 1713.93,577.25 1714.74,580.98 1715.55,584.71 1716.35,588.46 1717.15,592.23 1717.96,596.00 1718.77,599.79 1719.57,603.59 1720.38,607.40 1721.18,611.22 1721.99,615.05 1722.79,618.89 1723.60,622.74 1724.40,626.60 1725.20,630.46 1726.01,634.34 1726.82,638.22 1727.62,642.11 1728.42,646.01 1729.23,649.91 1730.04,653.82 1730.84,657.74 1731.64,661.66 1732.45,665.59 1733.26,669.52 1734.06,673.45 1734.87,677.39 1735.67,681.33 1736.47,685.27 1737.28,689.22 1738.09,693.16 1738.89,697.11 1739.69,701.06 1740.50,705.01 1741.31,708.96 1742.11,712.91 1742.91,716.86 1743.72,720.80 1744.53,724.75 1745.33,728.69 1746.13,732.63 1746.94,736.57 1747.74,740.50 1748.55,744.43 1749.36,748.36 1750.16,752.28 1750.96,756.20 1751.77,760.11 1752.58,764.01 1753.38,767.91 1754.18,771.80 1754.99,775.68 1755.80,779.56 1756.60,783.42 1757.40,787.28 1758.21,791.13 1759.01,794.97 1759.82,798.80 1760.62,802.62 1761.43,806.43 1762.24,810.23 1763.04,814.02 1763.85,817.79 1764.65,821.56 1765.45,825.31 1766.26,829.04 1767.07,832.77 1767.87,836.47 1768.67,840.17 1769.48,843.85 1770.28,847.51 1771.09,851.16 1771.89,854.79 1772.70,858.41 1773.51,862.01 1774.31,865.59 1775.12,869.16 1775.92,872.70 1776.72,876.23 1777.53,879.74 1778.34,883.23 1779.14,886.70 1779.94,890.15 1780.75,893.59 1781.56,896.99 1782.36,900.38 1783.16,903.75 1783.97,907.10 1784.78,910.42 1785.58,913.72 1786.38,917.00 1787.19,920.25 1787.99,923.49 1788.80,926.69 1789.61,929.88 1790.41,933.03 1791.21,936.17 1792.02,939.28 1792.83,942.36 1793.63,945.41 1794.43,948.44 1795.24,951.45 1796.05,954.42 1796.85,957.37 1797.65,960.29 1798.46,963.19 1799.27,966.05 1800.07,968.89 1800.88,971.70 1801.68,974.47 1802.48,977.22 1803.29,979.94 1804.10,982.63 1804.90,985.29 1805.70,987.91 1806.51,990.51 1807.32,993.08 1808.12,995.61 1808.92,998.11 1809.73,1000.58 1810.54,1003.02 1811.34,1005.42 1812.14,1007.79 1812.95,1010.13 1813.76,1012.44 1814.56,1014.71 1815.37,1016.94 1816.17,1019.15 1816.97,1021.31 1817.78,1023.45 1818.59,1025.55 1819.39,1027.61 1820.19,1029.64 1821.00,1031.63 1821.81,1033.59 1822.61,1035.51 1823.41,1037.39 1824.22,1039.24 1825.03,1041.05 1825.83,1042.83 1826.63,1044.57 1827.44,1046.27 1828.24,1047.93 1829.05,1049.55 1829.86,1051.14 1830.66,1052.69 1831.47,1054.20 1832.27,1055.68 1833.08,1057.11 1833.88,1058.51 1834.68,1059.86 1835.49,1061.18 1836.30,1062.46 1837.10,1063.70 1837.90,1064.90 1838.71,1066.06 1839.51,1067.18 1840.32,1068.27 1841.12,1069.31 1841.93,1070.31 1842.74,1071.27 1843.54,1072.20 1844.35,1073.08 1845.15,1073.92 1845.95,1074.72 1846.76,1075.48 1847.57,1076.20 1848.37,1076.88 1849.17,1077.52 1849.98,1078.11 1850.79,1078.67 1851.59,1079.19 1852.39,1079.66 1853.20,1080.09 1854.01,1080.49 1854.81,1080.84 1855.62,1081.15 1856.42,1081.42 1857.22,1081.64 1858.03,1081.83 1858.84,1081.97 1859.64,1082.08 1860.44,1082.14 1861.25,1082.16 1862.06,1082.14 1862.86,1082.08 1863.66,1081.97 1864.47,1081.83 1865.28,1081.64 1866.08,1081.42 1866.88,1081.15 1867.69,1080.84 1868.49,1080.49 1869.30,1080.09 1870.11,1079.66 1870.91,1079.19 1871.71,1078.67 1872.52,1078.11 1873.33,1077.52 1874.13,1076.88 1874.93,1076.20 1875.74,1075.48 1876.55,1074.72 1877.35,1073.92 1878.15,1073.08 1878.96,1072.20 1879.76,1071.27 1880.57,1070.31 1881.38,1069.31 1882.18,1068.27 1882.99,1067.18 1883.79,1066.06 1884.60,1064.90 1885.40,1063.70 1886.20,1062.46 1887.01,1061.18 1887.82,1059.86 1888.62,1058.51 1889.42,1057.11 1890.23,1055.68 1891.03,1054.20 1891.84,1052.69 1892.64,1051.14 1893.45,1049.55 1894.26,1047.93 1895.06,1046.27 1895.87,1044.57 1896.67,1042.83 1897.47,1041.05 1898.28,1039.24 1899.09,1037.39 1899.89,1035.51 1900.69,1033.59 1901.50,1031.63 1902.31,1029.64 1903.11,1027.61 1903.91,1025.55 1904.72,1023.45 1905.53,1021.31 1906.33,1019.15 1907.13,1016.94 1907.94,1014.71 1908.74,1012.44 1909.55,1010.13 1910.36,1007.79 1911.16,1005.42 1911.96,1003.02 1912.77,1000.58 1913.58,998.11 1914.38,995.61 1915.18,993.08 1915.99,990.51 1916.80,987.91 1917.60,985.29 1918.40,982.63 1919.21,979.94 1920.02,977.22 1920.82,974.47 1921.62,971.70 1922.43,968.89 1923.23,966.05 1924.04,963.19 1924.85,960.29 1925.65,957.37 1926.45,954.42 1927.26,951.45 1928.07,948.44 1928.87,945.41 1929.67,942.36 1930.48,939.28 1931.29,936.17 1932.09,933.03 1932.89,929.88 1933.70,926.69 1934.51,923.49 1935.31,920.25 1936.12,917.00 1936.92,913.72 1937.72,910.42 1938.53,907.10 1939.34,903.75 1940.14,900.38 1940.94,896.99 1941.75,893.59 1942.56,890.15 1943.36,886.70 1944.16,883.23 1944.97,879.74 1945.78,876.23 1946.58,872.70 1947.38,869.16 1948.19,865.59 1948.99,862.01 1949.80,858.41 1950.61,854.79 1951.41,851.16 1952.22,847.51 1953.02,843.85 1953.83,840.17 1954.63,836.47 1955.43,832.77 1956.24,829.04 1957.05,825.31 1957.85,821.56 1958.65,817.79 1959.46,814.02 1960.26,810.23 1961.07,806.43 1961.88,802.62 1962.68,798.80 1963.49,794.97 1964.29,791.13 1965.10,787.28 1965.90,783.42 1966.70,779.56 1967.51,775.68 1968.32,771.80 1969.12,767.91 1969.92,764.01 1970.73,760.11 1971.54,756.20 1972.34,752.28 1973.14,748.36 1973.95,744.43 1974.76,740.50 1975.56,736.57 1976.37,732.63 1977.17,728.69 1977.97,724.75 1978.78,720.80 1979.59,716.86 1980.39,712.91 1981.19,708.96 1982.00,705.01 1982.81,701.06 1983.61,697.11 1984.41,693.16 1985.22,689.22 1986.03,685.27 1986.83,681.33 1987.63,677.39 1988.44,673.45 1989.24,669.52 1990.05,665.59 1990.86,661.66 1991.66,657.74 1992.47,653.82 1993.27,649.91 1994.07,646.01 1994.88,642.11 1995.68,638.22 1996.49,634.34 1997.30,630.46 1998.10,626.60 1998.90,622.74 1999.71,618.89 2000.51,615.05 2001.32,611.22 2002.12,607.40 2002.93,603.59 2003.73,599.79 2004.54,596.00 2005.35,592.23 2006.15,588.46 2006.95,584.71 2007.76,580.98 2008.57,577.25 2009.37,573.55 2010.17,569.85 2010.98,566.17 2011.79,562.51 2012.59,558.86 2013.39,555.23 2014.20,551.61 2015.01,548.01 2015.81,544.43 2016.62,540.86 2017.42,537.32 2018.22,533.79 2019.03,530.28 2019.84,526.79 2020.64,523.32 2021.45,519.87 2022.25,516.44 2023.05,513.03 2023.86,509.64 2024.66,506.27 2025.47,502.92 2026.28,499.60 2027.08,496.30 2027.88,493.02 2028.69,489.77 2029.49,486.53 2030.30,483.33 2031.11,480.14 2031.91,476.99 2032.72,473.85 2033.52,470.74 2034.33,467.66 2035.13,464.61 2035.93,461.58 2036.74,458.57 2037.55,455.60 2038.35,452.65 2039.16,449.73 2039.96,446.83 2040.76,443.97 2041.57,441.13 2042.38,438.32 2043.18,435.55 2043.99,432.80 2044.79,430.08 2045.59,427.39 2046.40,424.73 2047.20,422.11 2048.01,419.51 2048.82,416.94 2049.62,414.41 2050.43,411.91 2051.23,409.44 2052.03,407.00 2052.84,404.60 2053.64,402.23 2054.45,399.89 2055.26,397.58 2056.06,395.31 2056.86,393.08 2057.67,390.87 2058.47,388.71 2059.28,386.57 2060.09,384.47 2060.89,382.41 2061.70,380.38 2062.50,378.39 2063.30,376.43 2064.11,374.51 2064.91,372.63 2065.72,370.78 2066.53,368.97 2067.33,367.19 2068.14,365.45 2068.94,363.75 2069.74,362.09 2070.55,360.47 2071.36,358.88 2072.16,357.33 2072.97,355.82 2073.77,354.34 2074.57,352.91 2075.38,351.51 2076.18,350.16 2076.99,348.84 2077.80,347.56 2078.60,346.32 2079.40,345.12 2080.21,343.96 2081.01,342.84 2081.82,341.75 2082.62,340.71 2083.43,339.71 2084.24,338.75 2085.04,337.82 2085.85,336.94 2086.65,336.10 2087.45,335.30 2088.26,334.54 2089.07,333.82 2089.87,333.14 2090.68,332.50 2091.48,331.91 2092.28,331.35 2093.09,330.83 2093.89,330.36 2094.70,329.93 2095.51,329.53 2096.31,329.18 2097.11,328.87 2097.92,328.60 2098.72,328.38 2099.53,328.19 2100.34,328.05 2101.14,327.94 2101.94,327.88 2102.75,327.86 2103.56,327.88 2104.36,327.94 2105.16,328.05 2105.97,328.19 2106.78,328.38 2107.58,328.60 2108.39,328.87 2109.19,329.18 2109.99,329.53 2110.80,329.93 2111.61,330.36 2112.41,330.83 2113.22,331.35 2114.02,331.91 2114.82,332.50 2115.63,333.14 2116.43,333.82 2117.24,334.54 2118.05,335.30 2118.85,336.10 2119.65,336.94 2120.46,337.82 2121.26,338.75 2122.07,339.71 2122.88,340.71 2123.68,341.75 2124.49,342.84 2125.29,343.96 2126.10,345.12 2126.90,346.32 2127.70,347.56 2128.51,348.84 2129.32,350.16 2130.12,351.51 2130.93,352.91 2131.73,354.34 2132.53,355.82 2133.34,357.33 2134.14,358.88 2134.95,360.47 2135.76,362.09 2136.56,363.75 2137.36,365.45 2138.17,367.19 2138.97,368.97 2139.78,370.78 2140.59,372.63 2141.39,374.51 2142.20,376.43 2143.00,378.39 2143.80,380.38 2144.61,382.41 2145.41,384.47 2146.22,386.57 2147.03,388.71 2147.83,390.87 2148.64,393.08 2149.44,395.31 2150.24,397.58 2151.05,399.89 2151.86,402.23 2152.66,404.60 2153.47,407.00 2154.27,409.44 2155.07,411.91 2155.88,414.41 2156.68,416.94 2157.49,419.51 2158.30,422.11 2159.10,424.73 2159.91,427.39 2160.71,430.08 2161.51,432.80 2162.32,435.55 2163.12,438.32 2163.93,441.13 2164.74,443.97 2165.54,446.83 2166.34,449.73 2167.15,452.65 2167.95,455.60 2168.76,458.57 2169.57,461.58 2170.37,464.61 2171.18,467.66 2171.98,470.74 2172.78,473.85 2173.59,476.99 2174.39,480.14 2175.20,483.33 2176.01,486.53 2176.81,489.77 2177.61,493.02 2178.42,496.30 2179.22,499.60 2180.03,502.92 2180.84,506.27 2181.64,509.64 2182.45,513.03 2183.25,516.44 2184.05,519.87 2184.86,523.32 2185.66,526.79 2186.47,530.28 2187.28,533.79 2188.08,537.32 2188.89,540.86 2189.69,544.43 2190.49,548.01 2191.30,551.61 2192.11,555.23 2192.91,558.86 2193.72,562.51 2194.52,566.17 2195.32,569.85 2196.13,573.55 2196.93,577.25 2197.74,580.98 2198.55,584.71 2199.35,588.46 2200.15,592.23 2200.96,596.00 2201.76,599.79 2202.57,603.59 2203.38,607.40 2204.18,611.22 2204.99,615.05 2205.79,618.89 2206.60,622.74 2207.40,626.60 2208.20,630.46 2209.01,634.34 2209.82,638.22 2210.62,642.11 2211.43,646.01 2212.23,649.91 2213.03,653.82 2213.84,657.74 2214.64,661.66 2215.45,665.59 2216.26,669.52 2217.06,673.45 2217.86,677.39 2218.67,681.33 2219.47,685.27 2220.28,689.22 2221.09,693.16 2221.89,697.11 2222.69,701.06 2223.50,705.01 2224.31,708.96 2225.11,712.91 2225.91,716.86 2226.72,720.80 2227.53,724.75 2228.33,728.69 2229.14,732.63 2229.94,736.57 2230.74,740.50 2231.55,744.43 2232.36,748.36 2233.16,752.28 2233.97,756.20 2234.77,760.11 2235.57,764.01 2236.38,767.91 2237.18,771.80 2237.99,775.68 2238.80,779.56 2239.60,783.42 2240.40,787.28 2241.21,791.13 2242.01,794.97 2242.82,798.80 2243.62,802.62 2244.43,806.43 2245.24,810.23 2246.04,814.02 2246.85,817.79 2247.65,821.56 2248.45,825.31 2249.26,829.04 2250.07,832.77 2250.87,836.47 2251.68,840.17 2252.48,843.85 2253.28,847.51 2254.09,851.16 2254.89,854.79 2255.70,858.41 2256.51,862.01 2257.31,865.59 2258.11,869.16 2258.92,872.70 2259.72,876.23 2260.53,879.74 2261.34,883.23 2262.14,886.70 2262.95,890.15 2263.75,893.58 2264.55,896.99 2265.36,900.38 2266.16,903.75 2266.97,907.10 2267.78,910.42 2268.58,913.72 2269.39,917.00 2270.19,920.25 2270.99,923.49 2271.80,926.69 2272.61,929.88 2273.41,933.03 2274.22,936.17 2275.02,939.28 2275.82,942.36 2276.63,945.41 2277.43,948.44 2278.24,951.45 2279.05,954.42 2279.85,957.37 2280.66,960.29 2281.46,963.19 2282.26,966.05 2283.07,968.89 2283.88,971.70 2284.68,974.47 2285.49,977.22 2286.29,979.94 2287.09,982.63 2287.90,985.29 2288.70,987.91 2289.51,990.51 2290.32,993.08 2291.12,995.61 2291.93,998.11 2292.73,1000.58 2293.53,1003.02 2294.34,1005.42 2295.14,1007.79 2295.95,1010.13 2296.76,1012.44 2297.56,1014.71 2298.36,1016.94 2299.17,1019.15 2299.97,1021.31 2300.78,1023.45 2301.59,1025.55 2302.39,1027.61 2303.20,1029.64 2304.00,1031.63 2304.80,1033.59 2305.61,1035.51 2306.41,1037.39 2307.22,1039.24 2308.03,1041.05 2308.83,1042.83 2309.64,1044.57 2310.44,1046.27 2311.24,1047.93 2312.05,1049.55 2312.86,1051.14 2313.66,1052.69 2314.47,1054.20 2315.27,1055.68 2316.07,1057.11 2316.88,1058.51 2317.68,1059.86 2318.49,1061.18 2319.30,1062.46 2320.10,1063.70 2320.90,1064.90 2321.71,1066.06 2322.51,1067.18 2323.32,1068.27 2324.12,1069.31 2324.93,1070.31 2325.74,1071.27 2326.54,1072.20 2327.35,1073.08 2328.15,1073.92 2328.95,1074.72 2329.76,1075.48 2330.57,1076.20 2331.37,1076.88 2332.18,1077.52 2332.98,1078.11 2333.78,1078.67 2334.59,1079.19 2335.39,1079.66 2336.20,1080.09 2337.01,1080.49 2337.81,1080.84 2338.61,1081.15 2339.42,1081.42 2340.22,1081.64 2341.03,1081.83 2341.84,1081.97 2342.64,1082.08 2343.44,1082.14 2344.25,1082.16 2345.06,1082.14 2345.86,1082.08 2346.66,1081.97 2347.47,1081.83 2348.28,1081.64 2349.08,1081.42 2349.89,1081.15 2350.69,1080.84 2351.49,1080.49 2352.30,1080.09 2353.11,1079.66 2353.91,1079.19 2354.72,1078.67 2355.52,1078.11 2356.32,1077.52 2357.13,1076.88 2357.93,1076.20 2358.74,1075.48 2359.55,1074.72 2360.35,1073.92 2361.15,1073.08 2361.96,1072.20 2362.76,1071.27 2363.57,1070.31 2364.38,1069.31 2365.18,1068.27 2365.99,1067.18 2366.79,1066.06 2367.60,1064.90 2368.40,1063.70 2369.20,1062.46 2370.01,1061.18 2370.82,1059.86 2371.62,1058.51 2372.43,1057.11 2373.23,1055.68 2374.03,1054.20 2374.84,1052.69 2375.64,1051.14 2376.45,1049.55 2377.26,1047.93 2378.06,1046.27 2378.86,1044.57 2379.67,1042.83 2380.47,1041.05 2381.28,1039.24 2382.09,1037.39 2382.89,1035.51 2383.70,1033.59 2384.50,1031.63 2385.30,1029.64 2386.11,1027.61 2386.91,1025.55 2387.72,1023.45 2388.53,1021.31 2389.33,1019.15 2390.14,1016.94 2390.94,1014.71 2391.74,1012.44 2392.55,1010.13 2393.36,1007.79 2394.16,1005.42 2394.97,1003.02 2395.77,1000.58 2396.57,998.11 2397.38,995.61 2398.18,993.08 2398.99,990.51 2399.80,987.91 2400.60,985.29 2401.41,982.63 2402.21,979.94 2403.01,977.22 2403.82,974.47 2404.62,971.70 2405.43,968.89 2406.24,966.05 2407.04,963.19 2407.84,960.29 2408.65,957.37 2409.45,954.42 2410.26,951.45 2411.07,948.44 2411.87,945.41 2412.68,942.36 2413.48,939.28 2414.28,936.17 2415.09,933.03 2415.89,929.88 2416.70,926.69 2417.51,923.49 2418.31,920.25 2419.11,917.00 2419.92,913.72 2420.72,910.42 2421.53,907.10 2422.34,903.75 2423.14,900.38 2423.95,896.99 2424.75,893.59 2425.55,890.15 2426.36,886.70 2427.16,883.23 2427.97,879.74 2428.78,876.23 2429.58,872.70 2430.39,869.16 2431.19,865.59 2431.99,862.01 2432.80,858.41 2433.61,854.79 2434.41,851.16 2435.22,847.51 2436.02,843.85 2436.82,840.17 2437.63,836.47 2438.43,832.77 2439.24,829.04 2440.05,825.31 2440.85,821.56 2441.65,817.79 2442.46,814.02 2443.26,810.23 2444.07,806.43 2444.88,802.62 2445.68,798.80 2446.49,794.97 2447.29,791.13 2448.10,787.28 2448.90,783.42 2449.70,779.56 2450.51,775.68 2451.32,771.80 2452.12,767.91 2452.93,764.01 2453.73,760.11 2454.53,756.20 2455.34,752.28 2456.14,748.36 2456.95,744.43 2457.76,740.50 2458.56,736.57 2459.36,732.63 2460.17,728.69 2460.97,724.75 2461.78,720.80 2462.59,716.86 2463.39,712.91 2464.19,708.96 2465.00,705.01" fill="none" stroke="#00dd00" stroke-width="4" stroke-linejoin="round"/></svg>
<div style="position:absolute;left:1432.71px;top:162.20px;font:400 28px/1 'Liberation Sans',sans-serif;color:#000;white-space:pre;transform-origin:0 0;transform:scaleX(0.9217);">6</div>
<div style="position:absolute;left:1432.99px;top:313.06px;font:400 28px/1 'Liberation Sans',sans-serif;color:#000;white-space:pre;transform-origin:0 0;transform:scaleX(0.9023);">5</div>
<div style="position:absolute;left:1433.52px;top:463.92px;font:400 28px/1 'Liberation Sans',sans-serif;color:#000;white-space:pre;transform-origin:0 0;transform:scaleX(0.8487);">4</div>
<div style="position:absolute;left:1432.99px;top:614.78px;font:400 28px/1 'Liberation Sans',sans-serif;color:#000;white-space:pre;transform-origin:0 0;transform:scaleX(0.9023);">3</div>
<div style="position:absolute;left:1432.68px;top:765.64px;font:400 28px/1 'Liberation Sans',sans-serif;color:#000;white-space:pre;transform-origin:0 0;transform:scaleX(0.9419);">2</div>
<div style="position:absolute;left:1431.93px;top:916.50px;font:400 28px/1 'Liberation Sans',sans-serif;color:#000;white-space:pre;transform-origin:0 0;transform:scaleX(0.9852);">1</div>
<div style="position:absolute;left:1433.00px;top:1067.36px;font:400 28px/1 'Liberation Sans',sans-serif;color:#000;white-space:pre;transform-origin:0 0;transform:scaleX(0.8929);">0</div>
<div style="position:absolute;left:1430.88px;top:1218.22px;font:400 28px/1 'Liberation Sans',sans-serif;color:#000;white-space:pre;transform-origin:0 0;transform:scaleX(0.8929);">-1</div>
<div style="position:absolute;left:1480.45px;top:1272.55px;font:400 27px/1 'Liberation Sans',sans-serif;color:#000;white-space:pre;transform-origin:0 0;transform:scaleX(0.9717);">0.0</div>
<div style="position:absolute;left:1718.50px;top:1272.55px;font:400 27px/1 'Liberation Sans',sans-serif;color:#000;white-space:pre;transform-origin:0 0;transform:scaleX(1.0288);">.25</div>
<div style="position:absolute;left:1968.15px;top:1272.55px;font:400 27px/1 'Liberation Sans',sans-serif;color:#000;white-space:pre;transform-origin:0 0;transform:scaleX(1.0507);">.5</div>
<div style="position:absolute;left:2202.50px;top:1272.55px;font:400 27px/1 'Liberation Sans',sans-serif;color:#000;white-space:pre;transform-origin:0 0;transform:scaleX(1.0288);">.75</div>
<div style="position:absolute;left:2445.70px;top:1272.55px;font:400 27px/1 'Liberation Sans',sans-serif;color:#000;white-space:pre;transform-origin:0 0;transform:scaleX(0.9375);">1.0</div>
<div style="position:absolute;left:1925.16px;top:1303.20px;font:400 28px/1 'Liberation Sans',sans-serif;color:#000;white-space:pre;transform-origin:0 0;transform:scaleX(1.0405);">time (us)</div>
<div style="position:absolute;left:1393.65px;top:740.15px;transform-origin:0 0;transform:rotate(-90deg) scaleX(0.9955);font:400 31px/1 'Liberation Sans',sans-serif;color:#000;white-space:pre">V (V)</div>
<svg width="0" height="0" style="position:absolute"><defs><linearGradient id="cbg" x1="0" y1="0" x2="0" y2="1"><stop offset="0" stop-color="#fff"/><stop offset="1" stop-color="#e0e0e0"/></linearGradient><linearGradient id="pbg" x1="0" y1="0" x2="0" y2="1"><stop offset="0" stop-color="#f8f8f8"/><stop offset="1" stop-color="#c8c8c8"/></linearGradient></defs></svg>
<div style="position:absolute;left:3px;top:244px;width:1386px;height:1013px;box-shadow:0 6px 22px rgba(0,0,0,0.32)"></div>
<div style="position:absolute;left:3px;top:244px;width:1386px;height:1013px;background:#8ec4f2;"></div>
<div style="position:absolute;left:4px;top:245px;width:1384px;height:61px;background:#fff;"></div>
<div style="position:absolute;left:20px;top:259px;width:32px;height:32px;background:#ececec;"></div>
<div style="position:absolute;left:26.00px;top:261.50px;font:400 10px/1 'Liberation Sans',sans-serif;color:#666;white-space:pre;transform-origin:0 0;transform:scaleX(0.9926);">ADE</div>
<div style="position:absolute;left:31.92px;top:272.50px;font:400 10px/1 'Liberation Sans',sans-serif;color:#666;white-space:pre;transform-origin:0 0;transform:scaleX(1.3483);">L</div>
<div style="position:absolute;left:28.24px;top:281.50px;font:400 10px/1 'Liberation Sans',sans-serif;color:#666;white-space:pre;transform-origin:0 0;transform:scaleX(1.2727);">(1)</div>
<div style="position:absolute;left:57.58px;top:263.78px;font:400 24.5px/1 'Liberation Sans',sans-serif;color:#111;white-space:pre;transform-origin:0 0;transform:scaleX(0.9893);">Virtuoso®</div>
<div style="position:absolute;left:174.70px;top:263.78px;font:400 24.5px/1 'Liberation Sans',sans-serif;color:#111;white-space:pre;transform-origin:0 0;transform:scaleX(0.9759);">Analog Design Environment (1)</div>
<div style="position:absolute;left:514.71px;top:263.78px;font:400 24.5px/1 'Liberation Sans',sans-serif;color:#111;white-space:pre;transform-origin:0 0;transform:scaleX(1.1662);">-</div>
<div style="position:absolute;left:530.55px;top:263.78px;font:400 24.5px/1 'Liberation Sans',sans-serif;color:#111;white-space:pre;transform-origin:0 0;transform:scaleX(0.9131);">lab2 sim_Ideal_ADC_DAC</div>
<div style="position:absolute;left:801.01px;top:263.78px;font:400 24.5px/1 'Liberation Sans',sans-serif;color:#111;white-space:pre;transform-origin:0 0;transform:scaleX(0.9419);">schematic@csimcluster.ee....</div>
<div style="position:absolute;left:1147px;top:273px;width:20px;height:2px;background:#111;"></div>
<div style="position:absolute;left:1238px;top:265px;width:16px;height:16px;border:2px solid #111"></div>
<svg style="position:absolute;left:1329px;top:262px" width="24" height="24"><path d="M2 2 L22 22 M22 2 L2 22" stroke="#111" stroke-width="2.2"/></svg>
<div style="position:absolute;left:4px;top:306px;width:1384px;height:60px;background:#f2f2f2;"></div>
<div style="position:absolute;left:4px;top:306px;width:1384px;height:4px;background:linear-gradient(#d4d4d4,#f2f2f2);"></div>
<div style="position:absolute;left:28.92px;top:325.72px;font:400 23.5px/1 'Liberation Sans',sans-serif;color:#3a3a3a;white-space:pre;transform-origin:0 0;transform:scaleX(1.1062);">Launch</div>
<div style="position:absolute;left:31px;top:348px;width:13px;height:2px;background:#333;"></div>
<div style="position:absolute;left:138.89px;top:325.72px;font:400 23.5px/1 'Liberation Sans',sans-serif;color:#3a3a3a;white-space:pre;transform-origin:0 0;transform:scaleX(1.0450);">Session</div>
<div style="position:absolute;left:150px;top:348px;width:17px;height:2px;background:#333;"></div>
<div style="position:absolute;left:250.92px;top:325.72px;font:400 23.5px/1 'Liberation Sans',sans-serif;color:#3a3a3a;white-space:pre;transform-origin:0 0;transform:scaleX(1.0179);">Setup</div>
<div style="position:absolute;left:287px;top:348px;width:15px;height:2px;background:#333;"></div>
<div style="position:absolute;left:339.90px;top:325.72px;font:400 23.5px/1 'Liberation Sans',sans-serif;color:#3a3a3a;white-space:pre;transform-origin:0 0;transform:scaleX(1.0604);">Analyses</div>
<div style="position:absolute;left:338px;top:348px;width:18px;height:2px;background:#333;"></div>
<div style="position:absolute;left:467.87px;top:325.72px;font:400 23.5px/1 'Liberation Sans',sans-serif;color:#3a3a3a;white-space:pre;transform-origin:0 0;transform:scaleX(1.0777);">Variables</div>
<div style="position:absolute;left:466px;top:348px;width:18px;height:2px;background:#333;"></div>
<div style="position:absolute;left:596.71px;top:325.72px;font:400 23.5px/1 'Liberation Sans',sans-serif;color:#3a3a3a;white-space:pre;transform-origin:0 0;transform:scaleX(1.0290);">Outputs</div>
<div style="position:absolute;left:596px;top:348px;width:20px;height:2px;background:#333;"></div>
<div style="position:absolute;left:705.90px;top:325.72px;font:400 23.5px/1 'Liberation Sans',sans-serif;color:#3a3a3a;white-space:pre;transform-origin:0 0;transform:scaleX(1.0396);">Simulation</div>
<div style="position:absolute;left:706px;top:348px;width:17px;height:2px;background:#333;"></div>
<div style="position:absolute;left:842.86px;top:325.72px;font:400 23.5px/1 'Liberation Sans',sans-serif;color:#3a3a3a;white-space:pre;transform-origin:0 0;transform:scaleX(1.0308);">Results</div>
<div style="position:absolute;left:844px;top:348px;width:19px;height:2px;background:#333;"></div>
<div style="position:absolute;left:947.49px;top:325.72px;font:400 23.5px/1 'Liberation Sans',sans-serif;color:#3a3a3a;white-space:pre;transform-origin:0 0;transform:scaleX(1.0900);">Tools</div>
<div style="position:absolute;left:947px;top:348px;width:19px;height:2px;background:#333;"></div>
<div style="position:absolute;left:1030.83px;top:325.72px;font:400 23.5px/1 'Liberation Sans',sans-serif;color:#3a3a3a;white-space:pre;transform-origin:0 0;transform:scaleX(1.1018);">Help</div>
<div style="position:absolute;left:1032px;top:348px;width:19px;height:2px;background:#333;"></div>
<div style="position:absolute;left:1221.04px;top:322.45px;font:700 37px/1 'Liberation Sans',sans-serif;color:#222;white-space:pre;transform-origin:0 0;transform:scaleX(0.6520);">c</div>
<div style="position:absolute;left:1239.21px;top:322.45px;font:700 37px/1 'Liberation Sans',sans-serif;color:#222;white-space:pre;transform-origin:0 0;transform:scaleX(0.7072);">a</div>
<div style="position:absolute;left:1262.91px;top:322.45px;font:700 37px/1 'Liberation Sans',sans-serif;color:#222;white-space:pre;transform-origin:0 0;transform:scaleX(0.7332);">d</div>
<div style="position:absolute;left:1284.83px;top:322.45px;font:700 37px/1 'Liberation Sans',sans-serif;color:#222;white-space:pre;transform-origin:0 0;transform:scaleX(0.7883);">e</div>
<div style="position:absolute;left:1305.90px;top:322.45px;font:700 37px/1 'Liberation Sans',sans-serif;color:#222;white-space:pre;transform-origin:0 0;transform:scaleX(0.8749);">n</div>
<div style="position:absolute;left:1330.83px;top:322.45px;font:700 37px/1 'Liberation Sans',sans-serif;color:#222;white-space:pre;transform-origin:0 0;transform:scaleX(0.6576);">c</div>
<div style="position:absolute;left:1348.83px;top:322.45px;font:700 37px/1 'Liberation Sans',sans-serif;color:#222;white-space:pre;transform-origin:0 0;transform:scaleX(0.7883);">e</div>
<div style="position:absolute;left:1242px;top:326px;width:12px;height:4px;background:#dd2a30;"></div>
<div style="position:absolute;left:4px;top:366px;width:1384px;height:8px;background:#cc0000;"></div>
<div style="position:absolute;left:4px;top:374px;width:1384px;height:77px;background:#f0f0f0;"></div>
<div style="position:absolute;left:5px;top:387px;width:1383px;height:61px;border-radius:6px 0 6px 6px;background:linear-gradient(#f0f0f0,#dadada 40%,#b6b6b6);border-bottom:3px solid #8c8c8c"></div>
<div style="position:absolute;left:17px;top:401px;width:2px;height:35px;background:#8a8a8a"></div><div style="position:absolute;left:22px;top:401px;width:2px;height:35px;background:#8a8a8a"></div><div style="position:absolute;left:27px;top:401px;width:2px;height:35px;background:#8a8a8a"></div><div style="position:absolute;left:160px;top:401px;width:2px;height:35px;background:#6a6a6a;box-shadow:1px 0 0 #fff"></div><div style="position:absolute;left:340px;top:401px;width:2px;height:35px;background:#6a6a6a;box-shadow:1px 0 0 #fff"></div><svg style="position:absolute;left:37px;top:394px;overflow:visible" width="42" height="44"><rect x="12" y="2" width="4" height="14" fill="#5a78b8"/><rect x="22" y="0" width="11" height="14" rx="4" fill="#4a64a8"/><path d="M1 12 H17 L19 15 H40 V22 H1 Z" fill="#f0a030" stroke="#c07020" stroke-width="1"/><rect x="8" y="14" width="30" height="6" fill="#f8f0e8" stroke="#c04040" stroke-width="1"/><path d="M2 44 V14 L6 12 V42 Z" fill="#e89020"/><path d="M4 43 L8 24 H40 L36 43 Z" fill="#f8f8f8" stroke="#888" stroke-width="2"/></svg><svg style="position:absolute;left:97px;top:401px;overflow:visible" width="48" height="40"><path d="M16 2 H25 L28 6 H40 V30 H16 Z" fill="#f4dc70" stroke="#c8a010" stroke-width="2"/><path d="M20 9 H42 V28 H20 Z" fill="#fae890" stroke="#c8a010" stroke-width="2"/><polygon points="23.50,26.00 23.41,27.34 26.69,28.84 25.49,32.08 22.02,31.09 20.72,32.72 20.72,32.72 19.70,33.60 20.97,36.98 17.82,38.43 16.07,35.27 14.00,35.50 14.00,35.50 12.66,35.41 11.16,38.69 7.92,37.49 8.91,34.02 7.28,32.72 7.28,32.72 6.40,31.70 3.02,32.97 1.57,29.82 4.73,28.07 4.50,26.00 4.50,26.00 4.59,24.66 1.31,23.16 2.51,19.92 5.98,20.91 7.28,19.28 7.28,19.28 8.30,18.40 7.03,15.02 10.18,13.57 11.93,16.73 14.00,16.50 14.00,16.50 15.34,16.59 16.84,13.31 20.08,14.51 19.09,17.98 20.72,19.28 20.72,19.28 21.60,20.30 24.98,19.03 26.43,22.18 23.27,23.93 23.50,26.00" fill="#c4c0c0" stroke="#7a7a7a" stroke-width="1.5"/><circle cx="14" cy="26" r="4" fill="#e8e8e8" stroke="#8a8a8a" stroke-width="1.5"/></svg><svg style="position:absolute;left:185px;top:402px;overflow:visible" width="38" height="38"><rect x="7" y="1" width="8" height="28" rx="4" fill="#f4f4f4" stroke="#999" stroke-width="2"/><rect x="9" y="17" width="5" height="14" fill="#d00010"/><circle cx="11" cy="31" r="6.5" fill="#d00010" stroke="#900" stroke-width="1"/><circle cx="20" cy="5" r="2.5" fill="none" stroke="#000" stroke-width="1.8"/><path d="M35 5 H27 V13 H35" fill="none" stroke="#000" stroke-width="3"/></svg><div style="position:absolute;left:235px;top:397px;width:95px;height:39px;background:#fff;border:1.5px solid #b8b8b8;border-radius:4px"></div><svg style="position:absolute;left:358px;top:402px;overflow:visible" width="36" height="40"><path d="M12 3 H27 L34 10 V32 H12 Z" fill="#f2d888" stroke="#c89838" stroke-width="2"/><polygon points="19.00,28.00 18.92,29.13 21.74,30.40 20.72,33.15 17.75,32.29 16.66,33.66 16.66,33.66 15.80,34.40 16.89,37.29 14.23,38.51 12.75,35.81 11.00,36.00 11.00,36.00 9.87,35.92 8.60,38.74 5.85,37.72 6.71,34.75 5.34,33.66 5.34,33.66 4.60,32.80 1.71,33.89 0.49,31.23 3.19,29.75 3.00,28.00 3.00,28.00 3.08,26.87 0.26,25.60 1.28,22.85 4.25,23.71 5.34,22.34 5.34,22.34 6.20,21.60 5.11,18.71 7.77,17.49 9.25,20.19 11.00,20.00 11.00,20.00 12.13,20.08 13.40,17.26 16.15,18.28 15.29,21.25 16.66,22.34 16.66,22.34 17.40,23.20 20.29,22.11 21.51,24.77 18.81,26.25 19.00,28.00" fill="#c4c0c0" stroke="#7a7a7a" stroke-width="1.5"/><circle cx="11" cy="28" r="3" fill="#e8e8e8" stroke="#8a8a8a" stroke-width="1.5"/><circle cx="11" cy="28" r="3" fill="#d8b040"/></svg><svg style="position:absolute;left:422px;top:397px;overflow:visible" width="42" height="42"><path d="M2.5 1 V6 L11 14.5 M14 7 V33 M11 26 L2.5 34 V39 M14 20 H23" stroke="#b82828" stroke-width="2.2" fill="none"/><rect x="22.5" y="13.5" width="15" height="13" fill="#3e5a94" stroke="#5a74a8" stroke-width="1.4"/><rect x="37" y="16" width="3" height="8" fill="#6a84b8"/><path d="M25 16 H36" stroke="#b8c8e8" stroke-width="1.2"/></svg><svg style="position:absolute;left:489px;top:396px;overflow:visible" width="38" height="42"><path d="M10 14 L15 2 L26 4 L34 17 L32 20 Z" fill="#d8d8d8" stroke="#7a7a7a" stroke-width="1.6"/><rect x="2.5" y="15.5" width="29" height="22" fill="#ececec" stroke="#777" stroke-width="2.6"/><path d="M7 19.5 H21 M7 23.5 H21 M7 27.5 H28 M7 31.5 H28" stroke="#aaa" stroke-width="1.8"/><path d="M23.5 15 V21.5 H31" stroke="#777" stroke-width="2.2" fill="#fff"/></svg><svg style="position:absolute;left:556px;top:402px;overflow:visible" width="40" height="40"><defs><linearGradient id="fo" x1="0" y1="0" x2="1" y2="1"><stop offset="0" stop-color="#f4b040"/><stop offset="1" stop-color="#e07810"/></linearGradient></defs><rect x="1" y="1" width="30" height="31" fill="#6f88cc" stroke="#3f5ea8" stroke-width="2.2"/><rect x="5" y="2.5" width="21" height="14" fill="#fafafa"/><rect x="8" y="19" width="17" height="12" fill="#e6e6e6"/><rect x="10" y="20" width="4" height="10" fill="#7088cc"/><path d="M13 18 L33 -2 L37 2 L17 22 Z" fill="#f4e020" stroke="#a05010" stroke-width="1.3"/><path d="M33 -2 L37 2 L39 -1 L35 -5 Z" fill="#e07080" stroke="#802030" stroke-width="1"/><path d="M13 18 L17 22 L10 24 Z" fill="#f8e0d0"/><path d="M10 24 L12 21.5 L12.5 23.5 Z" fill="#000"/></svg><svg style="position:absolute;left:615px;top:400px;overflow:visible" width="42" height="32"><path d="M1.5 1.5 H14 L16 4.5 H34.5 V26 H1.5 Z" fill="url(#fo)" stroke="#e07a10" stroke-width="2"/><path d="M3 4.5 H13 L15 7.5 H32 V11" fill="none" stroke="#fff4d8" stroke-width="1.5"/><path d="M7 13 H39.5 L37.5 29 H4.5 Z" fill="#f6f6f6" stroke="#8a8e92" stroke-width="2"/></svg>
<div style="position:absolute;left:242.46px;top:405.15px;font:400 25px/1 'Liberation Sans',sans-serif;color:#222;white-space:pre;transform-origin:0 0;transform:scaleX(0.9941);">27</div>
<div style="position:absolute;left:4px;top:451px;width:506px;height:721px;background:#efefef;"></div>
<div style="position:absolute;left:4px;top:451px;width:503px;height:3px;background:#fff;"></div>
<div style="position:absolute;left:4px;top:451px;width:4px;height:717px;background:#fff;"></div>
<div style="position:absolute;left:506px;top:451px;width:2px;height:721px;background:#555;"></div>
<div style="position:absolute;left:508px;top:451px;width:2px;height:721px;background:#000;"></div>
<div style="position:absolute;left:4px;top:1168px;width:506px;height:2px;background:#555;"></div>
<div style="position:absolute;left:4px;top:1170px;width:506px;height:2px;background:#000;"></div>
<div style="position:absolute;left:20.94px;top:476.02px;font:400 23.5px/1 'Liberation Sans',sans-serif;color:#3a3a3a;white-space:pre;transform-origin:0 0;transform:scaleX(1.0970);">Design Variables</div>
<div style="position:absolute;left:22px;top:514px;width:467px;height:2px;background:#555;"></div>
<div style="position:absolute;left:24px;top:516px;width:465px;height:2px;background:#000;"></div>
<div style="position:absolute;left:22px;top:514px;width:2px;height:614px;background:#555;"></div>
<div style="position:absolute;left:24px;top:516px;width:2px;height:610px;background:#000;"></div>
<div style="position:absolute;left:26px;top:518px;width:462px;height:608px;background:#fff;"></div>
<div style="position:absolute;left:26px;top:518px;width:461px;height:32px;background:linear-gradient(#cbcbcb,#a5a5a5);"></div>
<div style="position:absolute;left:228px;top:521px;width:3px;height:29px;background:#888;"></div>
<div style="position:absolute;left:485px;top:521px;width:2px;height:29px;background:#888;"></div>
<div style="position:absolute;left:97.37px;top:521.02px;font:400 23.5px/1 'Liberation Sans',sans-serif;color:#3a3a3a;white-space:pre;transform-origin:0 0;transform:scaleX(1.0286);">Name</div>
<div style="position:absolute;left:329.67px;top:521.02px;font:400 23.5px/1 'Liberation Sans',sans-serif;color:#3a3a3a;white-space:pre;transform-origin:0 0;transform:scaleX(1.1032);">Value</div>
<div style="position:absolute;left:488px;top:516px;width:4px;height:614px;background:#f8f8f8;"></div>
<div style="position:absolute;left:22px;top:1126px;width:470px;height:4px;background:#f8f8f8;"></div>
<div style="position:absolute;left:36.76px;top:1133.62px;font:400 23.5px/1 'Liberation Sans',sans-serif;color:#3a3a3a;white-space:pre;transform-origin:0 0;transform:scaleX(1.0578);">&gt; Results in ...j1/cadence/simulation/sim_I</div>
<div style="position:absolute;left:510px;top:451px;width:12px;height:721px;background:linear-gradient(90deg,#d6d8dc,#c8cace 50%,#b2b4ba);"></div>
<div style="position:absolute;left:522px;top:451px;width:799px;height:320px;background:#efefef;"></div>
<div style="position:absolute;left:522px;top:451px;width:799px;height:37px;background:linear-gradient(#fdfdfd,#dcdcdc 45%,#a8a8a8);"></div>
<div style="position:absolute;left:522px;top:451px;width:2px;height:43px;background:#555;"></div>
<div style="position:absolute;left:1319px;top:451px;width:2px;height:40px;background:#555;"></div>
<div style="position:absolute;left:522px;top:450px;width:799px;height:2px;background:#555;"></div>
<div style="position:absolute;left:522px;top:488px;width:799px;height:4px;background:#555;"></div>
<div style="position:absolute;left:524px;top:492px;width:795px;height:2px;background:#000;"></div>
<div style="position:absolute;left:547.19px;top:457.72px;font:700 23.5px/1 'Liberation Sans',sans-serif;color:#3a3a3a;white-space:pre;transform-origin:0 0;transform:scaleX(1.0419);">Analyses</div>
<svg style="position:absolute;left:1232px;top:454px" width="27" height="27"><circle cx="13.5" cy="13.5" r="12.5" fill="url(#pbg)" stroke="#c4c4c4" stroke-width="1.5"/><path d="M8.5 9 Q9 5 13.5 5 Q18.5 5 18.5 9 Q18.5 12 14 14 V17" stroke="#000" stroke-width="2.6" fill="none"/><rect x="12.5" y="19.5" width="3" height="3" fill="#000"/></svg><svg style="position:absolute;left:1262px;top:454px" width="27" height="27"><circle cx="13.5" cy="13.5" r="12.5" fill="url(#pbg)" stroke="#c4c4c4" stroke-width="1.5"/><rect x="11" y="4.5" width="9" height="8" fill="none" stroke="#000" stroke-width="2.4"/><rect x="11" y="4" width="9" height="3" fill="#000"/><rect x="6" y="11" width="10" height="9.5" fill="#fff" stroke="#000" stroke-width="2.4"/><rect x="6" y="10" width="10" height="3" fill="#000"/></svg><svg style="position:absolute;left:1293px;top:454px" width="27" height="27"><circle cx="13.5" cy="13.5" r="12.5" fill="url(#pbg)" stroke="#c4c4c4" stroke-width="1.5"/><path d="M6.5 6.5 L20.5 20.5 M20.5 6.5 L6.5 20.5" stroke="#000" stroke-width="2.8"/></svg>
<div style="position:absolute;left:522px;top:494px;width:2px;height:277px;background:#555;"></div>
<div style="position:absolute;left:524px;top:494px;width:2px;height:277px;background:#000;"></div>
<div style="position:absolute;left:526px;top:494px;width:790px;height:277px;background:#fff;"></div>
<div style="position:absolute;left:526px;top:526px;width:18px;height:245px;background:#efefef;"></div>
<div style="position:absolute;left:526px;top:494px;width:790px;height:32px;background:linear-gradient(#cbcbcb,#a5a5a5);"></div>
<div style="position:absolute;left:652px;top:497px;width:2px;height:29px;background:#888;"></div>
<div style="position:absolute;left:748px;top:497px;width:2px;height:29px;background:#888;"></div>
<div style="position:absolute;left:1313px;top:497px;width:3px;height:29px;background:#888;"></div>
<div style="position:absolute;left:530px;top:522px;width:12px;height:2px;background:#888;"></div>
<div style="position:absolute;left:526px;top:526px;width:18px;height:39px;background:linear-gradient(#d0d0d0,#a8a8a8);"></div>
<div style="position:absolute;left:530px;top:563px;width:12px;height:2px;background:#888;"></div>
<div style="position:absolute;left:526px;top:564px;width:790px;height:2px;background:#cfcfcf;"></div>
<div style="position:absolute;left:653px;top:526px;width:2px;height:39px;background:#cfcfcf;"></div>
<div style="position:absolute;left:749px;top:526px;width:2px;height:39px;background:#cfcfcf;"></div>
<div style="position:absolute;left:571.88px;top:498.02px;font:400 23.5px/1 'Liberation Sans',sans-serif;color:#3a3a3a;white-space:pre;transform-origin:0 0;transform:scaleX(1.0983);">Type</div>
<div style="position:absolute;left:665.18px;top:498.02px;font:400 23.5px/1 'Liberation Sans',sans-serif;color:#3a3a3a;white-space:pre;transform-origin:0 0;transform:scaleX(1.0759);">Enable</div>
<div style="position:absolute;left:953.90px;top:497.82px;font:400 23.5px/1 'Liberation Sans',sans-serif;color:#3a3a3a;white-space:pre;transform-origin:0 0;transform:scaleX(1.0124);">Arguments</div>
<div style="position:absolute;left:528.72px;top:534.02px;font:400 23.5px/1 'Liberation Sans',sans-serif;color:#3a3a3a;white-space:pre;transform-origin:0 0;transform:scaleX(0.7239);">1</div>
<div style="position:absolute;left:549.63px;top:527.52px;font:400 23.5px/1 'Liberation Sans',sans-serif;color:#222;white-space:pre;transform-origin:0 0;transform:scaleX(1.0586);">tran</div>
<div style="position:absolute;left:758.58px;top:527.52px;font:400 23.5px/1 'Liberation Sans',sans-serif;color:#222;white-space:pre;transform-origin:0 0;transform:scaleX(1.0846);">0 1u</div>
<svg style="position:absolute;left:668px;top:532px" width="25" height="24"><rect x="0.5" y="0.5" width="24" height="23" rx="3" fill="url(#cbg)" stroke="#d0d0d0"/><rect x="2" y="20" width="21" height="2.5" fill="#444"/><polygon points="5,7 8,9 10,13 18,4 21,3 21,8 12,19 9,19 5,13" fill="#d00000"/></svg>
<div style="position:absolute;left:1316px;top:494px;width:5px;height:277px;background:#efefef;"></div>
<div style="position:absolute;left:522px;top:771px;width:799px;height:13px;background:linear-gradient(#d8dadc,#c4c6ca 50%,#b4b6ba);"></div>
<div style="position:absolute;left:522px;top:784px;width:799px;height:326px;background:#efefef;"></div>
<div style="position:absolute;left:522px;top:784px;width:799px;height:40px;background:linear-gradient(#fdfdfd,#dcdcdc 45%,#a8a8a8);"></div>
<div style="position:absolute;left:522px;top:784px;width:2px;height:44px;background:#555;"></div>
<div style="position:absolute;left:1319px;top:784px;width:2px;height:42px;background:#555;"></div>
<div style="position:absolute;left:522px;top:784px;width:799px;height:2px;background:#555;"></div>
<div style="position:absolute;left:522px;top:824px;width:799px;height:2px;background:#555;"></div>
<div style="position:absolute;left:524px;top:826px;width:795px;height:2px;background:#000;"></div>
<div style="position:absolute;left:548.21px;top:790.62px;font:700 23.5px/1 'Liberation Sans',sans-serif;color:#3a3a3a;white-space:pre;transform-origin:0 0;transform:scaleX(1.0565);">Outputs</div>
<svg style="position:absolute;left:1232px;top:788px" width="27" height="27"><circle cx="13.5" cy="13.5" r="12.5" fill="url(#pbg)" stroke="#c4c4c4" stroke-width="1.5"/><path d="M8.5 9 Q9 5 13.5 5 Q18.5 5 18.5 9 Q18.5 12 14 14 V17" stroke="#000" stroke-width="2.6" fill="none"/><rect x="12.5" y="19.5" width="3" height="3" fill="#000"/></svg><svg style="position:absolute;left:1262px;top:788px" width="27" height="27"><circle cx="13.5" cy="13.5" r="12.5" fill="url(#pbg)" stroke="#c4c4c4" stroke-width="1.5"/><rect x="11" y="4.5" width="9" height="8" fill="none" stroke="#000" stroke-width="2.4"/><rect x="11" y="4" width="9" height="3" fill="#000"/><rect x="6" y="11" width="10" height="9.5" fill="#fff" stroke="#000" stroke-width="2.4"/><rect x="6" y="10" width="10" height="3" fill="#000"/></svg><svg style="position:absolute;left:1293px;top:788px" width="27" height="27"><circle cx="13.5" cy="13.5" r="12.5" fill="url(#pbg)" stroke="#c4c4c4" stroke-width="1.5"/><path d="M6.5 6.5 L20.5 20.5 M20.5 6.5 L6.5 20.5" stroke="#000" stroke-width="2.8"/></svg>
<div style="position:absolute;left:522px;top:828px;width:2px;height:282px;background:#555;"></div>
<div style="position:absolute;left:524px;top:828px;width:2px;height:282px;background:#000;"></div>
<div style="position:absolute;left:526px;top:828px;width:790px;height:282px;background:#fff;"></div>
<div style="position:absolute;left:526px;top:859px;width:18px;height:251px;background:#efefef;"></div>
<div style="position:absolute;left:526px;top:828px;width:784px;height:31px;background:linear-gradient(#cbcbcb,#a5a5a5);"></div>
<div style="position:absolute;left:857px;top:831px;width:2px;height:28px;background:#888;"></div>
<div style="position:absolute;left:943px;top:831px;width:2px;height:28px;background:#888;"></div>
<div style="position:absolute;left:1015px;top:831px;width:2px;height:28px;background:#888;"></div>
<div style="position:absolute;left:1095px;top:831px;width:2px;height:28px;background:#888;"></div>
<div style="position:absolute;left:1307px;top:831px;width:3px;height:28px;background:#888;"></div>
<div style="position:absolute;left:1310px;top:828px;width:6px;height:31px;background:#efefef;"></div>
<div style="position:absolute;left:600.99px;top:830.82px;font:400 23.5px/1 'Liberation Sans',sans-serif;color:#3a3a3a;white-space:pre;transform-origin:0 0;transform:scaleX(1.0665);">Name/Signal/Expr</div>
<div style="position:absolute;left:872.57px;top:830.82px;font:400 23.5px/1 'Liberation Sans',sans-serif;color:#3a3a3a;white-space:pre;transform-origin:0 0;transform:scaleX(1.0875);">Value</div>
<div style="position:absolute;left:961.99px;top:830.82px;font:400 23.5px/1 'Liberation Sans',sans-serif;color:#3a3a3a;white-space:pre;transform-origin:0 0;transform:scaleX(1.0671);">Plot</div>
<div style="position:absolute;left:1030.75px;top:830.82px;font:400 23.5px/1 'Liberation Sans',sans-serif;color:#3a3a3a;white-space:pre;transform-origin:0 0;transform:scaleX(1.0862);">Save</div>
<div style="position:absolute;left:1128.76px;top:830.82px;font:400 23.5px/1 'Liberation Sans',sans-serif;color:#3a3a3a;white-space:pre;transform-origin:0 0;transform:scaleX(1.0744);">Save Options</div>
<div style="position:absolute;left:526px;top:859px;width:18px;height:40px;background:linear-gradient(#d0d0d0,#a8a8a8);"></div>
<div style="position:absolute;left:530px;top:859px;width:12px;height:2px;background:#999;"></div>
<div style="position:absolute;left:528.66px;top:867.52px;font:400 23.5px/1 'Liberation Sans',sans-serif;color:#3a3a3a;white-space:pre;transform-origin:0 0;transform:scaleX(0.7630);">1</div>
<div style="position:absolute;left:526px;top:898px;width:784px;height:2px;background:#cfcfcf;"></div>
<div style="position:absolute;left:857px;top:859px;width:2px;height:40px;background:#cfcfcf;"></div>
<div style="position:absolute;left:943px;top:859px;width:2px;height:40px;background:#cfcfcf;"></div>
<div style="position:absolute;left:1015px;top:859px;width:2px;height:40px;background:#cfcfcf;"></div>
<div style="position:absolute;left:1095px;top:859px;width:2px;height:40px;background:#cfcfcf;"></div>
<div style="position:absolute;left:1308px;top:859px;width:2px;height:40px;background:#cfcfcf;"></div>
<div style="position:absolute;left:551.67px;top:862.02px;font:400 23.5px/1 'Liberation Sans',sans-serif;color:#222;white-space:pre;transform-origin:0 0;transform:scaleX(1.0948);">Vout</div>
<div style="position:absolute;left:1104.59px;top:862.02px;font:400 23.5px/1 'Liberation Sans',sans-serif;color:#222;white-space:pre;transform-origin:0 0;transform:scaleX(1.0704);">allv</div>
<svg style="position:absolute;left:959px;top:867px" width="25" height="24"><rect x="0.5" y="0.5" width="24" height="23" rx="3" fill="url(#cbg)" stroke="#d0d0d0"/><rect x="2" y="20" width="21" height="2.5" fill="#444"/><polygon points="5,7 8,9 10,13 18,4 21,3 21,8 12,19 9,19 5,13" fill="#d00000"/></svg>
<svg style="position:absolute;left:1031px;top:867px" width="25" height="24"><rect x="0.5" y="0.5" width="24" height="23" rx="3" fill="url(#cbg)" stroke="#d0d0d0"/><rect x="2" y="20" width="21" height="2.5" fill="#444"/></svg>
<div style="position:absolute;left:526px;top:899px;width:18px;height:40px;background:linear-gradient(#d0d0d0,#a8a8a8);"></div>
<div style="position:absolute;left:530px;top:899px;width:12px;height:2px;background:#999;"></div>
<div style="position:absolute;left:529.14px;top:906.73px;font:400 23.5px/1 'Liberation Sans',sans-serif;color:#3a3a3a;white-space:pre;transform-origin:0 0;transform:scaleX(0.7295);">2</div>
<div style="position:absolute;left:526px;top:938px;width:784px;height:2px;background:#cfcfcf;"></div>
<div style="position:absolute;left:857px;top:899px;width:2px;height:40px;background:#cfcfcf;"></div>
<div style="position:absolute;left:943px;top:899px;width:2px;height:40px;background:#cfcfcf;"></div>
<div style="position:absolute;left:1015px;top:899px;width:2px;height:40px;background:#cfcfcf;"></div>
<div style="position:absolute;left:1095px;top:899px;width:2px;height:40px;background:#cfcfcf;"></div>
<div style="position:absolute;left:1308px;top:899px;width:2px;height:40px;background:#cfcfcf;"></div>
<div style="position:absolute;left:551.67px;top:902.02px;font:400 23.5px/1 'Liberation Sans',sans-serif;color:#222;white-space:pre;transform-origin:0 0;transform:scaleX(1.0992);">Vin</div>
<div style="position:absolute;left:1104.59px;top:902.02px;font:400 23.5px/1 'Liberation Sans',sans-serif;color:#222;white-space:pre;transform-origin:0 0;transform:scaleX(1.0704);">allv</div>
<svg style="position:absolute;left:959px;top:907px" width="25" height="24"><rect x="0.5" y="0.5" width="24" height="23" rx="3" fill="url(#cbg)" stroke="#d0d0d0"/><rect x="2" y="20" width="21" height="2.5" fill="#444"/><polygon points="5,7 8,9 10,13 18,4 21,3 21,8 12,19 9,19 5,13" fill="#d00000"/></svg>
<svg style="position:absolute;left:1031px;top:907px" width="25" height="24"><rect x="0.5" y="0.5" width="24" height="23" rx="3" fill="url(#cbg)" stroke="#d0d0d0"/><rect x="2" y="20" width="21" height="2.5" fill="#444"/></svg>
<div style="position:absolute;left:1316px;top:828px;width:5px;height:282px;background:#efefef;"></div>
<div style="position:absolute;left:522px;top:1110px;width:799px;height:62px;background:#efefef;"></div>
<div style="position:absolute;left:522px;top:1110px;width:799px;height:4px;background:#f8f8f8;"></div>
<div style="position:absolute;left:531.83px;top:1125.93px;font:400 23.5px/1 'Liberation Sans',sans-serif;color:#3a3a3a;white-space:pre;transform-origin:0 0;transform:scaleX(1.0484);">Plot after simulation:</div>
<div style="position:absolute;left:772px;top:1113px;width:139px;height:39px;border:1.5px solid #9a9a9a;border-radius:6px;background:linear-gradient(#f8f8f8,#e4e4e4);box-shadow:0 1px 1px #aaa"></div><div style="position:absolute;left:882px;top:1114px;width:31px;height:40px;border-radius:0 6px 6px 0;background:linear-gradient(#c80000,#960000)"></div><svg style="position:absolute;left:890.5px;top:1130px" width="16" height="10"><rect x="0" y="0" width="14" height="2" fill="#e8f4f4"/><path d="M0.5 2 H13.5 L7 8.5 Z" fill="#fff"/></svg><div style="position:absolute;left:777.00px;top:1121.73px;font:400 23.5px/1 'Liberation Sans',sans-serif;color:#333;white-space:pre;transform-origin:0 0;transform:scaleX(1.0411);">Auto</div>
<div style="position:absolute;left:951.64px;top:1125.73px;font:400 23.5px/1 'Liberation Sans',sans-serif;color:#3a3a3a;white-space:pre;transform-origin:0 0;transform:scaleX(1.0419);">Plotting mode:</div>
<div style="position:absolute;left:1113px;top:1113px;width:198px;height:39px;border:1.5px solid #9a9a9a;border-radius:6px;background:linear-gradient(#f8f8f8,#e4e4e4);box-shadow:0 1px 1px #aaa"></div><div style="position:absolute;left:1282px;top:1114px;width:31px;height:40px;border-radius:0 6px 6px 0;background:linear-gradient(#c80000,#960000)"></div><svg style="position:absolute;left:1290.5px;top:1130px" width="16" height="10"><rect x="0" y="0" width="14" height="2" fill="#e8f4f4"/><path d="M0.5 2 H13.5 L7 8.5 Z" fill="#fff"/></svg><div style="position:absolute;left:1116.01px;top:1121.62px;font:400 23.5px/1 'Liberation Sans',sans-serif;color:#333;white-space:pre;transform-origin:0 0;transform:scaleX(1.0599);">Replace</div>
<div style="position:absolute;left:1321px;top:451px;width:67px;height:720px;border-radius:0 0 6px 0;background:linear-gradient(90deg,#f4f4f4,#dcdcdc 50%,#bdbdbd);border-bottom:1px solid #999"></div>
<div style="position:absolute;left:1336px;top:464px;width:38px;height:2px;background:#8a8a8a"></div><div style="position:absolute;left:1336px;top:468px;width:38px;height:2px;background:#8a8a8a"></div><div style="position:absolute;left:1336px;top:473px;width:38px;height:2px;background:#8a8a8a"></div><svg style="position:absolute;left:1333px;top:482px;overflow:visible" width="12" height="12"><circle cx="6" cy="6" r="5" fill="#f4f4f4" stroke="#999" stroke-width="1.5"/><circle cx="6" cy="6" r="2.2" fill="#e00"/></svg><div style="position:absolute;left:1347px;top:481px;font:700 12px/14px 'Liberation Sans',sans-serif;color:#000;letter-spacing:-0.5px">AC</div><svg style="position:absolute;left:1333px;top:499px;overflow:visible" width="12" height="12"><circle cx="6" cy="6" r="5" fill="#f4f4f4" stroke="#999" stroke-width="1.5"/></svg><div style="position:absolute;left:1347px;top:498px;font:700 12px/14px 'Liberation Sans',sans-serif;color:#000;letter-spacing:-0.5px">DC</div><svg style="position:absolute;left:1333px;top:515px;overflow:visible" width="12" height="12"><circle cx="6" cy="6" r="5" fill="#f4f4f4" stroke="#999" stroke-width="1.5"/></svg><div style="position:absolute;left:1347px;top:514px;font:700 12px/14px 'Liberation Sans',sans-serif;color:#000;letter-spacing:-0.5px">Trans</div><div style="position:absolute;left:1331px;top:544px;width:40px;height:33px;border:3px solid #6a6a6a;border-radius:2px;background:linear-gradient(#e4e4e4,#a8a8a8)"></div><svg style="position:absolute;left:1331px;top:544px;overflow:visible" width="46" height="39"><path d="M15 7 V33 M29 7 V33" stroke="#444" stroke-width="2"/><rect x="11" y="13" width="8" height="6" fill="#ddd" stroke="#555"/><rect x="25" y="25" width="8" height="6" fill="#ddd" stroke="#555"/></svg><svg style="position:absolute;left:1330px;top:604px;overflow:visible" width="48" height="48"><rect x="1" y="1" width="3" height="44" fill="#4a64a8"/><path d="M4 12 H14 M4 33 H14" stroke="#d04040" stroke-width="3"/><rect x="12" y="6" width="15" height="12" rx="5" fill="#4a64a8"/><rect x="12" y="27" width="15" height="12" rx="5" fill="#4a64a8"/><path d="M30 12 H44 M40 8 L44 12 L40 16 M30 33 H44 M40 29 L44 33 L40 37" stroke="#4a64a8" stroke-width="2.5" fill="none"/></svg><svg style="position:absolute;left:1339px;top:673px;overflow:visible" width="28" height="28"><path d="M3 3 L25 25 M25 3 L3 25" stroke="#6a2a00" stroke-width="6"/><path d="M3 3 L25 25 M25 3 L3 25" stroke="#e06010" stroke-width="3.4"/></svg><svg style="position:absolute;left:1332px;top:731px;overflow:visible" width="42" height="42"><defs><radialGradient id="gp" cx="0.4" cy="0.35" r="0.7"><stop offset="0" stop-color="#8ac88a"/><stop offset="1" stop-color="#2a7a3a"/></radialGradient></defs><circle cx="21" cy="21" r="19.5" fill="url(#gp)" stroke="#1e6a2a" stroke-width="2.5"/><path d="M15 11 L31 21 L15 31 Z" fill="#e8f4e8"/></svg><svg style="position:absolute;left:1332px;top:792px;overflow:visible" width="42" height="42"><defs><radialGradient id="rp" cx="0.4" cy="0.35" r="0.7"><stop offset="0" stop-color="#f4a0a0"/><stop offset="1" stop-color="#c83a3a"/></radialGradient></defs><circle cx="21" cy="21" r="19.5" fill="url(#rp)" stroke="#b04040" stroke-width="2.5"/><rect x="13" y="13" width="16" height="16" fill="#f8f0f0" stroke="#a03030" stroke-width="2"/></svg><svg style="position:absolute;left:1330px;top:852px;overflow:visible" width="48" height="48"><rect x="3" y="4" width="42" height="38" fill="#e8eef8"/><path d="M5 14 L12 36 L19 8 L27 34 L35 10 L44 24" stroke="#d08080" stroke-width="2" fill="none"/><path d="M2 2 V45 H46" stroke="#e84020" stroke-width="4" fill="none"/><rect x="6" y="12" width="6" height="6" fill="#4a64a8"/><rect x="12" y="33" width="6" height="6" fill="#4a64a8"/><rect x="16" y="6" width="6" height="6" fill="#4a64a8"/><rect x="30" y="24" width="6" height="6" fill="#4a64a8"/></svg>
<div style="position:absolute;left:4px;top:1172px;width:1384px;height:39px;background:linear-gradient(#e8e8e8,#d2d2d2 50%,#bcbcbc);"></div>
<div style="position:absolute;left:4px;top:1210px;width:1384px;height:2px;background:#8c8c8c;"></div>
<div style="position:absolute;left:18px;top:1186px;width:2px;height:13px;background:#888;"></div>
<div style="position:absolute;left:22px;top:1186px;width:2px;height:13px;background:#888;"></div>
<div style="position:absolute;left:26px;top:1186px;width:2px;height:13px;background:#888;"></div>
<div style="position:absolute;left:31.80px;top:1179.73px;font:400 23.5px/1 'Liberation Sans',sans-serif;color:#3a3a3a;white-space:pre;transform-origin:0 0;transform:scaleX(1.0480);">mouse L:</div>
<div style="position:absolute;left:688.42px;top:1179.23px;font:400 23.5px/1 'Liberation Sans',sans-serif;color:#3a3a3a;white-space:pre;transform-origin:0 0;transform:scaleX(1.1589);">M:</div>
<div style="position:absolute;left:1350.81px;top:1179.23px;font:400 23.5px/1 'Liberation Sans',sans-serif;color:#3a3a3a;white-space:pre;transform-origin:0 0;transform:scaleX(1.0574);">R:</div>
<div style="position:absolute;left:4px;top:1211px;width:1384px;height:45px;background:#efefef;"></div>
<div style="position:absolute;left:4px;top:1212px;width:1384px;height:2px;background:#fafafa;"></div>
<div style="position:absolute;left:4px;top:1212px;width:2px;height:44px;background:#fafafa;"></div>
<div style="position:absolute;left:4px;top:1254px;width:1384px;height:2px;background:#555;"></div>
<div style="position:absolute;left:1386px;top:1211px;width:2px;height:45px;background:#555;"></div>
<div style="position:absolute;left:64px;top:1214px;width:2px;height:40px;background:#444;"></div>
<div style="position:absolute;left:562px;top:1214px;width:2px;height:40px;background:#444;"></div>
<div style="position:absolute;left:748px;top:1214px;width:2px;height:40px;background:#444;"></div>
<div style="position:absolute;left:878px;top:1214px;width:2px;height:40px;background:#444;"></div>
<div style="position:absolute;left:1108px;top:1214px;width:2px;height:40px;background:#444;"></div>
<div style="position:absolute;left:8.28px;top:1222.03px;font:400 23.5px/1 'Liberation Sans',sans-serif;color:#3a3a3a;white-space:pre;transform-origin:0 0;transform:scaleX(1.0351);">2(4)</div>
<div style="position:absolute;left:82.77px;top:1222.03px;font:400 23.5px/1 'Liberation Sans',sans-serif;color:#3a3a3a;white-space:pre;transform-origin:0 0;transform:scaleX(1.0790);">Reliability Data</div>
<div style="position:absolute;left:578.31px;top:1223.73px;font:400 23.5px/1 'Liberation Sans',sans-serif;color:#3a3a3a;white-space:pre;transform-origin:0 0;transform:scaleX(1.0278);">Status: Ready</div>
<div style="position:absolute;left:763.51px;top:1223.73px;font:400 23.5px/1 'Liberation Sans',sans-serif;color:#3a3a3a;white-space:pre;transform-origin:0 0;transform:scaleX(1.0472);">T=27</div>
<div style="position:absolute;left:843.31px;top:1223.73px;font:400 23.5px/1 'Liberation Sans',sans-serif;color:#3a3a3a;white-space:pre;transform-origin:0 0;transform:scaleX(1.0990);">C</div>
<div style="position:absolute;left:894.90px;top:1223.73px;font:400 23.5px/1 'Liberation Sans',sans-serif;color:#3a3a3a;white-space:pre;transform-origin:0 0;transform:scaleX(1.0374);">Simulator: spectre</div>
<div style="position:absolute;left:1124.11px;top:1223.73px;font:400 23.5px/1 'Liberation Sans',sans-serif;color:#3a3a3a;white-space:pre;transform-origin:0 0;transform:scaleX(1.0302);">State: spectre_state1</div>
<div style="position:absolute;left:1373px;top:1220px;width:12px;height:30px;background:#9a9a9e;"></div>
<div style="position:absolute;left:1372px;top:1250px;width:14px;height:2px;background:#555;"></div>
</body></html>
